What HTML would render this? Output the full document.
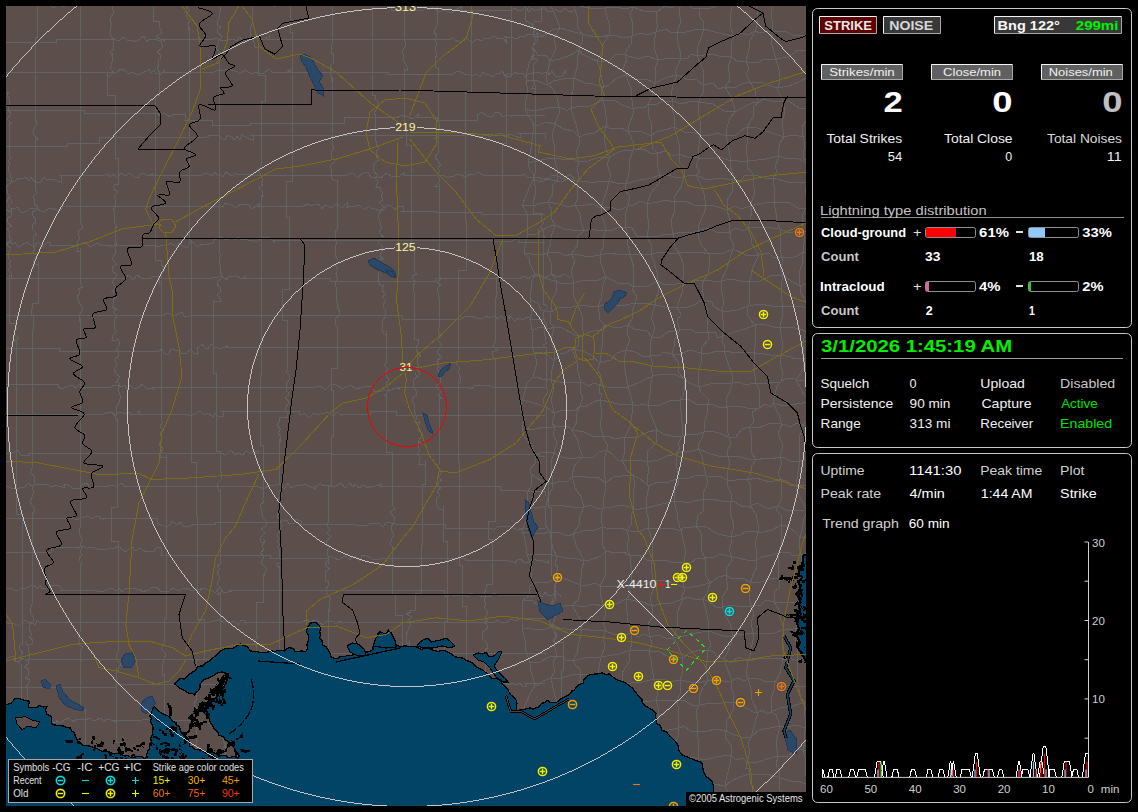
<!DOCTYPE html><html><head><meta charset="utf-8"><style>html,body{margin:0;padding:0;background:#000;width:1138px;height:812px;overflow:hidden}svg{position:absolute;left:0;top:0}text{font-family:"Liberation Sans",sans-serif}</style></head><body>
<svg width="1138" height="812" viewBox="0 0 1138 812">
<defs><clipPath id="mc"><rect x="6" y="6" width="800" height="800"/></clipPath></defs>
<g clip-path="url(#mc)" shape-rendering="crispEdges">
<rect x="6" y="6" width="800" height="800" fill="#5c4f4b"/>
<path d="M6,5H32V5 M32,5 L35,2 L38,4 L42,3 L45,6 L50,5 L53,8 L55,7 L58,3 V5 M56,5 L60,3 L62,6 L65,6 L69,5 L73,5 L78,4 L81,3 V5 M81,5H132V5 M132,5H187V5 M187,5H210V5 M210,5H236V5 M236,5H259V5 M259,5 L261,4 L265,2 L269,4 L273,6 L276,6 L281,4 L286,4 L290,5 L292,4 L297,4 V5 M293,5H350V5 M350,5H391V10 M391,10H423V10 M423,10 L425,8 L429,10 L432,7 L435,9 L439,12 L443,10 L446,11 L449,12 L453,12 L457,9 L461,7 V10 M458,10H503V10 M503,10 L507,10 L512,10 L514,8 L517,10 L522,10 L525,7 L529,12 L532,8 L535,11 L539,9 L543,10 V10 M541,10 L544,7 L548,12 L553,11 L555,9 L558,11 L562,11 L565,8 L569,12 L573,11 V10 M6,42H56V39 M56,39H77V39 M77,39H104V39 M104,39 L107,39 L110,39 L115,39 L117,41 L120,40 L124,37 L127,40 L130,41 L133,40 L136,42 L140,39 L144,36 L147,42 L149,39 L152,40 L156,39 L159,41 L162,39 L164,41 V39 M162,39H211V39 M211,39 L214,39 L218,38 L222,41 L224,40 L228,40 L233,39 L237,41 L240,37 L243,41 L248,39 L252,37 L254,40 L257,36 L261,39 L264,40 L269,36 V39 M266,39H294V39 M294,39H336V39 M336,39H381V39 M381,39H419V39 M419,39H449V39 M449,39 L451,39 L453,38 L455,40 L460,42 L462,41 L466,37 L471,42 L473,42 L477,39 L482,41 L484,39 L488,38 L490,38 L494,36 L498,39 L500,38 L504,39 L506,42 V36 M504,36 L507,38 L510,37 L514,38 L518,38 L521,36 L525,36 L528,34 L532,34 L537,34 L539,33 L542,36 L544,34 L547,33 L552,35 L557,36 V36 M6,72H54V72 M54,72H82V72 M82,72H110V72 M110,72 L114,72 L117,72 L121,69 L126,71 L129,74 L133,72 L137,75 L140,74 L144,72 L147,71 L149,69 L151,73 L154,70 L156,74 L161,73 L164,70 V72 M162,72H194V72 M194,72H214V72 M214,72 L216,71 L219,70 L223,70 L227,69 L231,70 L235,71 L238,72 L240,74 L245,70 L250,73 L253,73 L258,72 V72 M256,72 L260,74 L264,73 L269,69 L272,72 L277,73 L281,72 L286,73 L290,70 V72 M287,72H308V72 M308,72H343V72 M343,72H388V74 M388,74H427V74 M427,74H449V74 M449,74 L453,74 L458,71 L463,73 L465,75 L467,74 L470,75 L474,75 L477,74 L480,77 L483,72 L486,75 L489,74 L493,77 L497,73 L499,74 L502,71 L506,77 V74 M503,74 L506,75 L508,73 L512,75 L515,72 L518,74 L523,73 L525,77 L529,73 L533,73 L537,72 L540,73 L543,73 L547,72 L549,75 L552,71 L555,76 L558,76 L562,76 L565,71 V74 M6,110H51V110 M51,110H84V113 M84,113H137V113 M137,113H158V116 M158,116 L163,113 L167,115 L170,117 L174,114 L178,114 L182,115 L185,114 V120 M184,120H212V125 M212,125H250V123 M250,123H292V123 M292,123H316V123 M316,123H344V117 M344,117H394V117 M394,117 L397,118 L402,115 L405,116 L408,117 L413,119 L418,114 V117 M416,117H438V120 M438,120H477V115 M477,115 L482,112 L487,116 L491,117 L493,116 L495,112 L499,112 L503,117 L507,115 L511,116 V115 M507,115H531V115 M531,115H545V115 M6,146H37V146 M37,146H67V143 M67,143H99V137 M99,137H145V137 M145,137H202V137 M202,137 L206,138 L210,135 L215,136 L219,135 L222,139 L225,140 L228,135 L231,137 L235,140 L237,136 L240,140 L242,134 L244,136 L249,139 L253,140 V135 M250,135H308V135 M308,135H349V135 M349,135H384V135 M384,135H408V135 M408,135H466V135 M466,135 L471,134 L474,135 L477,137 L481,136 L483,136 L487,135 L490,137 L492,134 L494,136 L497,134 L502,133 L506,136 L511,134 L515,136 L520,138 V133 M517,133H540V133 M540,133H545V139 M6,179 L10,181 L15,181 L19,178 L22,179 L26,177 L29,181 L31,177 L33,180 L36,182 L41,182 L44,177 L46,179 L50,179 L53,179 L57,181 L61,182 V175 M59,175H105V175 M105,175 L108,174 L110,177 L114,174 L117,178 L121,173 L125,176 L130,173 L134,177 L138,178 L140,174 L143,173 L148,176 L152,174 V175 M148,175H202V175 M202,175 L206,173 L208,174 L212,176 L215,172 L218,176 L220,174 L223,177 L226,172 L229,174 L232,176 L235,173 L239,175 L242,174 L246,174 L250,174 V175 M249,175H286V175 M286,175H321V175 M321,175H348V175 M348,175 L350,173 L354,174 L358,178 L362,173 L365,173 L368,172 L371,177 L375,177 L378,177 L380,178 L383,176 L387,173 L391,176 L396,176 L400,176 L404,173 V175 M403,175H442V175 M442,175 L447,177 L449,177 L454,176 L458,174 L461,175 L466,177 L470,174 L472,174 L475,175 L478,172 L483,175 V175 M483,175H520V176 M520,176 L524,174 L527,177 L529,177 L531,178 L536,177 L538,177 L541,179 L543,179 L548,178 L553,175 L558,176 L563,179 L565,178 L570,174 L573,178 V176 M6,209 L10,212 L12,208 L16,208 L18,207 L20,212 L24,212 L27,211 L29,209 L33,208 L38,209 L41,211 L44,212 L48,209 L52,208 L57,210 L60,211 L63,207 V206 M62,206H112V206 M112,206H170V206 M170,206H220V206 M220,206 L223,207 L225,203 L228,204 L231,205 L235,207 L237,207 L241,204 L246,205 L248,204 L252,209 L256,206 L259,204 V206 M257,206H303V206 M303,206 L308,204 L312,206 L314,204 L319,204 L322,209 L325,205 L328,206 L332,208 L335,205 L338,204 L342,208 L347,203 V208 M346,208 L350,206 L355,206 L359,205 L364,210 L369,206 L371,208 L375,209 L380,211 L383,210 L387,205 L391,206 L395,210 L398,206 L403,206 V211 M400,211H436V212 M436,212H481V214 M481,214H522V214 M522,214H545V214 M6,245 L8,242 L13,244 L15,242 L17,246 L21,246 L26,242 L29,244 L34,247 L38,242 L43,247 L48,242 L50,242 V245 M49,245H71V245 M71,245 L75,246 L78,244 L81,244 L86,242 L90,247 L94,245 L98,243 L102,246 L104,245 L106,245 L108,245 L113,247 L116,243 V245 M116,245H153V245 M153,245 L158,247 L162,245 L167,245 L171,243 L176,247 L178,243 L183,246 L187,248 L190,242 L193,242 L198,247 L202,244 L206,244 L209,244 L213,243 V239 M213,239 L216,240 L220,236 L224,239 L229,239 L232,238 L236,240 L238,237 L241,240 L245,239 L248,240 L253,240 L257,242 L261,239 L264,237 L269,237 L274,242 V240 M272,240H298V240 M298,240H358V240 M358,240H386V240 M386,240H441V240 M441,240H493V240 M493,240 L495,242 L500,241 L504,242 L508,241 L512,241 L516,239 L518,238 V242 M518,242H545V242 M6,278H42V278 M42,278H79V278 M79,278H125V278 M125,278 L129,275 L133,280 L137,275 L141,278 L145,278 L149,279 L152,277 L157,276 L161,277 V278 M161,278H211V278 M211,278 L215,277 L219,277 L222,276 L226,280 L229,276 L234,277 L236,275 L241,279 L245,277 V278 M242,278H284V278 M284,278H330V281 M330,281H361V281 M361,281H400V281 M400,281H435V278 M435,278H474V278 M474,278H521V276 M521,276 L524,276 L526,277 L529,279 L532,275 L536,277 L539,274 L542,277 L545,278 L548,276 L552,274 L555,276 L559,277 L564,274 L569,277 V276 M6,315H38V315 M38,315H88V315 M88,315H118V315 M118,315H160V315 M160,315 L163,316 L167,313 L170,314 L175,316 L178,314 L182,312 L184,316 L189,316 L191,315 V315 M190,315H241V315 M241,315H286V315 M286,315H337V315 M337,315H370V315 M370,315H402V319 M402,319H461V319 M461,319 L466,316 L471,316 L476,318 L479,318 L483,318 L485,316 L490,318 L494,316 L498,319 L501,316 L505,320 L509,316 V319 M508,319 L510,316 L515,321 L519,318 L523,320 L527,317 L530,318 V319 M529,319H545V319 M6,348H59V351 M59,351H116V351 M116,351H159V351 M159,351 L162,349 L164,353 L166,354 L169,354 L171,349 L175,350 L179,350 L181,353 L186,354 L190,349 L194,353 L197,354 V347 M196,347 L198,348 L202,344 L205,348 L208,349 L211,344 L214,347 L218,348 L220,348 L223,348 L227,346 V347 M226,347H262V347 M262,347H304V347 M304,347H350V347 M350,347H399V347 M399,347H432V347 M432,347H479V347 M479,347H510V347 M510,347H537V347 M537,347H545V347 M6,384H58V387 M58,387 L63,389 L65,387 L69,386 L72,385 L76,388 L80,384 L84,388 V387 M82,387H111V387 M111,387 L114,385 L118,386 L121,387 L125,385 L127,390 L130,385 L134,389 L137,388 L140,387 L142,384 L147,389 L150,388 L153,389 V387 M152,387H189V387 M189,387H210V387 M210,387H232V387 M232,387H270V387 M270,387H315V387 M315,387 L320,386 L323,388 L325,390 L330,385 L334,384 L338,386 L342,389 L346,387 L349,386 L351,385 L355,388 L358,388 V389 M358,389 L361,387 L364,387 L368,386 L372,387 L374,391 L377,391 L382,391 L384,389 L386,391 L391,390 L394,388 L399,389 V387 M397,387H442V387 M442,387H469V387 M469,387 L472,389 L475,385 L478,386 L483,385 L488,385 L493,388 L495,387 V387 M495,387H527V387 M527,387H545V387 M6,414H38V414 M38,414H97V414 M97,414 L101,414 L104,414 L109,412 L112,412 L115,416 L119,412 L121,412 L125,414 L128,412 L132,415 L136,414 L139,411 V414 M137,414H186V414 M186,414 L190,416 L192,415 L195,414 L200,411 L204,415 L208,413 L213,417 L215,413 L218,416 L223,416 V411 M220,411H275V411 M275,411H299V414 M299,414 L302,415 L304,413 L308,417 L310,417 L314,413 L318,415 L322,413 L325,413 L328,412 L330,414 L334,416 L336,412 L341,415 V414 M340,414H370V411 M370,411H396V415 M396,415H440V415 M440,415H498V415 M498,415H545V415 M6,453 L9,453 L12,453 L15,452 L18,450 L21,456 L25,455 L29,455 V453 M28,453H84V453 M84,453H128V453 M128,453H181V453 M181,453H221V453 M221,453 L226,455 L231,450 L235,455 L238,453 L243,455 L246,451 L251,454 L254,452 L258,451 V453 M254,453H289V453 M289,453H331V454 M331,454H352V454 M352,454H388V454 M388,454H414V454 M414,454H454V454 M454,454H505V454 M505,454H539V456 M539,456H545V456 M6,486 L9,487 L11,488 L14,488 L18,489 L21,487 L25,487 L28,483 L32,486 L34,485 L39,484 L44,485 L47,484 L52,487 L55,485 L58,486 L62,487 L64,487 V486 M63,486 L66,484 L70,486 L72,488 L75,488 L80,489 L82,485 L87,483 L89,486 L93,488 L97,486 L102,486 L106,487 L109,485 L113,485 L117,487 L121,483 L124,485 V486 M123,486H165V486 M165,486H205V486 M205,486H255V486 M255,486 L259,487 L264,489 L269,485 L271,485 L275,486 L277,484 L281,486 L284,489 L288,483 L291,488 L294,487 L296,485 L301,486 L305,484 L308,486 L311,487 L315,489 V486 M314,486 L317,486 L320,483 L324,486 L328,485 L332,487 L336,486 L339,484 L341,483 L345,488 L350,483 L353,487 L355,484 L358,487 V486 M357,486 L359,488 L364,485 L368,488 L371,486 L376,486 L381,484 V486 M379,486H414V486 M414,486H450V486 M450,486H480V486 M480,486H500V490 M500,490H525V491 M525,491H545V496 M6,518H36V518 M36,518H73V518 M73,518 L77,520 L81,518 L85,517 L88,516 L91,519 L95,517 L98,516 L103,519 V518 M99,518H157V524 M157,524 L161,525 L164,526 L168,526 L170,525 L172,521 L177,525 L181,522 L183,526 L186,527 L190,526 L193,525 V524 M192,524H215V522 M215,522H252V522 M252,522H279V522 M279,522 L283,521 L287,520 L289,524 L294,523 L296,519 L298,520 L301,521 V524 M300,524H321V524 M321,524H350V524 M350,524 L355,525 L359,526 L363,525 L368,525 L370,523 L374,523 L379,523 L383,527 L387,522 L391,523 L396,524 L399,524 V524 M397,524H445V528 M445,528H492V528 M492,528 L494,530 L497,527 L502,526 L505,526 L509,526 L513,528 L516,529 L518,529 L521,529 V528 M519,528H545V528 M6,552H51V547 M51,547H78V549 M78,549 L81,546 L86,548 L88,548 L93,547 L97,549 L100,549 L102,549 L107,549 L111,548 L115,548 V549 M114,549 L118,546 L123,550 L126,552 L130,548 L133,547 L135,551 L140,548 L142,550 L147,552 L149,551 L154,551 L157,547 L161,548 V555 M160,555H195V555 M195,555H225V555 M225,555H270V558 M270,558H328V558 M328,558 L330,556 L334,558 L339,560 L343,557 L346,556 L350,560 L353,556 L355,556 L360,561 L362,555 L367,556 L371,558 L373,560 L377,559 L380,559 L384,558 L387,559 L390,558 V558 M388,558H432V558 M432,558H465V560 M465,560H504V560 M504,560 L509,561 L511,561 L515,563 L518,559 L521,559 L524,563 L526,562 L529,562 L533,558 L537,561 L540,560 L543,561 L548,563 V560 M6,588 L10,588 L14,590 L18,591 L21,588 L26,588 L30,586 L34,585 L37,589 L40,585 L42,589 L47,588 L50,586 L54,585 L59,586 L62,589 V590 M60,590H94V590 M94,590 L97,591 L102,591 L104,591 L107,590 L111,588 L116,591 L119,588 L122,592 L126,588 L128,588 L132,588 L136,589 L140,589 L142,592 L146,591 V590 M144,590 L149,590 L152,587 L157,587 L160,591 L164,592 L169,591 L173,588 L177,590 L181,590 L183,588 L187,588 L192,591 L195,590 L200,589 V590 M196,590 L199,593 L202,588 L206,589 L208,590 L211,590 L215,593 L220,587 L223,592 L228,592 L232,591 V590 M229,590H264V590 M264,590H322V590 M322,590H355V590 M355,590H397V590 M397,590H444V595 M444,595 L447,597 L451,594 L454,596 L459,595 L461,596 L464,595 L468,597 L470,593 L475,595 L478,594 L481,597 L485,596 L490,597 L493,593 L498,595 L502,595 V595 M500,595H529V595 M529,595 L534,597 L537,592 L542,597 L545,592 L547,595 L552,595 L557,593 L560,596 V595 M6,622 L11,624 L13,623 L17,625 L20,625 L25,620 L28,623 L31,622 L35,625 L37,620 L40,623 L45,622 V622 M42,622H77V622 M77,622H121V622 M121,622H160V622 M160,622H202V622 M202,622 L205,623 L210,622 L215,621 L219,620 L221,620 L223,623 L227,621 L232,622 L234,621 L238,625 L241,620 L245,621 V622 M243,622H302V622 M302,622 L307,620 L310,622 L315,620 L319,622 L323,625 L327,621 L330,621 L333,621 L336,624 L340,621 V622 M338,622H398V622 M398,622H455V622 M455,622H486V620 M486,620 L488,622 L493,622 L495,622 L498,620 L501,623 L505,622 L507,623 L510,619 L513,620 L518,620 V618 M516,618H545V617 M6,659 L10,657 L13,656 L15,662 L18,661 L20,659 L23,658 L25,660 L28,660 V659 M27,659H67V659 M67,659H126V659 M126,659H185V659 M185,659H212V659 M212,659H239V659 M239,659H272V653 M272,653H314V653 M314,653H347V653 M347,653H383V653 M383,653H428V653 M428,653H477V653 M477,653H501V653 M501,653H523V653 M523,653H545V655 M6,687H56V687 M56,687H116V684 M116,684H138V684 M138,684H185V684 M185,684H236V681 M236,681H270V681 M270,681H292V681 M292,681H334V681 M334,681H360V681 M360,681H413V681 M413,681 L415,679 L418,680 L422,681 L425,678 L428,684 L433,681 L436,683 L440,679 L444,680 L448,679 V685 M447,685H482V683 M482,683 L485,685 L487,682 L490,685 L492,684 L497,682 L500,685 L504,683 L506,683 L509,685 L512,683 L516,685 L519,683 L523,686 L526,686 V683 M524,683H545V683 M6,722H56V720 M56,720 L60,723 L64,720 L69,718 L71,720 L74,722 L76,719 L78,720 L83,719 L86,720 L89,718 L94,721 L96,720 L101,718 L104,722 L106,719 L111,720 L115,722 V720 M112,720H138V720 M138,720 L142,720 L144,719 L148,719 L151,722 L155,719 L158,719 L161,720 L164,718 V720 M164,720H192V722 M192,722 L197,722 L199,721 L203,721 L206,721 L209,724 L212,723 L216,723 L220,725 L223,724 L225,722 L229,719 L234,719 L237,720 L242,722 V722 M240,722H292V722 M292,722H334V722 M334,722H372V722 M372,722H409V722 M409,722H447V722 M447,722H472V718 M472,718H501V718 M501,718H545V718 M6,760H32V760 M32,760 L36,758 L39,762 L42,762 L45,762 L47,763 L52,763 L56,759 V760 M53,760H87V763 M87,763H144V763 M144,763 L147,765 L152,766 L155,762 L159,761 L161,762 L163,762 L166,763 L169,762 L173,761 L177,765 L181,763 L185,761 L188,763 V763 M188,763H209V763 M209,763 L213,765 L216,764 L219,760 L223,765 L226,762 L228,762 L230,762 L234,762 L237,764 L239,762 L244,762 L247,766 L252,765 L256,762 L258,761 V763 M257,763H279V763 M279,763H308V763 M308,763H368V763 M368,763 L372,765 L376,761 L379,764 L384,761 L388,765 L392,763 L397,763 L401,761 L406,763 L409,761 L412,765 L416,761 L419,761 L422,762 L425,766 V763 M424,763 L427,762 L430,764 L432,766 L434,763 L437,764 L442,764 L447,763 L451,763 L454,765 L457,761 L460,765 L464,761 L467,764 L472,764 L476,764 L480,764 L482,765 L487,765 V767 M484,767H538V764 M538,764H545V764 M6,794H58V794 M58,794H94V794 M94,794 L97,791 L100,796 L103,795 L106,793 L109,793 L114,795 L116,792 L119,796 L123,795 L127,792 L131,792 L136,792 L138,797 L141,793 L146,795 L151,794 V794 M150,794H190V794 M190,794 L193,797 L196,796 L199,793 L201,795 L206,794 L209,797 L213,795 L216,795 L219,797 L222,795 L226,794 L230,795 L234,794 L237,797 L240,796 L244,795 L247,796 L252,796 V794 M249,794H299V794 M299,794 L303,795 L305,794 L309,795 L312,796 L315,795 L318,797 L322,796 V794 M319,794H366V794 M366,794H397V790 M397,790 L402,788 L405,790 L409,793 L412,793 L417,789 L421,789 L426,790 L429,793 L433,791 L436,789 L440,790 L442,793 L446,790 L450,788 V790 M449,790H505V790 M505,790H544V791 M544,791H545V789 M3,6 L4,10 L6,14 L2,16 L4,19 L5,23 L5,26 L2,28 L6,32 L5,36 L3,41 L5,45 H3 M3,43V70H3 M3,70V92H9 M9,92 L7,95 L9,98 L10,102 L9,106 L8,110 L11,114 L7,119 L11,123 H9 M9,121V154H9 M9,154 L11,158 L8,161 L10,164 L8,168 L8,171 L10,173 L11,178 L11,181 L11,183 L6,186 L7,190 L7,193 L10,196 L7,201 H9 M9,197 L12,202 L8,206 L11,209 L12,212 L11,216 L7,219 L8,223 L12,226 L7,229 L9,231 L9,236 L12,240 L9,242 H9 M9,241 L7,245 L11,248 L9,252 L8,255 L8,258 L11,261 L9,264 L11,267 L8,270 L11,273 L11,278 H9 M9,275V323H16 M16,323 L17,328 L15,331 L14,335 L19,338 L13,341 H16 M16,339V360H16 M16,360V391H16 M16,391V418H16 M16,418V465H16 M16,465V514H22 M22,514V547H22 M22,547V595H22 M22,595V644H21 M21,644 L19,646 L20,650 L23,652 L20,657 L23,659 L18,662 L21,665 H21 M21,665V711H20 M20,711V726H20 M20,726V745H20 M20,745V775H22 M22,775V822H26 M37,6V37H35 M35,37V87H35 M35,87V119H35 M35,119 L37,122 L36,125 L34,129 L33,134 L35,136 L38,139 H35 M35,136V184H35 M35,184 L35,188 L37,193 L33,197 L35,200 L34,204 L38,207 L37,210 L32,212 L33,216 L36,220 L35,225 H35 M35,222 L32,225 L32,229 L37,234 L33,237 L33,241 L33,244 L35,249 L33,252 L37,256 L33,261 L34,264 H38 M38,261V303H32 M32,303 L33,305 L32,309 L31,313 L33,316 L33,321 L34,326 L33,330 H32 M32,330V346H32 M32,346V363H32 M32,363V403H32 M32,403V419H32 M32,419V468H32 M32,468 L31,471 L30,473 L35,477 L34,480 L34,485 L32,489 L34,491 L33,494 L32,497 L30,502 L33,506 L35,510 L34,513 H32 M32,512V551H32 M32,551V574H32 M32,574V604H32 M32,604 L31,607 L30,612 L33,617 L33,621 L30,625 L29,627 L29,630 L32,634 L29,637 L33,640 L32,644 H27 M27,641 L25,643 L28,646 L28,649 L29,652 L29,655 L29,657 L29,660 L28,664 L24,667 L29,669 L28,672 L28,676 L25,678 L30,680 L28,684 L25,687 H27 M27,686V704H27 M27,704 L25,708 L27,711 L25,713 L25,718 L28,721 L25,724 L26,726 L28,729 L29,733 H27 M27,731 L26,733 L26,735 L24,740 L27,742 L25,744 L24,748 L26,750 H27 M27,748 L27,751 L27,754 L29,759 L24,762 L24,765 L27,769 L24,772 L26,775 L28,780 H34 M34,779V799H39 M39,799 L38,803 L39,806 L40,810 L39,814 L36,818 L40,822 H39 M80,6V26H80 M80,26V74H80 M80,74V112H80 M80,112V158H80 M80,158V183H80 M80,183V209H80 M80,209 L80,213 L80,218 L81,223 L82,225 L83,228 L78,231 L79,236 L79,239 L77,243 L78,246 L77,251 H80 M80,248V284H80 M80,284 L83,287 L78,289 L80,293 L77,297 L78,300 L80,304 L82,307 L82,311 L79,316 L79,321 H80 M80,318V335H80 M80,335V382H80 M80,382V412H80 M80,412V450H80 M80,450V482H80 M80,482V528H80 M80,528 L79,533 L80,535 L82,539 L82,541 L80,545 L82,549 L80,551 L82,555 L79,559 L82,564 L80,566 H80 M80,564V613H80 M80,613V632H80 M80,632 L79,635 L78,638 L80,640 L78,644 L83,647 L80,651 L80,655 L80,658 L82,660 L80,662 H80 M80,660V709H85 M85,709V746H85 M85,746V791H85 M85,791 L85,795 L85,799 L87,801 L82,805 L83,808 L87,810 L83,815 L82,817 L83,819 L82,823 L83,826 L87,830 H90 M112,6 L113,10 L114,13 L111,17 L110,20 L112,25 L110,27 L111,31 L110,35 L114,40 L113,42 L113,45 L114,49 L110,52 L112,56 H112 M112,53 L112,58 L112,62 L111,66 L110,68 L112,70 L113,73 L110,76 H107 M107,73V95H115 M115,95V114H115 M115,114V158H118 M118,158V184H115 M115,184 L113,188 L118,192 L114,196 L115,198 L115,202 L116,206 L113,210 L115,212 L114,216 L114,220 L115,223 L117,227 H115 M115,226V254H115 M115,254 L112,259 L117,264 L112,267 L112,271 L117,275 L114,279 L112,283 L116,287 L112,291 H115 M115,291 L113,293 L117,297 L113,299 L114,303 L112,307 L117,309 L113,312 L117,316 L114,321 L115,325 L114,328 L116,332 L113,335 L112,340 H117 M117,338 L119,341 L120,345 L116,349 L119,353 L118,357 L114,360 L116,362 L116,367 L114,369 L116,374 L120,377 L116,382 H117 M117,381 L120,384 L118,387 L119,392 L120,395 L120,399 L119,403 L116,408 L117,412 L115,416 L116,420 H117 M117,418V462H117 M117,462V507H111 M111,507V541H118 M118,541V589H118 M118,589V635H118 M118,635V652H118 M118,652 L116,656 L117,660 L121,664 L119,667 L118,672 H116 M116,668V714H116 M116,714V742H123 M123,742V786H123 M123,786 L122,789 L124,794 L125,796 L123,798 L124,802 H123 M123,801 L124,805 L124,807 L120,811 L125,814 L121,818 L120,822 L122,825 L123,830 L123,835 H116 M153,6V21H159 M159,21 L159,26 L161,30 L162,33 L156,36 L161,40 L162,44 L162,48 L157,52 L161,55 L160,59 L158,61 L159,65 L157,68 L158,70 L160,74 H159 M159,71V95H155 M155,95V118H155 M155,118V158H155 M155,158V198H155 M155,198V215H155 M155,215V260H161 M161,260 L161,264 L164,268 L164,271 L161,274 L162,277 L159,280 L159,284 H161 M161,280V306H161 M161,306V341H161 M161,341V363H161 M161,363V386H161 M161,386V415H161 M161,415 L161,420 L163,422 L160,426 L163,430 L160,433 L161,436 L162,440 L159,445 L163,448 L161,453 L160,457 H166 M166,455V503H166 M166,503V528H166 M166,528V571H166 M166,571V618H164 M164,618V644H164 M164,644 L161,649 L165,653 L166,655 L164,658 L163,663 L162,665 L162,669 L162,672 L162,675 H164 M164,673V722H164 M164,722V756H164 M164,756V776H164 M164,776V821H164 M189,6 L186,8 L190,10 L186,14 L187,17 L190,20 L188,25 L188,30 H189 M189,27V56H189 M189,56 L190,61 L189,65 L189,68 L190,73 H189 M189,72V106H189 M189,106V152H189 M189,152V185H189 M189,185V219H189 M189,219V240H191 M191,240V282H191 M191,282V310H191 M191,310V351H191 M191,351V398H191 M191,398V420H191 M191,420V462H196 M196,462V488H196 M196,488V515H197 M197,515V540H197 M197,540V584H197 M197,584V619H204 M204,619V659H196 M196,659V677H196 M196,677 L195,681 L198,683 L193,686 L197,688 L196,691 L196,694 L197,699 L194,703 L195,707 L197,711 H196 M196,707V756H196 M196,756V781H197 M197,781V829H197 M219,6 L221,11 L219,13 L220,16 L218,20 L217,25 L221,27 L217,30 L218,33 L222,36 L221,39 H219 M219,39 L218,44 L216,49 L220,52 L217,57 L219,60 L216,63 H219 M219,62V91H219 M219,91V140H219 M219,140V159H219 M219,159V205H219 M219,205V224H219 M219,224V251H219 M219,251 L220,254 L221,256 L219,259 L219,264 L221,267 L220,272 L222,275 L222,278 L217,282 L217,285 L220,287 L220,292 L217,295 L219,297 L221,301 H213 M213,300V323H213 M213,323V373H216 M216,373V397H216 M216,397V423H216 M216,423V451H220 M220,451V466H220 M220,466 L220,471 L222,474 L221,477 L222,479 L217,484 L218,488 L219,491 H220 M220,489V527H220 M220,527V564H220 M220,564 L217,566 L220,569 L217,573 L220,577 L219,580 L217,584 L219,586 L221,589 L221,592 L217,594 H220 M220,592V623H220 M220,623V640H220 M220,640V672H226 M226,672V694H226 M226,694 L226,699 L224,703 L229,706 L226,708 L227,713 L229,717 L228,721 L228,725 H226 M226,721 L228,725 L224,729 L226,733 L224,737 L223,742 L226,744 L224,747 H226 M226,746 L225,750 L226,752 L224,757 L224,759 L225,762 L226,766 L225,770 L229,772 L226,776 L227,778 L224,782 L226,785 L223,789 H226 M226,785 L228,789 L225,792 L227,794 L225,798 L226,802 L225,806 L226,811 H234 M252,6V24H252 M252,24 L250,29 L250,31 L250,36 L253,39 L254,43 L255,47 H258 M258,45V75H265 M265,75V101H261 M261,101V129H261 M261,129V166H261 M261,166 L258,169 L260,173 L261,176 L263,180 L261,183 L263,186 L259,188 L262,191 L263,196 H261 M261,195V235H261 M261,235V276H261 M261,276V306H261 M261,306V345H261 M261,345V375H260 M260,375V413H260 M260,413V445H263 M263,445V477H263 M263,477V493H263 M263,493 L264,496 L262,500 L264,502 L260,505 L261,507 L261,511 L263,515 L262,517 L266,521 L266,526 L261,529 L265,533 L262,536 L260,538 L261,542 H263 M263,539 L265,541 L262,546 L264,550 L260,553 L264,556 L263,559 L261,562 L263,565 L266,568 L266,570 L265,573 L264,576 H263 M263,574V602H256 M256,602V626H256 M256,626 L257,630 L256,635 L258,638 L254,640 L255,645 H256 M256,642V692H256 M256,692 L255,694 L258,697 L255,700 L253,704 L254,708 L256,711 L255,713 L256,718 L254,722 L257,726 L258,730 L259,733 H256 M256,731V768H250 M250,768 L253,770 L250,773 L249,776 L251,779 L253,781 L247,786 L252,789 L249,792 L250,794 L250,798 H250 M250,795 L248,799 L248,803 L249,807 L248,810 L251,814 H250 M290,6V32H292 M292,32V74H292 M292,74V115H292 M292,115V143H292 M292,143V181H286 M286,181V217H289 M289,217V241H289 M289,241V289H282 M282,289V320H287 M287,320V343H287 M287,343V370H287 M287,370 L286,372 L289,375 L289,380 L286,385 L286,389 L289,394 L285,398 L289,401 L288,404 L285,409 L287,413 L287,417 H279 M279,417 L279,422 L278,424 L277,426 L281,429 L278,433 L280,436 L281,441 H279 M279,439V478H279 M279,478 L279,483 L282,485 L282,488 L278,492 L282,496 L278,498 L278,501 L281,504 L281,507 L278,512 L277,516 L280,520 H279 M279,519 L281,524 L281,528 L280,531 L277,536 L279,538 L277,542 L281,544 L277,547 L280,550 L279,553 L279,556 L281,560 L282,562 L276,564 L280,569 H279 M279,565V599H279 M279,599V635H279 M279,635V663H279 M279,663V684H279 M279,684V724H273 M273,724 L271,729 L270,731 L271,736 L275,739 L274,742 H273 M273,741 L275,745 L271,750 L274,752 L275,755 L272,759 L276,761 L272,764 L274,768 L273,772 L272,775 L272,779 L273,783 L273,787 H267 M267,786 L269,789 L264,794 L267,798 L266,803 L265,805 L268,809 L268,812 H267 M332,6V44H332 M332,44 L331,48 L331,52 L334,56 L333,58 L334,61 L333,63 L330,66 L332,69 L330,72 L331,76 L331,81 H332 M332,77V107H332 M332,107V145H332 M332,145 L334,148 L332,151 L331,155 L332,158 L335,161 L330,166 L331,169 L332,172 L331,176 L333,180 H337 M337,180V197H337 M337,197V229H337 M337,229 L335,232 L335,234 L335,238 L337,242 L336,245 L335,250 L335,254 L337,259 L339,263 L335,265 L338,269 L336,273 H337 M337,272 L336,276 L338,279 L335,283 L336,287 L336,290 L336,294 L336,297 L337,302 L338,306 H337 M337,305 L338,309 L340,312 L339,316 L335,319 L335,324 L338,327 L337,329 H337 M337,328V368H331 M331,368V390H333 M333,390V406H333 M333,406V436H331 M331,436V485H328 M328,485V518H328 M328,518 L329,520 L328,523 L327,525 L330,530 L327,533 L331,537 L326,541 L326,545 L330,547 L327,551 L328,556 L328,558 L329,563 H328 M328,560 L325,564 L327,567 L330,569 L325,572 L326,577 L325,580 L329,582 L328,586 L326,589 L327,593 L330,598 L330,601 L329,603 L329,607 L329,611 H328 M328,609V630H328 M328,630V650H321 M321,650V689H321 M321,689 L321,692 L320,694 L324,699 L320,701 L321,705 L321,708 L324,712 L319,716 L322,718 L322,722 L319,725 L319,729 L322,732 L318,735 H321 M321,732 L321,734 L321,736 L324,740 L323,743 L322,747 L320,750 L320,753 L321,757 L322,760 L319,765 L318,768 L318,771 L323,774 L324,778 H321 M321,776V821H322 M372,6V43H372 M372,43V76H372 M372,76V95H375 M375,95 L376,100 L378,102 L378,107 L376,110 L374,113 L376,117 H375 M375,114V141H376 M376,141 L376,144 L379,148 L376,152 L376,156 L379,160 L375,162 L373,167 L373,171 L378,175 L375,178 L377,180 L377,184 L376,187 H381 M381,187 L380,190 L383,193 L381,196 L383,200 L379,202 L383,206 L383,208 L381,211 L378,216 L379,219 L380,222 L381,226 L382,228 L379,232 L383,236 H381 M381,235 L383,237 L378,242 L382,246 L383,250 L380,255 L383,259 H381 M381,258 L380,262 L381,266 L381,269 L379,272 L378,276 L379,281 L378,283 L382,286 H384 M384,284 L383,286 L382,291 L385,293 L385,295 L382,297 L386,301 L383,305 L383,307 L385,309 L385,314 L385,317 L383,320 L382,322 L382,327 L382,330 L384,334 H386 M386,331V363H386 M386,363 L384,365 L388,369 L386,371 L386,376 L389,380 L386,384 L387,387 L389,391 L385,395 H386 M386,393V426H386 M386,426V452H392 M392,452V500H392 M392,500 L392,504 L395,509 L390,512 L394,517 L394,521 L393,523 L391,528 L392,531 L394,535 L392,538 L391,541 L390,544 L394,548 H392 M392,546V594H395 M395,594V615H402 M402,615V664H402 M402,664V697H402 M402,697 L399,699 L402,702 L404,705 L399,708 L400,712 L400,715 L402,717 L401,722 H402 M402,719 L402,721 L403,723 L401,727 L400,730 L400,733 L402,737 L401,741 H402 M402,739V782H404 M404,782V824H404 M404,6V40H404 M404,40 L406,43 L405,47 L402,50 L403,54 L403,59 L405,63 L407,67 L407,70 H404 M404,68V83H404 M404,83V123H406 M406,123V145H411 M411,145V167H411 M411,167V190H411 M411,190V215H411 M411,215V246H414 M414,246V271H414 M414,271 L417,274 L412,276 L413,279 L415,282 L413,287 L414,292 L414,296 H414 M414,293V339H419 M419,339 L418,342 L418,344 L416,349 L418,354 L421,356 L417,358 L418,361 L417,363 L419,366 L417,369 L420,373 L418,377 H415 M415,373 L417,377 L413,380 L413,384 L413,386 L415,389 L416,391 L417,395 L412,398 L413,402 L415,406 L414,408 L414,410 L415,413 L417,418 L415,422 H419 M419,421 L419,425 L418,430 L422,433 L422,436 L418,441 L422,444 H419 M419,441 L418,445 L418,447 L420,451 L417,454 L420,457 L420,459 L419,464 H425 M425,460V484H422 M422,484V506H422 M422,506V545H421 M421,545V593H415 M415,593V610H409 M409,610 L411,612 L406,614 L412,617 L407,621 L411,624 L409,628 L408,630 L406,635 L406,638 L406,643 H409 M409,640V688H414 M414,688 L413,693 L414,697 L413,702 L412,704 L413,709 L416,711 L412,715 L412,719 H414 M414,718 L411,721 L414,726 L415,730 L416,734 L415,737 H414 M414,736V758H415 M415,758V789H408 M408,789V833H408 M437,6V25H437 M437,25 L435,29 L434,32 L437,36 L436,38 L435,42 L437,44 L435,48 L436,51 L437,55 L435,58 L435,61 L435,63 L435,67 L439,69 H438 M438,67V113H438 M438,113 L439,117 L437,120 L439,123 L440,128 L438,130 L439,135 L435,138 H438 M438,136V153H438 M438,153 L435,157 L438,161 L441,165 L437,168 L440,171 L438,173 L439,178 L440,181 L435,186 H439 M439,184V229H439 M439,229V266H439 M439,266 L440,269 L439,274 L439,276 L441,279 L437,282 L441,285 L437,288 L437,290 L438,293 L438,297 H439 M439,297V328H439 M439,328 L438,333 L442,336 L437,340 L442,345 L439,349 L437,353 L442,357 L437,361 H439 M439,358 L437,361 L439,366 L437,369 L438,371 L441,374 L440,379 L440,383 L436,386 L437,388 L441,392 L438,396 L442,398 H439 M439,397V438H439 M439,438V464H439 M439,464 L437,466 L442,471 L440,475 L437,477 L442,480 L439,482 L437,485 L441,488 L437,491 L440,495 L437,498 L436,503 L437,505 L439,509 H443 M443,506V541H447 M447,541V557H447 M447,557V601H447 M447,601V621H444 M444,621V654H444 M444,654 L443,656 L443,658 L444,662 L445,665 L443,668 L446,672 L445,677 L445,681 L441,684 L441,687 L443,692 H444 M444,688 L443,692 L442,697 L445,699 L441,702 L445,705 L443,710 L441,714 L445,717 H444 M444,717V735H444 M444,735V775H444 M444,775 L446,777 L445,781 L443,785 L446,787 L446,790 L446,792 L441,796 L445,799 L443,803 L446,807 L442,809 H444 M471,6V46H471 M471,46V92H465 M465,92V134H465 M465,134V149H465 M465,149V174H465 M465,174V191H465 M465,191V221H466 M466,221V270H458 M458,270V304H458 M458,304V344H458 M458,344V360H458 M458,360 L456,364 L460,368 L458,372 L459,375 L461,378 L460,383 H458 M458,378V422H458 M458,422V462H459 M459,462V511H459 M459,511V540H459 M459,540V565H462 M462,565V606H466 M466,606V646H466 M466,646V675H459 M459,675V712H459 M459,712 L460,715 L458,719 L462,723 L461,726 L462,731 L461,734 L457,738 L457,743 L462,747 L462,751 L458,754 L456,757 H459 M459,756V778H459 M459,778 L459,782 L462,786 L462,791 L461,793 L459,795 L458,800 L460,803 H452 M452,802V825H455 M511,6V33H511 M511,33V53H511 M511,53V76H506 M506,76V101H506 M506,101V143H502 M502,143V188H502 M502,188V233H502 M502,233V262H502 M502,262V277H496 M496,277V297H495 M495,297V342H495 M495,342 L493,346 L498,350 L492,352 L493,356 L494,359 H495 M495,358V408H495 M495,408V456H495 M495,456V482H495 M495,482V521H488 M488,521V539H492 M492,539V584H486 M486,584 L486,589 L484,594 L486,596 L484,601 L486,604 L484,608 L488,612 L486,616 H485 M485,616 L488,619 L484,621 L487,625 L488,628 L482,632 L482,635 L482,638 L486,642 L487,644 L488,647 L486,650 H485 M485,648V682H485 M485,682 L482,686 L488,690 L488,692 L487,697 L484,701 L482,706 L486,710 L486,713 L487,716 L485,720 L487,724 L485,728 L488,731 H489 M489,731V746H489 M489,746V790H489 M489,790V832H489 M541,6V21H535 M535,21 L532,24 L534,29 L537,34 L538,37 L537,42 L532,47 L533,51 L534,54 L532,59 H535 M535,55 L532,57 L538,60 L535,63 L533,67 L534,70 L533,73 L534,78 L533,80 L535,83 L532,88 H535 M535,85V124H535 M535,124V168H535 M535,168 L536,173 L533,177 L535,180 L534,182 L535,186 L535,191 L535,195 L534,199 H535 M535,198 L533,200 L533,204 L535,206 L533,208 L533,211 L533,213 H543 M543,213 L541,216 L541,219 L544,223 L540,227 L544,230 L543,235 L545,237 H543 M543,236V267H543 M543,267V304H545 M545,304 L548,308 L543,313 L543,317 L544,320 L547,325 L545,329 L544,334 L546,338 L545,341 L547,343 L543,345 L546,348 H546 M546,347V384H546 M546,384 L546,387 L547,390 L547,393 L544,398 L543,403 L547,407 H546 M546,407V455H546 M546,455V479H548 M548,479V507H551 M551,507V541H551 M551,541V575H555 M555,575 L555,578 L557,581 L556,584 L554,587 L556,591 H555 M555,591 L555,595 L555,600 L552,603 L555,606 L552,609 L552,613 L555,615 L555,618 L554,622 L552,624 L558,628 L554,631 L556,634 L557,637 L553,639 L554,642 H563 M563,641V670H561 M561,670V705H568 M568,705 L569,710 L566,713 L568,718 L567,722 L568,726 L571,729 L567,732 L571,735 L567,738 L566,742 L570,745 L570,749 H564 M564,749V768H564 M564,768V791H564 M564,791 L566,794 L566,797 L564,800 L562,803 L567,806 L564,810 L566,814 L565,819 L566,821 L563,823 L564,826 L564,830 L562,833 L564,837 H564 M525,11 L530,6 L537,1 L546,-1 M525,11 L526,21 L533,25 L534,37 M534,37 L544,36 L552,30 L560,28 M534,37 L536,39 L532,48 L535,50 M535,50 L538,56 L546,55 L550,61 M535,50 L530,61 L527,71 L526,80 M526,80 L535,80 L540,82 L548,85 M526,80 L528,91 L526,100 L525,109 M525,109 L533,111 L549,108 L559,107 M525,109 L528,115 L532,121 L534,126 M534,126 L539,125 L546,122 L555,124 M534,126 L532,140 L531,149 L528,163 M528,163 L537,161 L546,159 L554,158 M528,163 L530,170 L534,174 L533,180 M533,180 L543,182 L547,179 L557,181 M533,180 L529,188 L526,196 L522,205 M522,205 L534,206 L538,204 L548,202 M522,205 L527,213 L527,228 L528,235 M528,235 L536,234 L548,227 L555,225 M528,235 L525,243 L525,246 L524,253 M524,253 L531,254 L542,255 L547,253 M524,253 L529,258 L530,264 L535,274 M535,274 L540,276 L548,279 L557,282 M535,274 L531,284 L531,290 L530,300 M530,300 L538,303 L541,310 L551,312 M530,300 L532,312 L530,319 L532,330 M532,330 L540,327 L549,329 L554,327 M532,330 L533,335 L532,344 L534,352 M534,352 L543,353 L548,355 L554,361 M534,352 L537,362 L535,370 L533,377 M533,377 L537,377 L542,379 L551,380 M533,377 L527,383 L524,395 L522,400 M522,400 L534,403 L546,407 L554,413 M522,400 L520,409 L524,417 L522,429 M522,429 L535,429 L546,427 L555,427 M522,429 L523,435 L532,446 L535,454 M535,454 L543,452 L546,452 L554,453 M535,454 L536,462 L530,469 L531,474 M531,474 L535,477 L544,482 L553,484 M531,474 L531,486 L527,493 L528,507 M528,507 L535,508 L537,508 L546,506 M528,507 L529,514 L524,525 L522,532 M522,532 L534,533 L541,534 L550,532 M522,532 L524,536 L526,546 L527,554 M527,554 L536,554 L546,554 L557,556 M527,554 L531,566 L531,576 L533,584 M533,584 L538,582 L549,582 L555,578 M533,584 L529,587 L529,596 L523,600 M523,600 L533,601 L538,605 L550,606 M523,600 L522,612 L523,620 L522,628 M522,628 L533,629 L541,630 L553,627 M522,628 L525,640 L525,648 L530,663 M530,663 L540,662 L549,657 L557,656 M530,663 L531,672 L534,681 L535,686 M535,686 L538,685 L543,681 L551,678 M535,686 L531,692 L526,703 L523,710 M523,710 L537,708 L546,713 L558,712 M523,710 L523,719 L531,723 L532,731 M532,731 L539,727 L548,728 L559,727 M532,731 L534,742 L534,751 L535,757 M535,757 L539,758 L540,757 L547,758 M535,757 L528,762 L529,768 L523,777 M523,777 L529,780 L539,780 L546,786 M523,777 L520,788 L522,795 L523,808 M523,808 L534,806 L548,802 L556,804 M523,808 L523,814 L528,829 L530,836 M546,-1 L557,-2 L564,2 L573,4 M546,-1 L553,10 L556,17 L560,28 M560,28 L567,30 L574,32 L582,34 M560,28 L554,38 L556,49 L550,61 M550,61 L560,59 L571,55 L579,50 M550,61 L548,70 L546,78 L548,85 M548,85 L553,81 L563,79 L574,78 M548,85 L553,89 L557,97 L559,107 M559,107 L566,110 L568,110 L571,108 M559,107 L560,112 L558,116 L555,124 M555,124 L564,129 L573,131 L579,137 M555,124 L552,135 L555,148 L554,158 M554,158 L561,159 L573,159 L579,162 M554,158 L557,168 L557,173 L557,181 M557,181 L563,181 L568,179 L578,181 M557,181 L552,186 L553,194 L548,202 M548,202 L559,204 L568,207 L575,205 M548,202 L551,209 L551,218 L555,225 M555,225 L564,229 L572,230 L584,231 M555,225 L552,234 L550,246 L547,253 M547,253 L558,252 L566,256 L571,254 M547,253 L551,263 L552,274 L557,282 M557,282 L563,284 L571,283 L574,283 M557,282 L556,292 L551,302 L551,312 M551,312 L557,308 L572,307 L578,306 M551,312 L550,317 L550,323 L554,327 M554,327 L562,328 L575,335 L584,335 M554,327 L551,340 L554,350 L554,361 M554,361 L560,354 L565,353 L572,349 M554,361 L552,370 L551,376 L551,380 M551,380 L563,383 L571,382 L581,382 M551,380 L554,389 L551,399 L554,413 M554,413 L563,410 L574,411 L580,406 M554,413 L554,417 L552,423 L555,427 M555,427 L561,426 L568,426 L572,430 M555,427 L553,435 L557,442 L554,453 M554,453 L562,457 L572,459 L583,457 M554,453 L551,462 L552,476 L553,484 M553,484 L557,482 L568,481 L572,476 M553,484 L552,489 L548,497 L546,506 M546,506 L556,505 L573,507 L584,507 M546,506 L545,514 L546,526 L550,532 M550,532 L560,533 L568,536 L573,534 M550,532 L551,539 L553,549 L557,556 M557,556 L567,558 L577,559 L584,561 M557,556 L555,564 L558,568 L555,578 M555,578 L563,578 L573,582 L580,585 M555,578 L555,588 L554,597 L550,606 M550,606 L558,609 L566,605 L572,605 M550,606 L548,616 L550,623 L553,627 M553,627 L566,629 L575,629 L582,629 M553,627 L556,637 L554,644 L557,656 M557,656 L564,657 L565,660 L573,661 M557,656 L553,662 L555,671 L551,678 M551,678 L562,678 L571,675 L581,674 M551,678 L553,688 L557,703 L558,712 M558,712 L561,711 L565,705 L572,707 M558,712 L559,719 L558,725 L559,727 M559,727 L569,728 L578,733 L584,733 M559,727 L553,740 L551,746 L547,758 M547,758 L558,756 L571,752 L583,750 M547,758 L544,768 L548,778 L546,786 M546,786 L557,785 L565,777 L579,777 M546,786 L547,792 L553,796 L556,804 M556,804 L562,800 L566,805 L576,801 M556,804 L557,811 L554,824 L552,834 M573,4 L584,7 L595,9 L605,8 M573,4 L577,16 L577,26 L582,34 M582,34 L590,36 L602,37 L609,35 M582,34 L583,39 L580,47 L579,50 M579,50 L582,54 L592,59 L597,61 M579,50 L577,60 L577,68 L574,78 M574,78 L585,83 L593,84 L604,87 M574,78 L573,90 L571,97 L571,108 M571,108 L581,106 L590,106 L603,100 M571,108 L574,119 L576,124 L579,137 M579,137 L587,134 L594,133 L606,126 M579,137 L579,145 L576,152 L579,162 M579,162 L588,161 L597,158 L610,157 M579,162 L577,169 L579,175 L578,181 M578,181 L589,182 L596,182 L609,181 M578,181 L577,191 L578,197 L575,205 M575,205 L586,205 L593,204 L601,208 M575,205 L580,214 L581,222 L584,231 M584,231 L591,229 L600,231 L606,230 M584,231 L577,237 L578,245 L571,254 M571,254 L579,255 L589,257 L600,255 M571,254 L575,261 L571,271 L574,283 M574,283 L584,280 L596,281 L606,277 M574,283 L573,288 L574,297 L578,306 M578,306 L583,305 L591,307 L598,306 M578,306 L583,318 L582,326 L584,335 M584,335 L589,332 L600,330 L605,325 M584,335 L578,338 L579,346 L572,349 M572,349 L583,351 L591,355 L600,363 M572,349 L577,362 L577,368 L581,382 M581,382 L589,386 L594,383 L600,385 M581,382 L580,392 L583,397 L580,406 M580,406 L585,407 L593,402 L600,400 M580,406 L576,415 L577,422 L572,430 M572,430 L584,432 L592,436 L603,436 M572,430 L578,441 L580,450 L583,457 M583,457 L593,458 L599,452 L607,450 M583,457 L576,464 L574,467 L572,476 M572,476 L586,477 L597,477 L606,483 M572,476 L575,488 L581,497 L584,507 M584,507 L590,505 L598,509 L603,508 M584,507 L580,516 L579,525 L573,534 M573,534 L583,531 L595,530 L603,527 M573,534 L576,545 L580,553 L584,561 M584,561 L590,560 L601,556 L606,551 M584,561 L582,568 L581,578 L580,585 M580,585 L584,586 L596,583 L600,586 M580,585 L580,592 L578,600 L572,605 M572,605 L584,607 L593,604 L604,606 M572,605 L578,616 L580,619 L582,629 M582,629 L590,630 L597,630 L606,631 M582,629 L579,642 L577,653 L573,661 M573,661 L585,658 L594,657 L601,657 M573,661 L576,666 L580,669 L581,674 M581,674 L587,675 L593,677 L596,679 M581,674 L579,688 L574,693 L572,707 M572,707 L582,709 L589,713 L597,713 M572,707 L578,715 L583,723 L584,733 M584,733 L594,735 L600,733 L609,733 M584,733 L583,738 L583,747 L583,750 M583,750 L586,757 L595,758 L598,761 M583,750 L583,758 L582,770 L579,777 M579,777 L585,779 L591,781 L600,785 M579,777 L580,786 L576,794 L576,801 M576,801 L584,800 L594,806 L605,807 M576,801 L574,809 L576,815 L577,825 M605,8 L616,7 L625,9 L633,7 M605,8 L606,14 L610,26 L609,35 M609,35 L617,36 L624,38 L632,36 M609,35 L602,46 L602,52 L597,61 M597,61 L609,61 L616,54 L625,55 M597,61 L600,69 L602,80 L604,87 M604,87 L609,85 L617,78 L626,75 M604,87 L601,89 L602,96 L603,100 M603,100 L616,101 L622,105 L633,109 M603,100 L605,108 L606,116 L606,126 M606,126 L610,129 L622,128 L628,132 M606,126 L604,137 L606,149 L610,157 M610,157 L619,152 L625,150 L633,150 M610,157 L607,164 L611,175 L609,181 M609,181 L616,183 L621,183 L626,184 M609,181 L607,190 L603,201 L601,208 M601,208 L609,207 L620,210 L628,206 M601,208 L601,215 L604,221 L606,230 M606,230 L611,231 L617,228 L625,227 M606,230 L603,239 L604,244 L600,255 M600,255 L610,253 L621,255 L630,254 M600,255 L600,261 L603,269 L606,277 M606,277 L618,283 L627,283 L634,287 M606,277 L603,285 L601,299 L598,306 M598,306 L608,304 L621,306 L635,303 M598,306 L599,312 L600,320 L605,325 M605,325 L613,327 L622,327 L628,325 M605,325 L602,336 L602,347 L600,363 M600,363 L611,360 L617,353 L626,350 M600,363 L597,370 L601,375 L600,385 M600,385 L607,387 L618,388 L628,387 M600,385 L599,393 L602,394 L600,400 M600,400 L611,402 L621,405 L632,404 M600,400 L602,414 L600,424 L603,436 M603,436 L610,437 L615,439 L625,437 M603,436 L604,439 L608,446 L607,450 M607,450 L613,455 L618,460 L622,461 M607,450 L604,460 L604,473 L606,483 M606,483 L613,477 L622,476 L633,475 M606,483 L605,491 L604,497 L603,508 M603,508 L613,507 L621,505 L634,508 M603,508 L601,514 L601,520 L603,527 M603,527 L609,529 L621,528 L626,530 M603,527 L602,537 L602,544 L606,551 M606,551 L615,553 L624,552 L630,556 M606,551 L605,565 L605,576 L600,586 M600,586 L611,586 L624,586 L633,587 M600,586 L600,590 L601,597 L604,606 M604,606 L614,603 L617,604 L626,599 M604,606 L606,614 L603,622 L606,631 M606,631 L613,634 L623,635 L632,633 M606,631 L603,637 L605,646 L601,657 M601,657 L613,655 L619,654 L630,650 M601,657 L599,667 L598,674 L596,679 M596,679 L607,681 L615,685 L622,687 M596,679 L597,687 L598,703 L597,713 M597,713 L605,708 L614,708 L626,706 M597,713 L598,722 L604,729 L609,733 M609,733 L619,731 L624,728 L635,727 M609,733 L606,745 L604,751 L598,761 M598,761 L606,758 L620,754 L630,750 M598,761 L601,771 L600,779 L600,785 M600,785 L607,788 L620,782 L629,784 M600,785 L600,794 L602,803 L605,807 M605,807 L610,808 L617,812 L623,810 M605,807 L604,817 L607,821 L606,828 M633,7 L643,11 L650,11 L657,12 M633,7 L630,15 L633,24 L632,36 M632,36 L641,33 L647,35 L656,32 M632,36 L631,44 L627,49 L625,55 M625,55 L638,59 L647,56 L658,60 M625,55 L627,59 L623,69 L626,75 M626,75 L634,79 L646,79 L655,83 M626,75 L631,89 L632,100 L633,109 M633,109 L640,107 L645,108 L648,104 M633,109 L633,114 L629,125 L628,132 M628,132 L635,131 L643,132 L651,136 M628,132 L630,135 L633,142 L633,150 M633,150 L644,149 L650,153 L657,153 M633,150 L629,162 L629,173 L626,184 M626,184 L635,181 L651,178 L660,175 M626,184 L625,190 L630,196 L628,206 M628,206 L634,205 L640,201 L647,204 M628,206 L625,215 L626,219 L625,227 M625,227 L632,228 L637,236 L647,237 M625,227 L628,234 L627,242 L630,254 M630,254 L636,254 L646,254 L651,254 M630,254 L634,268 L633,273 L634,287 M634,287 L640,286 L648,286 L658,281 M634,287 L632,289 L637,297 L635,303 M635,303 L642,304 L646,303 L655,305 M635,303 L632,312 L632,319 L628,325 M628,325 L634,329 L647,331 L652,337 M628,325 L627,334 L630,339 L626,350 M626,350 L635,352 L642,356 L650,356 M626,350 L624,363 L626,376 L628,387 M628,387 L638,383 L642,381 L653,376 M628,387 L630,393 L632,401 L632,404 M632,404 L636,406 L644,404 L648,406 M632,404 L632,414 L630,427 L625,437 M625,437 L638,437 L648,432 L657,430 M625,437 L624,445 L625,452 L622,461 M622,461 L632,460 L639,460 L647,462 M622,461 L624,464 L627,471 L633,475 M633,475 L639,478 L645,483 L648,486 M633,475 L635,484 L633,494 L634,508 M634,508 L636,510 L640,509 L647,508 M634,508 L631,516 L631,525 L626,530 M626,530 L636,532 L640,531 L648,528 M626,530 L629,537 L627,548 L630,556 M630,556 L639,555 L647,560 L652,560 M630,556 L631,566 L631,576 L633,587 M633,587 L641,584 L647,584 L652,580 M633,587 L628,588 L631,593 L626,599 M626,599 L636,601 L641,601 L652,606 M626,599 L627,611 L627,619 L632,633 M632,633 L637,637 L645,634 L650,637 M632,633 L631,638 L632,643 L630,650 M630,650 L635,650 L641,650 L649,651 M630,650 L629,662 L622,673 L622,687 M622,687 L633,682 L642,682 L654,679 M622,687 L623,691 L627,697 L626,706 M626,706 L639,701 L646,702 L656,700 M626,706 L628,713 L634,719 L635,727 M635,727 L639,726 L651,729 L655,729 M635,727 L635,734 L630,743 L630,750 M630,750 L640,753 L647,751 L659,753 M630,750 L631,764 L629,775 L629,784 M629,784 L634,783 L643,782 L652,778 M629,784 L626,791 L624,803 L623,810 M623,810 L635,810 L643,803 L653,803 M623,810 L629,817 L632,827 L635,836 M657,12 L665,6 L671,8 L681,3 M657,12 L656,21 L658,25 L656,32 M656,32 L666,29 L670,32 L677,32 M656,32 L654,43 L655,51 L658,60 M658,60 L664,59 L673,58 L681,58 M658,60 L655,69 L656,73 L655,83 M655,83 L665,78 L668,77 L677,75 M655,83 L652,90 L653,95 L648,104 M648,104 L657,104 L663,101 L673,101 M648,104 L649,117 L652,125 L651,136 M651,136 L656,132 L668,129 L674,127 M651,136 L652,143 L652,148 L657,153 M657,153 L666,151 L672,156 L680,154 M657,153 L657,161 L658,168 L660,175 M660,175 L667,175 L678,178 L684,177 M660,175 L659,183 L651,193 L647,204 M647,204 L658,202 L666,200 L674,202 M647,204 L647,213 L649,225 L647,237 M647,237 L658,236 L663,235 L673,234 M647,237 L651,244 L652,249 L651,254 M651,254 L661,252 L672,254 L679,253 M651,254 L654,262 L657,273 L658,281 M658,281 L665,285 L676,284 L682,283 M658,281 L659,291 L655,300 L655,305 M655,305 L665,307 L669,307 L677,308 M655,305 L651,318 L655,327 L652,337 M652,337 L661,337 L668,332 L680,330 M652,337 L650,344 L650,351 L650,356 M650,356 L660,355 L663,352 L672,354 M650,356 L653,363 L651,367 L653,376 M653,376 L661,374 L676,375 L684,379 M653,376 L650,386 L650,394 L648,406 M648,406 L660,405 L672,400 L680,400 M648,406 L650,412 L653,420 L657,430 M657,430 L663,434 L672,436 L682,436 M657,430 L656,443 L647,452 L647,462 M647,462 L659,460 L667,456 L676,454 M647,462 L649,470 L647,478 L648,486 M648,486 L658,482 L669,482 L678,478 M648,486 L648,491 L646,502 L647,508 M647,508 L654,506 L666,503 L674,501 M647,508 L646,512 L649,519 L648,528 M648,528 L660,529 L671,528 L681,531 M648,528 L652,540 L653,547 L652,560 M652,560 L664,560 L675,563 L684,562 M652,560 L651,569 L652,573 L652,580 M652,580 L664,580 L675,584 L683,587 M652,580 L654,587 L650,598 L652,606 M652,606 L660,604 L671,603 L683,599 M652,606 L652,618 L648,624 L650,637 M650,637 L658,635 L666,638 L673,638 M650,637 L652,644 L650,648 L649,651 M649,651 L660,652 L669,657 L683,658 M649,651 L651,661 L652,669 L654,679 M654,679 L665,679 L669,682 L680,680 M654,679 L656,688 L658,692 L656,700 M656,700 L661,700 L670,700 L677,701 M656,700 L658,708 L659,718 L655,729 M655,729 L662,731 L669,730 L679,728 M655,729 L655,737 L658,744 L659,753 M659,753 L665,759 L671,756 L673,761 M659,753 L654,761 L656,770 L652,778 M652,778 L664,784 L671,782 L679,786 M652,778 L652,784 L652,796 L653,803 M653,803 L660,802 L668,808 L675,807 M653,803 L655,810 L654,819 L655,830 M681,3 L689,4 L693,9 L699,8 M681,3 L679,12 L681,21 L677,32 M677,32 L686,32 L694,30 L704,29 M677,32 L678,43 L680,51 L681,58 M681,58 L687,59 L691,54 L697,56 M681,58 L679,63 L675,71 L677,75 M677,75 L686,79 L696,79 L703,85 M677,75 L673,85 L671,95 L673,101 M673,101 L681,104 L692,101 L699,102 M673,101 L672,109 L675,118 L674,127 M674,127 L684,132 L693,132 L700,135 M674,127 L677,136 L679,144 L680,154 M680,154 L689,158 L693,157 L699,158 M680,154 L679,162 L685,168 L684,177 M684,177 L690,175 L693,175 L696,175 M684,177 L681,187 L675,196 L674,202 M674,202 L685,201 L694,205 L706,206 M674,202 L675,210 L671,221 L673,234 M673,234 L682,232 L691,233 L698,231 M673,234 L674,240 L675,247 L679,253 M679,253 L690,252 L700,252 L709,254 M679,253 L683,263 L684,274 L682,283 M682,283 L688,284 L697,280 L704,280 M682,283 L682,293 L680,298 L677,308 M677,308 L688,307 L694,305 L703,300 M677,308 L681,314 L677,321 L680,330 M680,330 L690,329 L697,333 L708,332 M680,330 L675,339 L674,347 L672,354 M672,354 L680,354 L690,350 L701,353 M672,354 L678,362 L679,373 L684,379 M684,379 L688,382 L692,384 L699,387 M684,379 L685,388 L683,396 L680,400 M680,400 L688,399 L696,404 L708,404 M680,400 L681,411 L682,422 L682,436 M682,436 L690,434 L695,435 L704,432 M682,436 L678,444 L680,448 L676,454 M676,454 L683,451 L689,452 L699,449 M676,454 L676,462 L677,468 L678,478 M678,478 L686,479 L697,475 L706,476 M678,478 L679,483 L674,491 L674,501 M674,501 L684,502 L691,502 L704,499 M674,501 L677,513 L678,521 L681,531 M681,531 L683,528 L693,527 L696,526 M681,531 L684,544 L686,550 L684,562 M684,562 L691,563 L697,558 L705,558 M684,562 L681,571 L684,577 L683,587 M683,587 L691,587 L699,586 L710,583 M683,587 L685,591 L681,596 L683,599 M683,599 L688,597 L698,600 L703,599 M683,599 L678,611 L677,627 L673,638 M673,638 L684,636 L696,633 L709,631 M673,638 L677,643 L680,651 L683,658 M683,658 L689,653 L699,650 L708,650 M683,658 L682,666 L682,675 L680,680 M680,680 L690,682 L696,683 L708,681 M680,680 L681,688 L680,694 L677,701 M677,701 L684,700 L692,705 L699,705 M677,701 L679,712 L678,722 L679,728 M679,728 L684,726 L690,731 L697,732 M679,728 L678,737 L672,751 L673,761 M673,761 L680,763 L691,757 L699,759 M673,761 L675,771 L675,781 L679,786 M679,786 L683,783 L693,786 L698,784 M679,786 L678,796 L675,797 L675,807 M675,807 L685,807 L694,808 L705,809 M675,807 L677,815 L676,827 L675,836 M699,8 L708,9 L719,5 L731,5 M699,8 L699,16 L703,21 L704,29 M704,29 L711,31 L723,34 L734,36 M704,29 L702,35 L697,49 L697,56 M697,56 L711,54 L719,56 L732,57 M697,56 L701,65 L704,73 L703,85 M703,85 L713,83 L718,89 L725,87 M703,85 L703,93 L699,99 L699,102 M699,102 L713,104 L724,111 L735,112 M699,102 L698,112 L701,124 L700,135 M700,135 L711,135 L717,133 L726,136 M700,135 L699,145 L698,153 L699,158 M699,158 L711,159 L719,157 L731,161 M699,158 L696,166 L700,172 L696,175 M696,175 L707,180 L720,178 L732,180 M696,175 L702,187 L704,194 L706,206 M706,206 L710,205 L718,207 L727,210 M706,206 L704,213 L699,225 L698,231 M698,231 L708,228 L716,232 L730,232 M698,231 L699,239 L702,246 L709,254 M709,254 L718,253 L724,253 L733,249 M709,254 L710,265 L708,274 L704,280 M704,280 L709,280 L715,282 L721,281 M704,280 L702,285 L703,293 L703,300 M703,300 L712,302 L713,306 L722,311 M703,300 L707,308 L707,322 L708,332 M708,332 L715,332 L718,338 L722,336 M708,332 L709,339 L702,347 L701,353 M701,353 L710,353 L717,351 L724,351 M701,353 L701,363 L698,373 L699,387 M699,387 L710,384 L719,383 L732,383 M699,387 L701,392 L708,399 L708,404 M708,404 L714,405 L721,408 L727,407 M708,404 L707,414 L705,421 L704,432 M704,432 L711,431 L719,433 L729,437 M704,432 L702,438 L698,445 L699,449 M699,449 L708,453 L718,456 L728,457 M699,449 L702,456 L704,466 L706,476 M706,476 L715,477 L719,476 L727,480 M706,476 L708,482 L703,494 L704,499 M704,499 L710,499 L721,501 L731,501 M704,499 L703,511 L698,515 L696,526 M696,526 L706,527 L718,534 L731,537 M696,526 L702,534 L701,549 L705,558 M705,558 L715,557 L720,554 L732,557 M705,558 L705,567 L706,575 L710,583 M710,583 L717,578 L719,577 L726,575 M710,583 L708,590 L707,593 L703,599 M703,599 L709,602 L716,607 L722,607 M703,599 L706,610 L708,620 L709,631 M709,631 L717,634 L726,637 L733,636 M709,631 L708,637 L711,645 L708,650 M708,650 L714,652 L716,656 L724,659 M708,650 L707,660 L706,670 L708,681 M708,681 L716,678 L725,682 L732,681 M708,681 L703,687 L699,697 L699,705 M699,705 L711,703 L722,703 L733,702 M699,705 L696,711 L698,726 L697,732 M697,732 L708,731 L715,729 L726,731 M697,732 L699,743 L698,747 L699,759 M699,759 L708,759 L722,756 L731,755 M699,759 L701,766 L696,774 L698,784 M698,784 L710,786 L714,784 L725,786 M698,784 L700,792 L700,803 L705,809 M705,809 L712,806 L716,807 L726,805 M705,809 L709,817 L710,824 L709,828 M731,5 L740,2 L746,5 L756,4 M731,5 L731,13 L730,27 L734,36 M734,36 L742,33 L748,35 L755,31 M734,36 L731,44 L731,53 L732,57 M732,57 L738,62 L741,61 L746,62 M732,57 L728,66 L730,80 L725,87 M725,87 L736,87 L742,84 L750,82 M725,87 L730,95 L734,106 L735,112 M735,112 L742,108 L752,103 L759,102 M735,112 L730,118 L726,130 L726,136 M726,136 L736,135 L740,131 L747,127 M726,136 L728,144 L729,150 L731,161 M731,161 L735,160 L741,162 L748,161 M731,161 L730,166 L734,176 L732,180 M732,180 L742,180 L744,176 L753,175 M732,180 L732,192 L727,200 L727,210 M727,210 L735,206 L741,209 L750,206 M727,210 L729,217 L729,225 L730,232 M730,232 L735,228 L744,231 L748,228 M730,232 L731,239 L734,245 L733,249 M733,249 L744,254 L747,256 L759,255 M733,249 L729,261 L727,268 L721,281 M721,281 L731,279 L741,281 L749,282 M721,281 L721,289 L724,302 L722,311 M722,311 L730,311 L737,310 L748,306 M722,311 L723,321 L723,331 L722,336 M722,336 L734,332 L745,329 L755,325 M722,336 L722,340 L725,348 L724,351 M724,351 L737,353 L744,352 L754,353 M724,351 L728,363 L732,374 L732,383 M732,383 L739,382 L745,385 L756,383 M732,383 L730,391 L726,399 L727,407 M727,407 L740,406 L750,409 L759,408 M727,407 L728,418 L727,428 L729,437 M729,437 L736,437 L742,429 L749,427 M729,437 L731,444 L727,451 L728,457 M728,457 L735,456 L749,459 L756,460 M728,457 L730,463 L728,470 L727,480 M727,480 L736,480 L740,479 L747,480 M727,480 L727,485 L731,493 L731,501 M731,501 L735,502 L743,507 L750,506 M731,501 L730,512 L734,526 L731,537 M731,537 L740,535 L747,531 L758,532 M731,537 L731,544 L729,550 L732,557 M732,557 L738,558 L747,560 L756,560 M732,557 L731,562 L727,567 L726,575 M726,575 L732,579 L744,578 L750,583 M726,575 L728,588 L723,596 L722,607 M722,607 L733,605 L741,607 L751,606 M722,607 L726,616 L730,624 L733,636 M733,636 L740,634 L745,634 L753,633 M733,636 L731,644 L727,653 L724,659 M724,659 L731,663 L738,657 L748,661 M724,659 L727,668 L729,673 L732,681 M732,681 L737,678 L745,681 L748,678 M732,681 L731,688 L733,692 L733,702 M733,702 L743,706 L753,712 L758,713 M733,702 L733,710 L726,723 L726,731 M726,731 L732,734 L741,737 L751,737 M726,731 L725,737 L732,747 L731,755 M731,755 L736,760 L743,758 L747,762 M731,755 L730,765 L727,775 L725,786 M725,786 L731,781 L740,777 L749,774 M725,786 L728,792 L726,800 L726,805 M726,805 L738,802 L749,805 L757,801 M726,805 L728,812 L727,823 L724,831 M756,4 L759,3 L768,4 L773,4 M756,4 L758,15 L757,25 L755,31 M755,31 L760,33 L764,32 L772,31 M755,31 L750,41 L749,49 L746,62 M746,62 L757,63 L764,59 L776,59 M746,62 L749,69 L746,74 L750,82 M750,82 L762,82 L767,85 L778,88 M750,82 L755,90 L756,96 L759,102 M759,102 L764,99 L774,102 L783,101 M759,102 L753,107 L753,117 L747,127 M747,127 L757,128 L769,132 L784,137 M747,127 L748,139 L746,150 L748,161 M748,161 L757,160 L766,159 L779,156 M748,161 L747,168 L750,170 L753,175 M753,175 L758,176 L765,178 L773,178 M753,175 L754,187 L754,195 L750,206 M750,206 L758,204 L765,203 L774,202 M750,206 L752,211 L750,220 L748,228 M748,228 L759,227 L771,228 L780,229 M748,228 L751,237 L752,244 L759,255 M759,255 L769,253 L773,257 L782,257 M759,255 L753,267 L751,276 L749,282 M749,282 L760,281 L772,275 L783,275 M749,282 L749,292 L750,300 L748,306 M748,306 L760,304 L771,306 L783,306 M748,306 L747,314 L750,319 L755,325 M755,325 L762,324 L774,327 L780,327 M755,325 L756,335 L755,346 L754,353 M754,353 L760,353 L770,355 L781,355 M754,353 L754,366 L754,371 L756,383 M756,383 L767,384 L772,382 L781,382 M756,383 L759,389 L759,398 L759,408 M759,408 L765,404 L771,407 L773,403 M759,408 L752,412 L754,422 L749,427 M749,427 L758,428 L771,423 L782,424 M749,427 L752,437 L751,451 L756,460 M756,460 L765,458 L771,459 L780,457 M756,460 L752,465 L750,476 L747,480 M747,480 L756,478 L770,482 L781,479 M747,480 L751,485 L750,495 L750,506 M750,506 L757,503 L768,509 L778,506 M750,506 L756,514 L758,524 L758,532 M758,532 L763,532 L772,530 L781,525 M758,532 L755,544 L757,551 L756,560 M756,560 L762,557 L772,555 L778,553 M756,560 L757,568 L754,573 L750,583 M750,583 L761,582 L772,578 L779,578 M750,583 L750,592 L749,597 L751,606 M751,606 L761,605 L766,600 L774,602 M751,606 L754,614 L751,623 L753,633 M753,633 L761,634 L775,633 L784,629 M753,633 L753,640 L750,655 L748,661 M748,661 L757,659 L770,658 L783,659 M748,661 L747,667 L746,675 L748,678 M748,678 L757,678 L764,681 L775,682 M748,678 L751,690 L752,700 L758,713 M758,713 L762,710 L767,714 L771,712 M758,713 L756,719 L754,727 L751,737 M751,737 L759,730 L770,728 L780,726 M751,737 L748,743 L750,752 L747,762 M747,762 L758,762 L767,759 L778,756 M747,762 L746,768 L749,768 L749,774 M749,774 L761,774 L770,775 L780,778 M749,774 L751,784 L755,791 L757,801 M757,801 L763,803 L777,806 L784,808 M757,801 L757,810 L757,819 L757,824 M773,4 L787,5 L798,1 L808,3 M773,4 L771,14 L773,24 L772,31 M772,31 L785,31 L793,35 L806,36 M772,31 L771,40 L773,49 L776,59 M776,59 L788,57 L798,50 L808,50 M776,59 L779,70 L780,79 L778,88 M778,88 L789,86 L799,82 L808,77 M778,88 L777,89 L782,99 L783,101 M783,101 L790,102 L799,108 L807,109 M783,101 L785,111 L782,123 L784,137 M784,137 L792,135 L799,136 L803,137 M784,137 L780,143 L778,152 L779,156 M779,156 L785,158 L797,158 L807,163 M779,156 L775,167 L777,171 L773,178 M773,178 L788,182 L800,182 L809,182 M773,178 L774,186 L775,195 L774,202 M774,202 L788,202 L798,208 L806,208 M774,202 L776,213 L776,219 L780,229 M780,229 L787,232 L793,232 L802,231 M780,229 L781,241 L780,249 L782,257 M782,257 L791,258 L797,256 L803,252 M782,257 L783,263 L780,269 L783,275 M783,275 L791,281 L791,281 L800,286 M783,275 L781,288 L781,297 L783,306 M783,306 L789,306 L802,306 L808,309 M783,306 L782,312 L782,318 L780,327 M780,327 L790,327 L800,329 L806,331 M780,327 L781,334 L783,346 L781,355 M781,355 L791,357 L794,359 L804,358 M781,355 L780,362 L783,374 L781,382 M781,382 L785,379 L792,378 L796,380 M781,382 L777,386 L774,398 L773,403 M773,403 L784,406 L796,404 L810,402 M773,403 L777,411 L779,415 L782,424 M782,424 L791,427 L796,423 L803,425 M782,424 L778,434 L783,445 L780,457 M780,457 L785,458 L790,461 L800,461 M780,457 L782,463 L778,474 L781,479 M781,479 L788,482 L790,486 L796,485 M781,479 L781,485 L782,498 L778,506 M778,506 L786,510 L798,510 L807,511 M778,506 L776,510 L782,516 L781,525 M781,525 L786,526 L794,531 L800,537 M781,525 L782,534 L781,546 L778,553 M778,553 L789,552 L793,556 L801,555 M778,553 L778,564 L778,570 L779,578 M779,578 L788,580 L798,580 L809,582 M779,578 L779,588 L774,592 L774,602 M774,602 L783,603 L796,602 L806,601 M774,602 L779,610 L780,617 L784,629 M784,629 L787,629 L790,630 L796,628 M784,629 L782,639 L784,648 L783,659 M783,659 L789,659 L790,658 L797,661 M783,659 L781,669 L779,676 L775,682 M775,682 L784,685 L793,686 L799,687 M775,682 L774,690 L771,699 L771,712 M771,712 L780,708 L793,706 L805,702 M771,712 L776,715 L779,723 L780,726 M780,726 L787,727 L795,725 L806,728 M780,726 L778,734 L776,743 L778,756 M778,756 L788,756 L797,749 L803,750 M778,756 L776,765 L779,770 L780,778 M780,778 L791,781 L798,781 L808,785 M780,778 L779,789 L785,795 L784,808 M784,808 L789,808 L796,808 L804,809 M784,808 L780,816 L774,826 L772,835 M808,3 L816,3 L820,9 L826,9 M808,3 L808,13 L809,27 L806,36 M806,36 L817,31 L821,29 L829,26 M806,36 L809,41 L808,45 L808,50 M808,50 L816,51 L817,52 L824,56 M808,50 L807,57 L811,69 L808,77 M808,77 L814,76 L817,74 L821,75 M808,77 L810,87 L807,100 L807,109 M807,109 L816,109 L820,103 L827,101 M807,109 L808,118 L802,127 L803,137 M803,137 L812,132 L825,129 L833,126 M803,137 L805,144 L803,156 L807,163 M807,163 L817,163 L824,159 L831,160 M807,163 L808,171 L810,176 L809,182 M809,182 L816,180 L817,184 L825,182 M809,182 L805,189 L807,201 L806,208 M806,208 L817,210 L828,207 L835,208 M806,208 L803,214 L802,221 L802,231 M802,231 L813,234 L818,233 L826,238 M802,231 L805,236 L804,243 L803,252 M803,252 L809,253 L818,258 L825,262 M803,252 L802,265 L799,272 L800,286 M800,286 L808,283 L816,281 L825,280 M800,286 L800,291 L806,302 L808,309 M808,309 L815,309 L820,307 L825,308 M808,309 L810,316 L806,322 L806,331 M806,331 L814,335 L824,335 L833,334 M806,331 L803,341 L803,348 L804,358 M804,358 L809,359 L818,361 L824,363 M804,358 L804,364 L801,373 L796,380 M796,380 L810,380 L818,383 L831,381 M796,380 L801,389 L805,396 L810,402 M810,402 L820,403 L828,400 L833,401 M810,402 L806,412 L807,420 L803,425 M803,425 L811,428 L823,430 L829,435 M803,425 L800,435 L799,448 L800,461 M800,461 L810,460 L818,458 L832,458 M800,461 L799,466 L797,479 L796,485 M796,485 L806,486 L816,482 L822,481 M796,485 L797,491 L804,505 L807,511 M807,511 L812,508 L820,509 L825,508 M807,511 L804,518 L802,529 L800,537 M800,537 L810,537 L815,535 L827,530 M800,537 L799,543 L800,551 L801,555 M801,555 L810,553 L819,554 L829,557 M801,555 L801,561 L806,573 L809,582 M809,582 L814,578 L828,579 L833,578 M809,582 L811,588 L810,595 L806,601 M806,601 L811,598 L816,603 L825,602 M806,601 L803,608 L797,619 L796,628 M796,628 L807,629 L817,633 L823,636 M796,628 L795,637 L798,652 L797,661 M797,661 L808,656 L820,652 L834,651 M797,661 L797,669 L797,679 L799,687 M799,687 L807,686 L817,685 L826,687 M799,687 L799,690 L801,698 L805,702 M805,702 L812,705 L826,710 L833,713 M805,702 L804,710 L805,718 L806,728 M806,728 L813,726 L823,727 L835,728 M806,728 L804,733 L805,741 L803,750 M803,750 L810,752 L816,753 L822,752 M803,750 L806,761 L805,771 L808,785 M808,785 L816,781 L820,775 L828,774 M808,785 L805,795 L805,803 L804,809 M804,809 L813,806 L816,809 L825,806 M804,809 L801,815 L805,820 L801,826" fill="none" stroke="#606466" stroke-width="1"/>
<path d="M2.0,703.8 L5.8,704.9 L11.2,703.0 L13.7,700.2 L15.0,698.6 L20.0,698.7 L23.4,700.1 L25.3,700.6 L29.5,701.2 L28.3,706.2 L28.7,707.6 L32.8,707.8 L37.0,707.6 L39.4,705.6 L43.2,706.9 L46.9,706.4 L45.4,709.8 L46.7,714.2 L51.6,716.7 L51.2,720.7 L52.2,724.4 L56.0,725.2 L61.2,725.7 L63.4,726.1 L67.4,727.7 L70.1,727.9 L71.8,731.6 L74.7,732.5 L75.0,735.7 L78.2,742.2 L80.1,742.2 L83.2,745.3 L85.8,745.2 L88.6,745.9 L92.8,747.0 L95.5,748.1 L97.7,748.8 L102.1,751.5 L106.0,751.2 L107.4,751.4 L110.3,752.4 L114.5,754.0 L117.9,753.1 L121.0,754.1 L124.5,756.2 L128.1,755.5 L130.7,757.5 L134.7,757.1 L137.1,756.7 L141.3,756.3 L144.2,758.8 L147.3,756.9 L146.6,755.4 L147.7,751.3 L149.6,748.7 L149.5,745.4 L151.4,741.5 L150.6,738.6 L152.1,735.2 L152.6,732.1 L153.1,727.4 L152.0,724.1 L150.3,721.2 L151.9,717.9 L149.9,716.2 L151.2,712.6 L152.1,710.8 L154.0,706.8 L157.3,709.6 L161.0,712.9 L164.9,714.8 L167.5,715.7 L169.6,716.9 L172.4,721.1 L176.1,723.0 L176.0,724.7 L179.8,726.8 L180.0,729.7 L182.0,733.8 L185.5,737.2 L185.7,739.5 L189.2,741.2 L189.2,746.2 L192.7,747.0 L194.5,749.4 L197.7,749.8 L200.9,750.0 L205.0,752.1 L209.2,751.5 L211.3,752.3 L215.1,753.2 L217.9,755.8 L222.0,755.7 L225.3,755.3 L228.4,757.4 L230.0,757.4 L233.6,756.2 L237.4,758.0 L239.2,756.8 L238.3,753.6 L236.7,752.3 L233.9,747.8 L232.0,744.9 L230.5,744.4 L227.9,741.1 L225.5,739.9 L223.1,736.6 L218.9,735.0 L217.6,731.9 L214.2,728.7 L212.3,724.6 L210.6,722.7 L209.5,720.9 L209.1,717.8 L205.7,714.8 L202.7,711.4 L204.1,709.1 L208.2,708.1 L210.4,704.9 L211.8,701.8 L213.4,701.2 L216.2,697.3 L218.1,695.0 L219.3,692.3 L221.3,691.0 L224.2,687.0 L224.9,684.3 L227.1,680.8 L227.0,677.2 L227.9,674.9 L223.8,672.7 L222.0,671.9 L217.5,672.9 L213.6,675.6 L209.0,677.7 L205.3,679.1 L203.5,679.8 L200.0,684.3 L199.9,687.5 L198.8,690.4 L195.3,693.3 L194.6,695.0 L192.0,693.4 L189.0,693.7 L185.1,690.7 L179.2,688.0 L174.8,683.9 L179.1,679.3 L180.8,678.6 L185.0,679.0 L187.2,676.5 L188.6,674.4 L191.2,673.5 L193.8,671.2 L195.9,670.1 L197.8,666.2 L202.7,666.1 L206.5,662.4 L210.1,660.9 L212.2,658.4 L215.3,655.9 L218.5,652.6 L220.9,650.6 L223.8,649.2 L227.0,648.5 L231.2,648.4 L233.1,648.1 L235.7,646.6 L240.4,643.8 L242.8,645.3 L246.9,646.5 L248.9,648.8 L250.5,651.0 L254.5,651.4 L256.6,651.5 L259.6,652.5 L263.5,652.5 L268.1,652.1 L270.7,650.6 L274.8,651.6 L277.4,650.3 L280.1,650.5 L285.0,650.1 L288.9,647.6 L293.4,648.5 L295.0,651.5 L300.4,651.1 L302.4,651.1 L305.7,651.5 L307.7,648.1 L306.9,645.2 L308.5,640.4 L308.2,637.2 L308.3,635.2 L306.2,631.6 L308.0,626.5 L310.6,623.0 L312.6,622.8 L316.4,622.8 L319.8,625.6 L320.5,629.6 L319.7,631.7 L320.4,634.6 L319.7,637.7 L322.0,640.8 L322.9,645.1 L326.5,647.2 L327.1,648.3 L329.6,652.5 L330.8,656.3 L334.8,658.8 L338.4,658.6 L340.1,656.3 L344.5,656.7 L348.0,655.1 L351.0,655.5 L354.7,654.4 L357.7,653.9 L361.9,651.4 L366.1,652.2 L370.1,651.5 L373.0,649.3 L373.0,647.0 L374.4,643.3 L374.7,641.1 L377.2,638.6 L377.3,634.5 L379.8,631.6 L385.9,635.0 L388.3,630.4 L389.5,634.5 L390.4,637.0 L392.4,640.5 L394.3,642.7 L397.2,645.4 L400.8,647.1 L403.9,645.8 L408.2,646.3 L412.9,646.5 L416.4,646.9 L418.0,647.9 L421.5,649.3 L425.5,647.6 L427.9,648.1 L431.5,649.6 L434.2,650.5 L437.6,651.4 L441.3,650.6 L444.8,650.6 L446.5,651.6 L451.3,653.9 L454.1,656.1 L455.4,656.9 L458.3,657.5 L463.4,658.3 L466.9,660.8 L469.2,661.3 L471.6,662.4 L475.1,665.4 L476.9,667.3 L479.2,668.6 L483.2,670.2 L485.4,672.3 L488.9,674.7 L491.5,678.6 L494.9,678.2 L497.6,678.8 L501.6,681.5 L501.5,682.5 L503.8,685.4 L507.9,688.9 L508.6,691.3 L510.8,694.9 L513.4,696.4 L516.3,700.4 L516.9,703.5 L516.3,705.5 L516.3,710.6 L520.7,709.9 L524.7,709.3 L526.8,708.6 L530.4,707.9 L533.2,709.1 L538.6,706.9 L541.4,703.6 L544.6,702.4 L547.9,700.4 L549.7,702.2 L552.6,702.6 L556.5,702.3 L559.7,700.5 L560.8,698.5 L564.0,697.2 L567.5,695.6 L570.2,693.7 L571.6,691.1 L574.0,690.6 L575.8,687.8 L578.7,684.7 L583.2,683.1 L584.1,679.2 L587.6,675.8 L589.7,674.9 L595.3,673.9 L597.8,673.9 L602.5,672.9 L605.8,674.6 L609.9,673.8 L611.9,676.2 L614.6,678.2 L617.2,679.9 L621.6,681.4 L624.7,682.3 L627.6,684.4 L630.5,686.5 L632.9,688.7 L636.1,692.8 L637.7,694.9 L640.1,697.5 L641.9,699.5 L642.0,702.0 L644.8,705.3 L648.3,707.5 L650.2,708.8 L653.1,710.3 L655.9,713.3 L655.7,717.3 L656.6,721.5 L656.4,722.8 L660.3,725.9 L662.2,730.5 L665.8,731.5 L668.0,734.0 L670.3,736.4 L674.6,740.5 L675.7,741.7 L678.7,746.6 L678.2,749.7 L680.9,753.1 L682.3,754.8 L685.4,756.3 L690.2,758.2 L693.5,759.6 L697.2,760.8 L701.5,762.5 L702.3,764.3 L702.6,767.1 L703.3,770.4 L705.0,774.8 L706.3,776.8 L709.6,778.8 L712.2,781.7 L713.3,785.8 L713.8,790.8 L714.0,812.0 L2.0,812.0Z" fill="#014466" stroke="#000" stroke-width="1.3"/>
<path d="M807.9,554.1 L803.1,555.7 L802.8,558.0 L802.5,564.6 L801.9,564.2 L803.0,565.0 L798.8,571.4 L799.1,570.4 L798.3,575.8 L802.2,576.6 L800.8,579.4 L798.2,581.3 L798.7,583.5 L800.9,585.2 L798.8,591.0 L796.9,594.7 L799.8,595.7 L797.6,596.0 L800.7,602.4 L796.4,604.1 L797.2,602.9 L799.0,605.5 L800.0,611.7 L797.1,610.7 L798.1,616.2 L795.5,618.5 L795.8,619.4 L795.8,620.4 L797.5,624.0 L799.2,629.5 L798.1,630.1 L798.0,631.7 L797.3,635.2 L797.4,637.2 L799.8,642.4 L799.4,644.3 L797.5,642.9 L797.4,647.5 L800.3,651.2 L802.5,653.8 L800.8,652.6 L803.1,656.3 L806.4,661.6 L806.0,662.0 L812.0,662.0 L812.0,555.0Z" fill="#014466" stroke="#000" stroke-width="2.2"/>
<path d="M15.5,718.0 L25.0,716.7 L32.0,720.0 L39.7,722.0 L36.0,728.0 L28.0,726.0 L22.0,729.7 L17.0,724.0Z" fill="#5c4f4b" stroke="#000" stroke-width="1"/>
<path d="M258,661 L300,664 M336,662 L400,648" fill="none" stroke="#000" stroke-width="1.3"/>
<path d="M505.8,694.8 L508,703 L511,711.7 L521.6,711.7 L534.3,719 L549,710.6 L559.6,704.3 L569,699" fill="none" stroke="#000" stroke-width="2.6"/>
<path d="M505.8,694.8 L508,703 L511,711.7 L521.6,711.7 L534.3,719 L549,710.6 L559.6,704.3 L569,699" fill="none" stroke="#5c4f4b" stroke-width="0.8"/>
<path d="M215,686h3v3h-3z M216,686h2v2h-2z M217,685h2v2h-2z M218,685h2v2h-2z M219,684h1v1h-1z M220,683h1v1h-1z M221,682h3v3h-3z M220,681h3v3h-3z M218,680h2v2h-2z M217,679h2v2h-2z M217,678h2v2h-2z M221,680h1v1h-1z M199,704h2v2h-2z M200,705h2v2h-2z M202,705h1v1h-1z M203,705h1v1h-1z M203,707h3v3h-3z M204,708h1v1h-1z M205,709h2v2h-2z M205,710h2v2h-2z M206,711h2v2h-2z M206,712h2v2h-2z M207,713h1v1h-1z M208,714h2v2h-2z M211,690h1v1h-1z M213,691h3v3h-3z M214,690h2v2h-2z M215,691h1v1h-1z M216,691h2v2h-2z M218,691h2v2h-2z M219,691h2v2h-2z M220,692h3v3h-3z M221,693h3v3h-3z M221,694h1v1h-1z M222,695h2v2h-2z M222,697h1v1h-1z M222,698h2v2h-2z M223,699h2v2h-2z M223,701h3v3h-3z M223,702h1v1h-1z M222,703h1v1h-1z M221,704h2v2h-2z M220,705h1v1h-1z M212,689h2v2h-2z M213,688h3v3h-3z M214,688h3v3h-3z M216,688h1v1h-1z M217,687h1v1h-1z M218,687h2v2h-2z M219,687h1v1h-1z M221,686h1v1h-1z M222,686h1v1h-1z M223,686h1v1h-1z M193,711h1v1h-1z M194,711h1v1h-1z M196,710h2v2h-2z M197,710h2v2h-2z M198,710h2v2h-2z M199,709h3v3h-3z M200,708h1v1h-1z M202,709h3v3h-3z M203,709h1v1h-1z M204,710h2v2h-2z M205,711h1v1h-1z M206,712h1v1h-1z M207,713h3v3h-3z M206,714h2v2h-2z M206,715h3v3h-3z M206,716h3v3h-3z M201,708h3v3h-3z M202,706h2v2h-2z M202,705h1v1h-1z M203,704h1v1h-1z M204,703h3v3h-3z M221,678h2v2h-2z M222,679h1v1h-1z M224,679h1v1h-1z M225,679h1v1h-1z M223,677h1v1h-1z M224,677h2v2h-2z M225,676h1v1h-1z M226,676h1v1h-1z M227,675h2v2h-2z M228,674h1v1h-1z M202,702h3v3h-3z M203,702h2v2h-2z M204,702h2v2h-2z M205,702h3v3h-3z M206,702h2v2h-2z M208,701h1v1h-1z M209,700h3v3h-3z M210,699h2v2h-2z M189,716h2v2h-2z M191,716h3v3h-3z M192,716h1v1h-1z M193,717h2v2h-2z M194,717h2v2h-2z M195,716h1v1h-1z M195,715h2v2h-2z M195,714h1v1h-1z M196,712h3v3h-3z M196,715h1v1h-1z M197,714h2v2h-2z M197,713h1v1h-1z M196,711h1v1h-1z M194,718h2v2h-2z M195,719h2v2h-2z M196,719h2v2h-2z M197,721h2v2h-2z M196,722h2v2h-2z M196,723h3v3h-3z M195,724h2v2h-2z M194,725h1v1h-1z M206,696h1v1h-1z M207,697h1v1h-1z M208,697h1v1h-1z M210,698h2v2h-2z M211,698h3v3h-3z M212,699h2v2h-2z M213,700h2v2h-2z M214,700h1v1h-1z M215,701h2v2h-2z M216,701h2v2h-2z M218,701h3v3h-3z M219,700h3v3h-3z M219,699h1v1h-1z M219,698h1v1h-1z M219,696h1v1h-1z M220,695h1v1h-1z M220,694h1v1h-1z M221,693h1v1h-1z M220,700h1v1h-1z M208,694h2v2h-2z M209,694h2v2h-2z M211,693h2v2h-2z M212,693h3v3h-3z M212,692h1v1h-1z M219,681h3v3h-3z M220,680h2v2h-2z M220,679h2v2h-2z M221,677h2v2h-2z M222,676h2v2h-2z M223,675h1v1h-1z M224,675h1v1h-1z M225,674h3v3h-3z M226,673h1v1h-1z M227,673h2v2h-2z M190,715h3v3h-3z M191,714h1v1h-1z M192,714h1v1h-1z M193,713h1v1h-1z M194,712h2v2h-2z M195,711h2v2h-2z M194,710h1v1h-1z M194,708h2v2h-2z M194,707h1v1h-1z M195,710h1v1h-1z M202,701h1v1h-1z M203,702h2v2h-2z M204,702h1v1h-1z M206,702h2v2h-2z M207,701h1v1h-1z M208,701h2v2h-2z M209,701h2v2h-2z M210,700h2v2h-2z M212,699h2v2h-2z M213,699h2v2h-2z M199,703h1v1h-1z M200,703h2v2h-2z M201,702h1v1h-1z M203,702h1v1h-1z M204,702h2v2h-2z M205,702h1v1h-1z M195,709h1v1h-1z M196,709h1v1h-1z M197,709h2v2h-2z M199,709h3v3h-3z M200,708h1v1h-1z M211,691h2v2h-2z M212,691h2v2h-2z M213,692h1v1h-1z M215,692h2v2h-2z M216,692h3v3h-3z M217,692h2v2h-2z M218,692h2v2h-2z M220,692h1v1h-1z M221,692h2v2h-2z M222,691h2v2h-2z M223,691h1v1h-1z M224,690h2v2h-2z M225,689h1v1h-1z M209,692h1v1h-1z M210,691h1v1h-1z M210,690h1v1h-1z M210,689h2v2h-2z M210,688h1v1h-1z M209,692h1v1h-1z M210,691h2v2h-2z M211,690h2v2h-2z M213,690h2v2h-2z M214,690h2v2h-2z M215,690h1v1h-1z M216,692h1v1h-1z M216,693h1v1h-1z M217,694h1v1h-1z M216,690h2v2h-2z M188,717h1v1h-1z M189,717h2v2h-2z M191,718h2v2h-2z M192,718h2v2h-2z M193,719h2v2h-2z M194,719h2v2h-2z M195,720h1v1h-1z M196,721h1v1h-1z M197,722h2v2h-2z M198,723h3v3h-3z M199,724h2v2h-2z M200,723h2v2h-2z M201,722h1v1h-1z M202,722h1v1h-1z M203,721h2v2h-2z M205,721h2v2h-2z M206,722h1v1h-1z M200,724h1v1h-1z M212,689h1v1h-1z M213,688h1v1h-1z M215,688h1v1h-1z M216,688h3v3h-3z M217,687h3v3h-3z M218,686h1v1h-1z M219,685h1v1h-1z M220,685h1v1h-1z M221,684h2v2h-2z M222,683h1v1h-1z M222,682h1v1h-1z M223,681h2v2h-2z M199,704h2v2h-2z M201,705h3v3h-3z M201,706h2v2h-2z M202,707h3v3h-3z M202,708h1v1h-1z M202,705h2v2h-2z M203,705h1v1h-1z M204,705h1v1h-1z M205,704h1v1h-1z M206,703h3v3h-3z M198,706h3v3h-3z M199,706h2v2h-2z M200,706h1v1h-1z M202,706h1v1h-1z M203,707h1v1h-1z M204,707h2v2h-2z M205,706h2v2h-2z M206,705h2v2h-2z M206,704h2v2h-2z M207,702h2v2h-2z M205,707h2v2h-2z M207,707h2v2h-2z M208,695h1v1h-1z M209,696h2v2h-2z M208,696h2v2h-2z M207,697h3v3h-3z M205,697h3v3h-3z M204,698h1v1h-1z M209,697h2v2h-2z M209,698h2v2h-2z M208,699h1v1h-1z M208,700h2v2h-2z M208,702h1v1h-1z M208,703h2v2h-2z M209,704h1v1h-1z M210,704h3v3h-3z M211,705h2v2h-2z M212,705h3v3h-3z M214,705h1v1h-1z M200,703h3v3h-3z M201,704h1v1h-1z M203,704h1v1h-1z M204,704h2v2h-2z M205,703h2v2h-2z M206,703h3v3h-3z M208,702h3v3h-3z M209,703h3v3h-3z M209,704h3v3h-3z M211,705h1v1h-1z M212,705h2v2h-2z M213,705h2v2h-2z M213,706h2v2h-2z M213,708h1v1h-1z M212,708h2v2h-2z M214,706h1v1h-1z M209,702h2v2h-2z M210,701h2v2h-2z M210,700h1v1h-1z M211,699h1v1h-1z M212,699h1v1h-1z M214,698h1v1h-1z M188,717h2v2h-2z M189,718h1v1h-1z M190,719h1v1h-1z M191,719h1v1h-1z M192,720h2v2h-2z M193,721h1v1h-1z M194,722h2v2h-2z M195,723h1v1h-1z M196,723h1v1h-1z M197,723h1v1h-1z M199,723h1v1h-1z M200,722h3v3h-3z M216,684h1v1h-1z M217,685h2v2h-2z M218,686h2v2h-2z M217,688h2v2h-2z M216,688h3v3h-3z M215,689h2v2h-2z M215,690h3v3h-3z M214,692h1v1h-1z M214,693h1v1h-1z M219,688h1v1h-1z M219,688h1v1h-1z M220,690h1v1h-1z M221,691h2v2h-2z M222,692h1v1h-1z M222,693h2v2h-2z M222,694h2v2h-2z M219,689h2v2h-2z M218,690h2v2h-2z M218,692h2v2h-2z M217,693h1v1h-1z M217,694h2v2h-2z M216,695h2v2h-2z M216,696h2v2h-2z M216,698h1v1h-1z M216,699h2v2h-2z M221,678h2v2h-2z M222,679h2v2h-2z M223,680h2v2h-2z M224,681h2v2h-2z M225,682h2v2h-2z M223,678h2v2h-2z M224,678h1v1h-1z M225,678h1v1h-1z M226,676h1v1h-1z M225,675h1v1h-1z M225,674h2v2h-2z M225,672h1v1h-1z M226,677h1v1h-1z M228,677h1v1h-1z M229,677h2v2h-2z M230,678h1v1h-1z M231,678h1v1h-1z M210,692h1v1h-1z M211,692h2v2h-2z M212,692h2v2h-2z M213,692h1v1h-1z M215,692h2v2h-2z M216,692h2v2h-2z M217,692h1v1h-1z M218,692h2v2h-2z M220,692h2v2h-2z M221,691h1v1h-1z M221,690h1v1h-1z M220,688h1v1h-1z M220,687h3v3h-3z M219,686h2v2h-2z M219,685h1v1h-1z M218,684h3v3h-3z M222,690h3v3h-3z M223,690h3v3h-3z M224,689h1v1h-1z M179,749h1v1h-1z M179,748h1v1h-1z M179,746h1v1h-1z M179,745h2v2h-2z M179,744h1v1h-1z M180,742h1v1h-1z M160,722h1v1h-1z M159,721h1v1h-1z M158,721h1v1h-1z M157,720h1v1h-1z M156,719h2v2h-2z M155,718h1v1h-1z M169,713h3v3h-3z M169,712h2v2h-2z M169,711h3v3h-3z M169,709h3v3h-3z M169,708h2v2h-2z M169,707h3v3h-3z M168,706h1v1h-1z M168,705h3v3h-3z M167,703h2v2h-2z M175,749h3v3h-3z M175,751h2v2h-2z M175,752h2v2h-2z M174,753h3v3h-3z M164,733h3v3h-3z M162,732h2v2h-2z M162,731h2v2h-2z M161,730h1v1h-1z M159,729h2v2h-2z M153,734h1v1h-1z M153,736h2v2h-2z M155,736h2v2h-2z M156,737h2v2h-2z M157,738h1v1h-1z M158,738h2v2h-2z M159,738h1v1h-1z M182,753h2v2h-2z M181,752h1v1h-1z M181,750h1v1h-1z M180,749h1v1h-1z M179,748h1v1h-1z M171,757h2v2h-2z M172,758h2v2h-2z M173,759h2v2h-2z M174,760h2v2h-2z M175,761h2v2h-2z M176,761h1v1h-1z M177,762h2v2h-2z M178,763h3v3h-3z M179,763h1v1h-1z M160,755h1v1h-1z M162,755h3v3h-3z M163,755h1v1h-1z M164,756h1v1h-1z M165,756h3v3h-3z M166,757h3v3h-3z M159,749h1v1h-1z M159,750h1v1h-1z M159,751h3v3h-3z M160,753h2v2h-2z M160,754h1v1h-1z M160,749h1v1h-1z M161,750h2v2h-2z M162,750h3v3h-3z M164,750h1v1h-1z M164,749h2v2h-2z M165,748h3v3h-3z M165,746h1v1h-1z M165,745h2v2h-2z M165,750h2v2h-2z M166,749h3v3h-3z M167,748h3v3h-3z M191,720h2v2h-2z M191,722h2v2h-2z M191,723h3v3h-3z M192,724h1v1h-1z M192,725h2v2h-2z M193,726h1v1h-1z M190,723h2v2h-2z M189,724h1v1h-1z M189,725h2v2h-2z M189,726h3v3h-3z M189,727h2v2h-2z M189,729h1v1h-1z M188,730h2v2h-2z M167,743h3v3h-3z M165,742h2v2h-2z M164,742h2v2h-2z M163,742h1v1h-1z M161,743h2v2h-2z M160,743h2v2h-2z M179,756h2v2h-2z M180,757h3v3h-3z M182,756h2v2h-2z M183,756h2v2h-2z M184,756h2v2h-2z M185,755h2v2h-2z M156,749h1v1h-1z M156,748h2v2h-2z M156,747h2v2h-2z M156,745h1v1h-1z M180,753h1v1h-1z M181,755h3v3h-3z M181,756h3v3h-3z M182,757h3v3h-3z M182,758h2v2h-2z M182,759h2v2h-2z M183,761h3v3h-3z M183,762h1v1h-1z M184,763h3v3h-3z M192,725h1v1h-1z M193,725h1v1h-1z M195,726h1v1h-1z M196,725h2v2h-2z M197,726h1v1h-1z M198,727h1v1h-1z M199,728h2v2h-2z M200,729h1v1h-1z M197,725h1v1h-1z M198,725h3v3h-3z M199,724h2v2h-2z M200,723h2v2h-2z M201,722h1v1h-1z M187,731h2v2h-2z M186,732h1v1h-1z M185,732h2v2h-2z M184,732h3v3h-3z M182,732h2v2h-2z M185,733h2v2h-2z M185,734h1v1h-1z M185,735h1v1h-1z M185,736h2v2h-2z M184,738h2v2h-2z M166,728h2v2h-2z M168,728h1v1h-1z M169,728h3v3h-3z M170,727h1v1h-1z M171,726h2v2h-2z M172,726h1v1h-1z M174,727h3v3h-3z M174,728h3v3h-3z M174,729h1v1h-1z M174,730h3v3h-3z M154,744h1v1h-1z M153,744h1v1h-1z M152,743h1v1h-1z M150,743h1v1h-1z M149,743h3v3h-3z M164,753h1v1h-1z M165,752h1v1h-1z M166,751h3v3h-3z M167,750h1v1h-1z M168,750h2v2h-2z M170,749h1v1h-1z M171,749h2v2h-2z M172,748h3v3h-3z M172,726h2v2h-2z M171,727h2v2h-2z M171,728h3v3h-3z M170,729h1v1h-1z M169,730h2v2h-2z M170,732h2v2h-2z M170,733h2v2h-2z M171,734h3v3h-3z M183,744h1v1h-1z M184,742h2v2h-2z M184,741h2v2h-2z M184,740h3v3h-3z M185,739h1v1h-1z M186,738h3v3h-3z M187,737h1v1h-1z M188,736h1v1h-1z M189,736h3v3h-3z M191,736h2v2h-2z M192,736h3v3h-3z M193,736h1v1h-1z M194,735h3v3h-3z M232,742h2v2h-2z M230,742h3v3h-3z M230,743h3v3h-3z M229,744h1v1h-1z M228,745h2v2h-2z M234,750h1v1h-1z M234,751h1v1h-1z M235,752h3v3h-3z M235,754h2v2h-2z M235,755h1v1h-1z M235,756h2v2h-2z M216,753h1v1h-1z M216,752h1v1h-1z M217,751h2v2h-2z M219,751h3v3h-3z M220,750h2v2h-2z M221,750h3v3h-3z M222,750h1v1h-1z M207,744h3v3h-3z M207,745h1v1h-1z M207,747h2v2h-2z M207,748h2v2h-2z M207,749h1v1h-1z M207,750h3v3h-3z M206,752h2v2h-2z M205,752h2v2h-2z M230,742h2v2h-2z M229,743h2v2h-2z M228,743h2v2h-2z M227,744h1v1h-1z M214,750h1v1h-1z M212,750h1v1h-1z M211,749h1v1h-1z M210,749h3v3h-3z M209,748h3v3h-3z M208,747h1v1h-1z M207,746h2v2h-2z M227,744h2v2h-2z M227,746h1v1h-1z M227,747h1v1h-1z M226,748h1v1h-1z M225,749h2v2h-2z M225,750h2v2h-2z M224,751h1v1h-1z M211,754h3v3h-3z M212,755h1v1h-1z M213,756h2v2h-2z M213,757h1v1h-1z M214,757h1v1h-1z M216,757h1v1h-1z M207,754h1v1h-1z M208,755h2v2h-2z M209,756h1v1h-1z M210,756h2v2h-2z M211,757h1v1h-1z M212,757h2v2h-2z M214,758h1v1h-1z M215,758h2v2h-2z M236,738h2v2h-2z M238,738h1v1h-1z M239,737h1v1h-1z M240,736h1v1h-1z M240,735h3v3h-3z M241,734h1v1h-1z M242,733h1v1h-1z M218,749h3v3h-3z M217,750h3v3h-3z M217,751h2v2h-2z M217,753h2v2h-2z M217,754h1v1h-1z M217,755h1v1h-1z M218,753h2v2h-2z M218,754h2v2h-2z M218,755h2v2h-2z M202,757h1v1h-1z M202,758h3v3h-3z M201,760h2v2h-2z M201,761h2v2h-2z M233,744h2v2h-2z M233,742h1v1h-1z M232,741h3v3h-3z M231,740h1v1h-1z M240,749h1v1h-1z M241,749h3v3h-3z M242,749h2v2h-2z M243,749h1v1h-1z M244,750h3v3h-3z M246,750h2v2h-2z M247,750h2v2h-2z M248,750h2v2h-2z M245,751h2v2h-2z M133,754h2v2h-2z M132,754h2v2h-2z M131,755h2v2h-2z M125,758h2v2h-2z M126,759h1v1h-1z M127,760h2v2h-2z M91,742h2v2h-2z M91,741h2v2h-2z M92,740h1v1h-1z M93,738h2v2h-2z M93,737h1v1h-1z M92,736h3v3h-3z M120,758h2v2h-2z M120,757h3v3h-3z M120,755h1v1h-1z M120,754h1v1h-1z M120,753h1v1h-1z M121,751h3v3h-3z M104,749h3v3h-3z M103,750h1v1h-1z M103,751h1v1h-1z M76,758h3v3h-3z M76,760h1v1h-1z M76,761h1v1h-1z M77,762h2v2h-2z M143,747h1v1h-1z M142,746h1v1h-1z M141,745h1v1h-1z M139,745h2v2h-2z M138,745h2v2h-2z M137,745h1v1h-1z M136,745h2v2h-2z M120,743h3v3h-3z M121,743h1v1h-1z M122,744h2v2h-2z M123,745h1v1h-1z M124,746h1v1h-1z M125,747h2v2h-2z M125,748h3v3h-3z M125,750h2v2h-2z M125,751h1v1h-1z M123,743h3v3h-3z M123,742h2v2h-2z M123,740h1v1h-1z M122,739h2v2h-2z M122,738h1v1h-1z M88,759h2v2h-2z M88,761h2v2h-2z M87,762h3v3h-3z M87,763h2v2h-2z M86,764h2v2h-2z M85,765h1v1h-1z M84,766h1v1h-1z M108,751h2v2h-2z M108,752h1v1h-1z M109,753h3v3h-3z M110,754h1v1h-1z M102,745h1v1h-1z M102,743h1v1h-1z M102,742h1v1h-1z M101,741h1v1h-1z M101,744h1v1h-1z M100,744h3v3h-3z M98,744h2v2h-2z M97,744h3v3h-3z M96,743h1v1h-1z M132,751h1v1h-1z M131,750h2v2h-2z M130,749h1v1h-1z M129,749h2v2h-2z M127,748h3v3h-3z M126,748h2v2h-2z M142,742h3v3h-3z M141,743h2v2h-2z M140,744h2v2h-2z M140,745h1v1h-1z M70,740h3v3h-3z M69,740h3v3h-3z M67,740h3v3h-3z M66,740h3v3h-3z M65,740h1v1h-1z M94,745h2v2h-2z M94,746h1v1h-1z M94,748h1v1h-1z M93,749h2v2h-2z M93,750h1v1h-1z M76,757h1v1h-1z M77,756h2v2h-2z M79,756h3v3h-3z M80,755h2v2h-2z M81,754h1v1h-1z M82,753h2v2h-2z M118,747h2v2h-2z M118,748h2v2h-2z M118,749h3v3h-3z M118,751h2v2h-2z M119,752h1v1h-1z M77,741h3v3h-3z M77,740h1v1h-1z M78,739h1v1h-1z M79,738h2v2h-2z M113,743h1v1h-1z M113,742h1v1h-1z M113,741h1v1h-1z M113,740h2v2h-2z M104,754h2v2h-2z M105,755h2v2h-2z M105,757h2v2h-2z M105,758h2v2h-2z M106,759h1v1h-1z M106,760h1v1h-1z M106,762h2v2h-2z M101,742h3v3h-3z M100,743h1v1h-1z M100,744h3v3h-3z M137,749h2v2h-2z M135,749h1v1h-1z M134,748h2v2h-2z M133,747h2v2h-2z M115,757h3v3h-3z M113,756h1v1h-1z M112,756h1v1h-1z M136,759h3v3h-3z M135,759h3v3h-3z M133,759h3v3h-3z M121,751h2v2h-2z M120,751h3v3h-3z M119,751h2v2h-2z M118,750h2v2h-2z M117,749h2v2h-2z M800,565h2v2h-2z M799,565h3v3h-3z M797,566h2v2h-2z M803,620h3v3h-3z M802,619h2v2h-2z M802,618h1v1h-1z M803,617h2v2h-2z M804,616h2v2h-2z M805,616h1v1h-1z M801,618h3v3h-3z M801,617h3v3h-3z M801,616h2v2h-2z M800,615h1v1h-1z M800,613h2v2h-2z M799,612h2v2h-2z M790,614h3v3h-3z M792,614h1v1h-1z M793,614h2v2h-2z M794,614h2v2h-2z M795,615h1v1h-1z M797,615h1v1h-1z M798,615h3v3h-3z M799,616h3v3h-3z M794,609h3v3h-3z M795,609h1v1h-1z M796,610h3v3h-3z M797,611h1v1h-1z M797,612h1v1h-1z M797,613h2v2h-2z M796,614h2v2h-2z M798,612h2v2h-2z M798,613h1v1h-1z M797,614h1v1h-1z M795,573h2v2h-2z M796,573h2v2h-2z M797,573h3v3h-3z M798,573h1v1h-1z M790,578h1v1h-1z M789,577h1v1h-1z M788,577h2v2h-2z M787,578h2v2h-2z M786,579h2v2h-2z M792,634h2v2h-2z M793,634h1v1h-1z M794,634h3v3h-3z M796,634h2v2h-2z M797,633h2v2h-2z M798,632h1v1h-1z M799,632h3v3h-3z M800,632h3v3h-3z M800,598h2v2h-2z M800,597h1v1h-1z M801,595h2v2h-2z M800,594h1v1h-1z M801,593h2v2h-2z M802,564h3v3h-3z M800,565h1v1h-1z M799,565h2v2h-2z M798,566h2v2h-2z M797,566h1v1h-1z M796,567h1v1h-1z M798,591h2v2h-2z M799,591h3v3h-3z M800,591h2v2h-2z M801,590h1v1h-1z M790,615h1v1h-1z M789,614h1v1h-1z M788,615h1v1h-1z M787,614h1v1h-1z M785,614h2v2h-2z M790,631h1v1h-1z M791,631h2v2h-2z M792,631h1v1h-1z M793,632h2v2h-2z M795,632h2v2h-2z M796,631h1v1h-1z M790,578h2v2h-2z M789,577h2v2h-2z M787,577h2v2h-2z M786,577h2v2h-2z M785,577h1v1h-1z M784,577h3v3h-3z M782,577h2v2h-2z M781,577h1v1h-1z M780,577h3v3h-3z M779,578h2v2h-2z M782,576h1v1h-1z M781,575h2v2h-2z M801,589h2v2h-2z M800,590h1v1h-1z M799,590h1v1h-1z M798,591h2v2h-2z M797,592h1v1h-1z M796,592h3v3h-3z M795,593h2v2h-2z M792,576h2v2h-2z M794,576h2v2h-2z M795,576h3v3h-3z M786,655h2v2h-2z M785,655h1v1h-1z M784,656h3v3h-3z M783,657h1v1h-1z M801,607h1v1h-1z M802,608h1v1h-1z M803,609h2v2h-2z M804,609h1v1h-1z M806,609h2v2h-2z M795,617h1v1h-1z M796,617h3v3h-3z M797,617h1v1h-1z M799,618h1v1h-1z M800,617h2v2h-2z M801,618h1v1h-1z M802,616h1v1h-1z M803,615h2v2h-2z M803,614h3v3h-3z M803,613h1v1h-1z M802,617h1v1h-1z M804,617h1v1h-1z M805,579h2v2h-2z M806,579h2v2h-2z M807,579h3v3h-3z M808,580h2v2h-2z M810,580h3v3h-3z M811,580h2v2h-2z M812,581h2v2h-2z M793,577h2v2h-2z M792,577h1v1h-1z M791,578h3v3h-3z M789,579h1v1h-1z M789,580h1v1h-1z M788,581h2v2h-2z M804,647h1v1h-1z M806,648h3v3h-3z M807,648h3v3h-3z M808,648h3v3h-3z M809,648h3v3h-3z M811,648h2v2h-2z M812,647h2v2h-2z M804,633h1v1h-1z M803,632h1v1h-1z M802,631h1v1h-1z M801,631h1v1h-1z M800,630h2v2h-2z M788,567h2v2h-2z M789,567h2v2h-2z M791,567h3v3h-3z M792,566h2v2h-2z M792,565h1v1h-1z M793,563h1v1h-1z M793,562h2v2h-2z M793,561h3v3h-3z M801,568h3v3h-3z M799,568h2v2h-2z M798,568h2v2h-2z M797,568h1v1h-1z M792,586h2v2h-2z M793,586h3v3h-3z M794,585h3v3h-3z M795,584h1v1h-1z M795,583h1v1h-1z M801,580h1v1h-1z M802,580h3v3h-3z M803,581h1v1h-1z M801,627h2v2h-2z M803,627h2v2h-2z M804,627h1v1h-1z M805,627h3v3h-3z M807,627h2v2h-2z M808,627h2v2h-2z M809,628h3v3h-3z M810,629h2v2h-2z M794,621h1v1h-1z M796,620h3v3h-3z M797,621h1v1h-1z M798,621h1v1h-1z M798,661h1v1h-1z M799,660h3v3h-3z M800,660h1v1h-1z M801,659h1v1h-1z M804,607h3v3h-3z M803,606h2v2h-2z M801,606h1v1h-1z M800,605h1v1h-1z M799,605h1v1h-1z M798,605h1v1h-1z" fill="#000"/>
<path d="M229,734 Q262,712 251,679" fill="none" stroke="#000" stroke-width="1.3" stroke-dasharray="9,2"/>
<path d="M300.0,56.0 L304.0,54.0 L310.0,57.0 L314.0,63.0 L318.0,70.0 L323.0,76.0 L319.0,81.0 L323.0,88.0 L324.0,96.0 L318.0,93.0 L314.0,85.0 L310.0,77.0 L306.0,67.0 L302.0,62.0Z" fill="#2b4868" stroke="#203a58" stroke-width="1"/>
<path d="M368.0,261.0 L374.0,258.0 L382.0,263.0 L390.0,267.0 L396.0,274.0 L395.0,278.0 L386.0,273.0 L376.0,269.0 L370.0,265.0Z" fill="#2b4868" stroke="#203a58" stroke-width="1"/>
<path d="M438.0,376.0 L441.0,370.0 L446.0,366.0 L451.0,363.0 L449.0,369.0 L445.0,372.0 L441.0,377.0Z" fill="#2b4868" stroke="#203a58" stroke-width="1"/>
<path d="M423.0,413.0 L427.0,415.0 L429.0,423.0 L432.0,430.0 L433.0,434.0 L428.0,430.0 L425.0,421.0Z" fill="#2b4868" stroke="#203a58" stroke-width="1"/>
<path d="M525.0,500.0 L528.0,502.0 L531.0,512.0 L534.0,522.0 L538.0,527.0 L535.0,532.0 L532.0,538.0 L528.0,528.0 L526.0,515.0Z" fill="#2b4868" stroke="#203a58" stroke-width="1"/>
<path d="M604.0,305.0 L608.0,302.0 L612.0,298.0 L614.0,292.0 L618.0,290.0 L622.0,291.0 L627.0,293.0 L624.0,297.0 L620.0,299.0 L617.0,304.0 L612.0,309.0 L608.0,313.0 L605.0,310.0Z" fill="#2b4868" stroke="#203a58" stroke-width="1"/>
<path d="M386.0,270.0 L392.0,272.0 L396.0,276.0 L390.0,276.0Z" fill="#2b4868" stroke="#203a58" stroke-width="1"/>
<path d="M538.0,601.0 L545.0,604.0 L552.0,606.0 L560.0,603.0 L563.0,611.0 L556.0,615.0 L548.0,619.5 L540.0,612.0Z" fill="#2b4868" stroke="#203a58" stroke-width="1"/>
<path d="M121.0,660.0 L125.0,654.0 L133.0,652.7 L136.0,659.0 L132.0,667.0 L124.0,668.0Z" fill="#2b4868" stroke="#203a58" stroke-width="1"/>
<path d="M41.0,681.0 L45.0,679.0 L51.0,685.0 L49.0,689.0 L43.0,687.0Z" fill="#2b4868" stroke="#203a58" stroke-width="1"/>
<path d="M56.0,686.0 L60.0,684.0 L63.0,692.0 L70.0,700.0 L78.0,704.0 L84.0,708.0 L82.0,711.0 L74.0,709.0 L65.0,705.0 L59.0,697.0Z" fill="#2b4868" stroke="#203a58" stroke-width="1"/>
<path d="M141.0,704.0 L146.0,698.0 L152.0,696.0 L155.7,703.0 L151.0,709.0 L146.0,714.0 L141.0,710.0Z" fill="#2b4868" stroke="#203a58" stroke-width="1"/>
<path d="M784.0,734.0 L790.0,730.0 L797.0,740.0 L796.0,754.0 L788.0,750.0Z" fill="#2b4868" stroke="#203a58" stroke-width="1"/>
<path d="M417.0,646.0 L420.0,642.0 L423.0,640.0 L428.0,638.0 L431.0,642.0 L436.0,641.0 L441.0,640.0 L446.0,638.0 L450.0,641.0 L455.0,646.0 L450.0,648.0 L442.0,646.0 L433.0,648.0 L424.0,648.0Z" fill="#014466" stroke="#000" stroke-width="1.2"/>
<path d="M473.0,655.0 L478.0,653.0 L483.0,654.0 L486.0,652.0 L489.0,657.0 L494.0,656.0 L499.0,651.0 L502.0,652.0 L498.0,660.0 L494.0,666.0 L498.0,672.0 L505.0,678.0 L508.0,682.0 L503.0,682.0 L496.0,677.0 L490.0,668.0 L484.0,662.0 L478.0,660.0Z" fill="#014466" stroke="#000" stroke-width="1.2"/>
<path d="M347.0,646.0 L352.0,643.0 L358.0,644.0 L364.0,649.0 L366.0,655.0 L358.0,656.0 L350.0,652.0Z" fill="#014466" stroke="#000" stroke-width="1.2"/>
<path d="M373.0,646.0 L376.0,638.0 L380.0,632.0 L386.0,634.0 L390.0,631.0 L395.0,640.0 L396.0,647.0 L386.0,648.0Z" fill="#014466" stroke="#000" stroke-width="1.2"/>
<path d="M784,636 L790.7,647.7 L785.7,667.7 L794,681 L787.4,694.3 L790.7,714 L784,731 L786,738" fill="none" stroke="#000" stroke-width="3.2"/>
<path d="M784,636 L790.7,647.7 L785.7,667.7 L794,681 L787.4,694.3 L790.7,714 L784,731 L786,738" fill="none" stroke="#1a4a6a" stroke-width="1.4" shape-rendering="auto"/>
<g fill="none" stroke="#7c6c14" stroke-width="1">
<path d="M182.0,6.0 L197.0,26.0 L200.5,46.0 L200.5,89.0 L192.0,112.0 L179.0,139.0 L162.0,172.0 L149.0,199.0 L145.7,209.0 L152.0,222.0 L162.0,225.5"/>
<path d="M159.0,222.0 L163.0,219.0 L172.0,220.0 L176.0,226.0 L172.0,232.0 L163.0,232.0 L159.0,228.0 L159.0,222.0"/>
<path d="M165.6,232.0 L169.0,276.0 L172.0,290.0 L172.0,313.0 L179.0,346.5 L182.0,376.4 L172.0,409.7 L162.0,433.0 L159.0,463.0 L149.0,483.0 L139.0,503.0 L132.0,540.0 L129.0,594.5 L125.7,624.5 L129.0,644.4 L135.7,657.7 L139.0,677.7"/>
<path d="M6.0,255.0 L56.0,252.0 L89.0,242.0 L122.0,229.0 L159.0,224.0"/>
<path d="M175.6,222.0 L205.5,205.5 L232.0,192.0 L276.0,169.0 L303.0,165.6 L336.5,159.0 L369.8,149.0 L403.0,137.0"/>
<path d="M239.0,6.0 L229.0,22.6 L227.0,42.6 L219.0,62.5 L202.0,69.0"/>
<path d="M242.0,6.0 L252.0,19.0 L259.0,46.0 L276.0,59.0 L300.0,54.0 L313.0,59.0 L336.5,72.5 L369.8,102.4 L403.0,125.7"/>
<path d="M366.0,132.0 L370.0,112.0 L385.0,100.0 L405.0,98.0 L425.0,103.0 L436.0,120.0 L436.0,145.0 L425.0,162.0 L405.0,166.0 L385.0,162.0 L370.0,150.0 L366.0,132.0"/>
<path d="M409.7,115.7 L426.3,72.5 L443.0,56.0 L466.0,39.0 L473.0,16.0 L471.0,6.0"/>
<path d="M409.7,132.4 L453.0,132.4 L502.8,135.7 L540.0,145.7 L538.0,152.0 L571.0,159.0 L594.5,155.6 L618.0,147.0"/>
<path d="M409.7,139.0 L436.3,172.3 L456.0,192.0 L476.0,219.0 L496.0,235.5 L516.0,235.5 L540.0,222.0 L554.6,212.0 L571.0,189.0 L588.0,169.0 L614.5,149.0"/>
<path d="M614.5,149.0 L598.0,125.7 L591.0,109.0 L604.5,95.8 L599.5,82.5 L603.0,46.0 L588.0,22.6 L588.0,6.0"/>
<path d="M638.0,149.0 L671.0,135.7 L704.0,115.7 L737.5,95.8 L771.0,82.5 L808.0,71.0"/>
<path d="M618.0,147.0 L661.0,142.0 L671.0,159.0 L681.0,169.0 L687.6,185.6 L704.0,189.0 L737.5,182.0 L771.0,175.6 L808.0,172.0"/>
<path d="M714.0,189.0 L724.0,205.5 L737.5,215.5 L751.0,232.0 L761.0,252.0 L764.0,276.0"/>
<path d="M751.0,270.0 L790.7,296.6 L808.0,303.0"/>
<path d="M593.5,335.8 L609.8,324.0 L624.6,318.0 L639.4,310.7 L661.0,296.6 L687.6,283.0 L717.6,270.0 L744.0,252.0 L771.0,239.0 L808.0,222.0"/>
<path d="M398.0,142.0 L396.4,179.0 L398.0,222.0 L398.0,276.0 L396.4,300.0 L401.4,336.5 L403.0,363.0 L406.4,379.7 L404.7,393.0 L409.7,409.7 L419.7,429.6 L429.6,456.0 L439.6,469.5 L436.3,486.0 L426.3,502.8 L413.0,526.0 L403.0,538.0 L383.0,564.6 L353.0,584.6 L320.0,599.5 L306.6,611.0 L306.6,624.5"/>
<path d="M406.4,366.4 L419.7,353.0 L446.3,330.0 L469.5,306.6 L489.5,273.3 L502.8,239.0"/>
<path d="M416.3,368.0 L443.0,363.0 L486.0,359.8 L530.0,354.3 L555.0,352.0 L567.0,347.0 L575.8,347.6"/>
<path d="M403.0,373.0 L386.4,386.4 L366.4,398.0 L343.0,403.0 L330.0,413.0 L303.0,443.0 L276.0,469.5 L239.0,474.5 L189.0,478.0 L152.0,479.5 L139.0,473.5 L99.0,474.5 L72.5,469.5 L39.0,463.0 L6.0,461.0"/>
<path d="M258.7,474.5 L245.4,503.0 L235.5,526.0 L225.5,538.0 L215.5,558.0 L212.0,581.0 L205.5,611.0 L192.0,634.4 L185.6,651.0"/>
<path d="M439.6,471.0 L456.0,472.9 L489.5,459.6 L516.0,443.0 L543.3,410.0 L549.2,396.4 L555.0,381.6 L564.0,369.8 L577.3,361.0"/>
<path d="M574.5,348.0 L576.0,338.0 L584.7,334.5 L593.5,337.0 L595.0,348.0 L593.0,359.0 L584.7,361.0 L577.0,358.0 L574.5,348.0"/>
<path d="M582.0,335.0 L582.0,361.0"/>
<path d="M543.3,290.0 L556.6,307.7 L558.0,319.6 L568.4,321.8 L574.3,331.4 L580.2,337.3"/>
<path d="M584.7,293.0 L577.3,304.8 L571.4,321.0 L570.0,325.5"/>
<path d="M543.3,290.0 L538.0,270.0 L538.0,229.0"/>
<path d="M595.0,353.5 L606.8,353.5 L618.7,361.0 L633.4,361.7 L654.4,366.4 L687.6,368.0 L721.0,371.4 L751.0,371.4 L771.0,359.8 L808.0,340.0"/>
<path d="M584.7,358.0 L592.0,366.8 L601.0,378.7 L605.4,393.4 L612.8,410.0 L631.0,423.0 L637.8,433.0 L631.0,456.0 L629.5,496.0 L637.8,529.4 L644.4,538.0 L654.4,564.6 L657.7,598.0 L667.7,624.5 L684.3,644.4 L704.3,664.4 L717.6,687.6 L727.6,711.0 L740.9,737.5 L750.8,770.8 L754.0,808.0"/>
<path d="M634.4,426.3 L654.4,443.0 L677.7,456.0 L711.0,466.0 L754.0,472.9 L797.4,486.0 L808.0,489.5"/>
<path d="M6.0,661.0 L39.0,652.7 L72.5,644.4 L92.5,642.8 L122.4,641.0 L149.0,641.0 L172.3,647.7 L185.6,656.0 L205.5,651.0 L238.8,644.4 L270.0,644.4 L306.6,627.8 L336.5,626.0 L366.4,637.8 L386.4,634.4 L403.0,622.8 L436.3,617.8 L469.5,621.0 L502.8,616.0 L540.0,621.0 L571.0,634.4 L604.5,637.8 L637.8,642.8 L671.0,651.0 L704.3,661.0 L737.5,661.0 L771.0,656.0 L808.0,654.4"/>
<path d="M92.5,651.0 L99.0,667.7 L115.7,671.0 L139.0,677.7 L155.7,684.3 L169.0,681.0 L179.0,671.0 L186.0,660.0"/>
<path d="M6.0,614.5 L12.6,624.5 L16.0,661.0"/>
<path d="M808.0,528.0 L802.0,545.0 L797.0,565.0 L790.7,588.0 L784.0,621.0 L782.4,647.7 L790.7,671.0 L800.7,697.6 L808.0,714.0"/>
</g>
<g fill="none" stroke="#000" stroke-width="1" stroke-linejoin="round">
<path d="M6.0,105.0 L154.5,105.0 L160.0,113.0 L161.0,124.0 L150.0,135.0 L138.0,149.0 L186.0,149.0"/>
<path d="M306.0,6.0 L308.6,18.0 L282.7,23.3 L277.6,28.4 L282.7,46.5 L275.0,54.3 L264.7,49.0 L259.5,36.2 L242.7,40.0 L231.0,46.5 L225.9,54.3 L220.7,59.5"/>
<path d="M208.0,104.7 L311.0,104.7 L311.0,89.5 L324.0,91.0 L400.0,90.0 L500.0,93.0 L610.0,96.5 L806.0,98.0"/>
<path d="M636.0,95.7 L651.7,88.0 L677.6,82.0 L685.3,75.0 L697.0,64.6 L706.0,57.0 L708.6,47.8 L721.5,41.4 L739.6,33.6 L755.0,19.4 L763.0,13.0 L755.0,9.0 L748.7,6.0"/>
<path d="M763.0,13.0 L765.5,25.9 L781.0,38.8 L786.0,41.4 L801.7,37.5 L810.0,33.6"/>
<path d="M787.5,95.7 L783.6,103.4 L781.0,117.7 L773.0,117.7 L763.0,131.9 L755.0,138.3 L744.8,135.8 L731.9,141.0 L721.5,150.0 L713.8,144.8 L708.6,147.4 L699.6,153.9 L693.0,156.4 L688.0,168.0 L677.6,168.0 L664.6,175.8 L649.0,184.9 L633.6,188.8 L620.7,191.4 L610.3,201.7 L610.3,210.3 L600.0,215.5 L596.5,215.5 L591.4,219.4 L588.8,238.8"/>
<path d="M143.0,239.0 L300.0,238.5 L400.0,238.5 L493.0,238.8 L590.0,238.8 L677.6,238.5"/>
<path d="M677.6,238.3 L693.0,233.6 L706.0,230.5 L716.4,225.9 L731.9,220.7 L744.8,220.2 L770.7,220.7 L810.0,223.0"/>
<path d="M677.6,238.8 L669.8,247.8 L662.0,259.5 L660.8,264.6 L667.7,270.0 L684.3,283.3 L694.3,283.3 L704.3,303.0 L707.6,316.6 L724.2,333.0 L741.0,346.5 L754.0,363.0 L767.5,376.4 L770.8,393.0 L787.4,403.0 L797.4,413.0 L800.7,426.3 L804.0,436.3 L805.7,449.6 L808.0,460.0"/>
<path d="M299.6,238.0 L305.0,245.0 L303.0,285.0 L300.0,330.0 L296.0,370.0 L291.8,400.0 L284.0,464.6 L278.9,511.0 L281.5,555.0 L282.7,610.0 L284.8,652.0"/>
<path d="M493.0,238.8 L497.0,262.0 L499.6,280.0 L506.0,316.0 L512.5,355.0 L520.0,400.0 L525.4,428.4 L530.6,446.5 L539.6,462.0 L539.6,472.4 L546.0,481.5 L534.5,490.5 L533.0,498.3 L529.3,508.6 L526.7,521.5 L533.0,539.6 L533.0,555.0 L529.3,575.8 L537.0,591.4 L541.0,601.7"/>
<path d="M357.7,645.0 L355.0,638.8 L360.0,633.6 L357.7,623.3 L352.6,610.0 L342.0,602.0 L343.5,594.0 L537.0,594.0"/>
<path d="M563.0,619.5 L610.0,622.0 L660.0,627.0 L700.0,629.0 L744.2,631.0 L745.8,647.7 L754.0,651.0 L759.0,637.8 L757.5,617.8 L767.5,609.5 L780.8,614.5 L787.4,617.8 L797.0,618.0"/>
<path d="M6.0,415.5 L78.0,415.5"/>
<path d="M44.0,570.7 L46.5,578.4 L45.3,583.6 L50.4,591.4 L45.3,594.5 L185.6,594.5 L179.0,614.5 L182.3,637.8 L192.0,651.0 L195.6,666.0"/>
<path d="M197.7,7.5 C200.1,8.5 211.8,10.8 212.1,13.5 C212.3,16.2 200.2,20.3 199.2,23.9 C198.1,27.6 205.6,31.7 205.7,35.4 C205.9,39.1 198.3,44.5 200.0,46.3 C201.6,48.1 213.7,44.1 215.7,46.2 C217.8,48.4 211.2,57.7 212.2,59.1 C213.3,60.5 219.1,53.9 221.9,54.5 C224.6,55.2 226.6,61.1 228.7,63.1 C230.8,65.0 235.2,64.7 234.7,66.3 C234.1,68.0 225.8,69.7 225.4,73.0 C225.0,76.2 233.1,83.4 232.2,85.8 C231.4,88.3 221.8,86.3 220.5,87.6 C219.1,88.9 225.2,91.8 224.1,93.5 C223.0,95.1 215.2,94.7 213.7,97.5 C212.2,100.2 217.6,108.8 215.2,110.0 C212.8,111.2 201.9,103.1 199.4,104.6 C196.9,106.1 201.8,115.7 200.2,119.1 C198.5,122.5 190.0,122.1 189.5,125.0 C189.0,127.9 198.1,132.6 197.3,136.4 C196.4,140.3 184.7,145.0 184.4,148.0 C184.2,151.0 195.4,152.8 195.8,154.6 C196.2,156.4 188.0,156.8 186.8,158.9 C185.7,160.9 190.1,164.6 189.0,166.7 C187.9,168.9 181.6,169.1 180.0,171.7 C178.4,174.3 181.7,180.7 179.5,182.4 C177.3,184.0 168.4,179.7 166.7,181.7 C165.0,183.8 171.1,192.6 169.5,194.7 C167.8,196.7 157.5,192.8 156.9,194.2 C156.3,195.6 166.7,201.0 165.8,203.2 C164.8,205.4 152.3,205.0 151.2,207.5 C150.0,209.9 158.4,215.4 158.9,218.1 C159.4,220.8 155.7,221.3 154.1,223.8 C152.6,226.3 151.3,231.1 149.5,232.9 C147.6,234.8 144.5,232.3 143.2,234.6 C141.9,236.9 144.2,244.4 141.6,246.8 C139.0,249.1 129.2,245.8 127.5,248.7 C125.8,251.7 132.7,261.4 131.5,264.4 C130.3,267.3 121.3,264.1 120.3,266.6 C119.3,269.0 126.2,275.3 125.5,278.9 C124.8,282.4 117.5,285.0 115.9,287.9 C114.2,290.7 117.8,294.1 115.7,296.0 C113.7,297.9 105.4,297.0 103.8,299.2 C102.3,301.4 108.3,306.9 106.5,309.4 C104.8,311.8 95.0,310.8 93.1,313.9 C91.2,316.9 96.5,325.1 95.0,327.6 C93.5,330.2 85.4,327.6 83.9,329.2 C82.5,330.9 87.4,335.7 86.1,337.5 C84.8,339.3 77.4,337.4 76.4,340.1 C75.3,342.8 81.0,350.7 79.9,353.8 C78.9,356.9 69.5,356.7 69.9,358.8 C70.4,360.9 81.9,364.0 82.5,366.5 C83.1,369.0 73.1,371.0 73.5,373.7 C73.8,376.5 83.6,379.8 84.6,382.7 C85.7,385.7 80.1,388.3 79.7,391.5 C79.4,394.7 83.9,399.4 82.6,402.1 C81.3,404.8 71.7,405.5 71.9,407.5 C72.2,409.4 83.6,410.7 84.1,414.0 C84.6,417.2 74.8,423.6 74.9,427.2 C74.9,430.7 83.3,432.5 84.6,435.3 C85.9,438.1 81.6,441.2 82.8,444.0 C84.0,446.7 91.7,448.4 91.9,451.6 C92.1,454.8 82.2,460.6 84.0,463.0 C85.8,465.5 101.6,464.3 102.8,466.1 C104.1,468.0 92.8,470.5 91.3,474.0 C89.8,477.5 95.2,484.7 93.8,487.1 C92.4,489.5 83.9,486.7 82.7,488.5 C81.6,490.3 88.6,495.8 86.6,497.9 C84.6,500.0 72.6,498.3 70.9,501.2 C69.2,504.2 77.2,512.8 76.5,515.6 C75.8,518.4 67.8,515.9 66.8,518.0 C65.8,520.1 72.3,525.9 70.5,528.3 C68.8,530.6 57.8,529.2 56.3,532.0 C54.7,534.7 63.0,541.7 61.4,544.7 C59.9,547.7 48.2,547.2 46.9,550.2 C45.5,553.1 53.5,559.5 53.3,562.3 C53.1,565.1 47.2,565.5 45.7,566.9 C44.1,568.4 44.3,570.3 44.0,571.0"/>
</g>
<mask id="lm" maskUnits="userSpaceOnUse" x="0" y="0" width="812" height="812"><rect x="0" y="0" width="812" height="812" fill="#fff"/>
<rect x="394.5" y="1.5" width="22" height="12" fill="#000"/>
<rect x="394.5" y="121.5" width="22" height="12" fill="#000"/>
<rect x="394.5" y="241.5" width="22" height="12" fill="#000"/>
</mask>
<g mask="url(#lm)" fill="#c4c4c4">
<path d="M294,293h1v1h-1zM519,293h1v1h-1zM294,520h1v1h-1zM519,520h1v1h-1zM295,292h1v1h-1zM518,292h1v1h-1zM295,521h1v1h-1zM518,521h1v1h-1zM296,291h2v1h-2zM516,291h2v1h-2zM296,522h2v1h-2zM516,522h2v1h-2zM298,290h1v1h-1zM515,290h1v1h-1zM298,523h1v1h-1zM515,523h1v1h-1zM299,289h1v1h-1zM514,289h1v1h-1zM299,524h1v1h-1zM514,524h1v1h-1zM300,288h1v1h-1zM513,288h1v1h-1zM300,525h1v1h-1zM513,525h1v1h-1zM301,287h1v1h-1zM512,287h1v1h-1zM301,526h1v1h-1zM512,526h1v1h-1zM302,286h1v1h-1zM511,286h1v1h-1zM302,527h1v1h-1zM511,527h1v1h-1zM303,285h1v1h-1zM510,285h1v1h-1zM303,528h1v1h-1zM510,528h1v1h-1zM304,284h1v1h-1zM509,284h1v1h-1zM304,529h1v1h-1zM509,529h1v1h-1zM305,283h2v1h-2zM507,283h2v1h-2zM305,530h2v1h-2zM507,530h2v1h-2zM307,282h1v1h-1zM506,282h1v1h-1zM307,531h1v1h-1zM506,531h1v1h-1zM308,281h1v1h-1zM505,281h1v1h-1zM308,532h1v1h-1zM505,532h1v1h-1zM309,280h2v1h-2zM503,280h2v1h-2zM309,533h2v1h-2zM503,533h2v1h-2zM311,279h1v1h-1zM502,279h1v1h-1zM311,534h1v1h-1zM502,534h1v1h-1zM312,278h1v1h-1zM501,278h1v1h-1zM312,535h1v1h-1zM501,535h1v1h-1zM313,277h2v1h-2zM499,277h2v1h-2zM313,536h2v1h-2zM499,536h2v1h-2zM315,276h1v1h-1zM498,276h1v1h-1zM315,537h1v1h-1zM498,537h1v1h-1zM316,275h1v1h-1zM497,275h1v1h-1zM316,538h1v1h-1zM497,538h1v1h-1zM317,274h2v1h-2zM495,274h2v1h-2zM317,539h2v1h-2zM495,539h2v1h-2zM319,273h1v1h-1zM494,273h1v1h-1zM319,540h1v1h-1zM494,540h1v1h-1zM320,272h2v1h-2zM492,272h2v1h-2zM320,541h2v1h-2zM492,541h2v1h-2zM322,271h2v1h-2zM490,271h2v1h-2zM322,542h2v1h-2zM490,542h2v1h-2zM324,270h1v1h-1zM489,270h1v1h-1zM324,543h1v1h-1zM489,543h1v1h-1zM325,269h2v1h-2zM487,269h2v1h-2zM325,544h2v1h-2zM487,544h2v1h-2zM327,268h2v1h-2zM485,268h2v1h-2zM327,545h2v1h-2zM485,545h2v1h-2zM329,267h2v1h-2zM483,267h2v1h-2zM329,546h2v1h-2zM483,546h2v1h-2zM331,266h1v1h-1zM482,266h1v1h-1zM331,547h1v1h-1zM482,547h1v1h-1zM332,265h2v1h-2zM480,265h2v1h-2zM332,548h2v1h-2zM480,548h2v1h-2zM334,264h2v1h-2zM478,264h2v1h-2zM334,549h2v1h-2zM478,549h2v1h-2zM336,263h2v1h-2zM476,263h2v1h-2zM336,550h2v1h-2zM476,550h2v1h-2zM338,262h3v1h-3zM473,262h3v1h-3zM338,551h3v1h-3zM473,551h3v1h-3zM341,261h2v1h-2zM471,261h2v1h-2zM341,552h2v1h-2zM471,552h2v1h-2zM343,260h2v1h-2zM469,260h2v1h-2zM343,553h2v1h-2zM469,553h2v1h-2zM345,259h3v1h-3zM466,259h3v1h-3zM345,554h3v1h-3zM466,554h3v1h-3zM348,258h2v1h-2zM464,258h2v1h-2zM348,555h2v1h-2zM464,555h2v1h-2zM350,257h3v1h-3zM461,257h3v1h-3zM350,556h3v1h-3zM461,556h3v1h-3zM353,256h3v1h-3zM458,256h3v1h-3zM353,557h3v1h-3zM458,557h3v1h-3zM356,255h3v1h-3zM455,255h3v1h-3zM356,558h3v1h-3zM455,558h3v1h-3zM359,254h3v1h-3zM452,254h3v1h-3zM359,559h3v1h-3zM452,559h3v1h-3zM362,253h3v1h-3zM449,253h3v1h-3zM362,560h3v1h-3zM449,560h3v1h-3zM365,252h4v1h-4zM445,252h4v1h-4zM365,561h4v1h-4zM445,561h4v1h-4zM369,251h5v1h-5zM440,251h5v1h-5zM369,562h5v1h-5zM440,562h5v1h-5zM374,250h5v1h-5zM435,250h5v1h-5zM374,563h5v1h-5zM435,563h5v1h-5zM379,249h6v1h-6zM429,249h6v1h-6zM379,564h6v1h-6zM429,564h6v1h-6zM385,248h9v1h-9zM420,248h9v1h-9zM385,565h9v1h-9zM420,565h9v1h-9zM394,247h26v1h-26zM394,566h26v1h-26zM293,294h1v1h-1zM293,519h1v1h-1zM520,294h1v1h-1zM520,519h1v1h-1zM292,295h1v1h-1zM292,518h1v1h-1zM521,295h1v1h-1zM521,518h1v1h-1zM291,296h1v2h-1zM291,516h1v2h-1zM522,296h1v2h-1zM522,516h1v2h-1zM290,298h1v1h-1zM290,515h1v1h-1zM523,298h1v1h-1zM523,515h1v1h-1zM289,299h1v1h-1zM289,514h1v1h-1zM524,299h1v1h-1zM524,514h1v1h-1zM288,300h1v1h-1zM288,513h1v1h-1zM525,300h1v1h-1zM525,513h1v1h-1zM287,301h1v1h-1zM287,512h1v1h-1zM526,301h1v1h-1zM526,512h1v1h-1zM286,302h1v1h-1zM286,511h1v1h-1zM527,302h1v1h-1zM527,511h1v1h-1zM285,303h1v1h-1zM285,510h1v1h-1zM528,303h1v1h-1zM528,510h1v1h-1zM284,304h1v1h-1zM284,509h1v1h-1zM529,304h1v1h-1zM529,509h1v1h-1zM283,305h1v2h-1zM283,507h1v2h-1zM530,305h1v2h-1zM530,507h1v2h-1zM282,307h1v1h-1zM282,506h1v1h-1zM531,307h1v1h-1zM531,506h1v1h-1zM281,308h1v1h-1zM281,505h1v1h-1zM532,308h1v1h-1zM532,505h1v1h-1zM280,309h1v2h-1zM280,503h1v2h-1zM533,309h1v2h-1zM533,503h1v2h-1zM279,311h1v1h-1zM279,502h1v1h-1zM534,311h1v1h-1zM534,502h1v1h-1zM278,312h1v1h-1zM278,501h1v1h-1zM535,312h1v1h-1zM535,501h1v1h-1zM277,313h1v2h-1zM277,499h1v2h-1zM536,313h1v2h-1zM536,499h1v2h-1zM276,315h1v1h-1zM276,498h1v1h-1zM537,315h1v1h-1zM537,498h1v1h-1zM275,316h1v1h-1zM275,497h1v1h-1zM538,316h1v1h-1zM538,497h1v1h-1zM274,317h1v2h-1zM274,495h1v2h-1zM539,317h1v2h-1zM539,495h1v2h-1zM273,319h1v1h-1zM273,494h1v1h-1zM540,319h1v1h-1zM540,494h1v1h-1zM272,320h1v2h-1zM272,492h1v2h-1zM541,320h1v2h-1zM541,492h1v2h-1zM271,322h1v2h-1zM271,490h1v2h-1zM542,322h1v2h-1zM542,490h1v2h-1zM270,324h1v1h-1zM270,489h1v1h-1zM543,324h1v1h-1zM543,489h1v1h-1zM269,325h1v2h-1zM269,487h1v2h-1zM544,325h1v2h-1zM544,487h1v2h-1zM268,327h1v2h-1zM268,485h1v2h-1zM545,327h1v2h-1zM545,485h1v2h-1zM267,329h1v2h-1zM267,483h1v2h-1zM546,329h1v2h-1zM546,483h1v2h-1zM266,331h1v1h-1zM266,482h1v1h-1zM547,331h1v1h-1zM547,482h1v1h-1zM265,332h1v2h-1zM265,480h1v2h-1zM548,332h1v2h-1zM548,480h1v2h-1zM264,334h1v2h-1zM264,478h1v2h-1zM549,334h1v2h-1zM549,478h1v2h-1zM263,336h1v2h-1zM263,476h1v2h-1zM550,336h1v2h-1zM550,476h1v2h-1zM262,338h1v3h-1zM262,473h1v3h-1zM551,338h1v3h-1zM551,473h1v3h-1zM261,341h1v2h-1zM261,471h1v2h-1zM552,341h1v2h-1zM552,471h1v2h-1zM260,343h1v2h-1zM260,469h1v2h-1zM553,343h1v2h-1zM553,469h1v2h-1zM259,345h1v3h-1zM259,466h1v3h-1zM554,345h1v3h-1zM554,466h1v3h-1zM258,348h1v2h-1zM258,464h1v2h-1zM555,348h1v2h-1zM555,464h1v2h-1zM257,350h1v3h-1zM257,461h1v3h-1zM556,350h1v3h-1zM556,461h1v3h-1zM256,353h1v3h-1zM256,458h1v3h-1zM557,353h1v3h-1zM557,458h1v3h-1zM255,356h1v3h-1zM255,455h1v3h-1zM558,356h1v3h-1zM558,455h1v3h-1zM254,359h1v3h-1zM254,452h1v3h-1zM559,359h1v3h-1zM559,452h1v3h-1zM253,362h1v3h-1zM253,449h1v3h-1zM560,362h1v3h-1zM560,449h1v3h-1zM252,365h1v4h-1zM252,445h1v4h-1zM561,365h1v4h-1zM561,445h1v4h-1zM251,369h1v5h-1zM251,440h1v5h-1zM562,369h1v5h-1zM562,440h1v5h-1zM250,374h1v5h-1zM250,435h1v5h-1zM563,374h1v5h-1zM563,435h1v5h-1zM249,379h1v6h-1zM249,429h1v6h-1zM564,379h1v6h-1zM564,429h1v6h-1zM248,385h1v9h-1zM248,420h1v9h-1zM565,385h1v9h-1zM565,420h1v9h-1zM247,394h1v26h-1zM566,394h1v26h-1z"/>
<path d="M209,209h1v1h-1zM604,209h1v1h-1zM209,604h1v1h-1zM604,604h1v1h-1zM210,208h1v1h-1zM603,208h1v1h-1zM210,605h1v1h-1zM603,605h1v1h-1zM211,207h1v1h-1zM602,207h1v1h-1zM211,606h1v1h-1zM602,606h1v1h-1zM212,206h1v1h-1zM601,206h1v1h-1zM212,607h1v1h-1zM601,607h1v1h-1zM213,205h1v1h-1zM600,205h1v1h-1zM213,608h1v1h-1zM600,608h1v1h-1zM214,204h1v1h-1zM599,204h1v1h-1zM214,609h1v1h-1zM599,609h1v1h-1zM215,203h1v1h-1zM598,203h1v1h-1zM215,610h1v1h-1zM598,610h1v1h-1zM216,202h1v1h-1zM597,202h1v1h-1zM216,611h1v1h-1zM597,611h1v1h-1zM217,201h1v1h-1zM596,201h1v1h-1zM217,612h1v1h-1zM596,612h1v1h-1zM218,200h1v1h-1zM595,200h1v1h-1zM218,613h1v1h-1zM595,613h1v1h-1zM219,199h1v1h-1zM594,199h1v1h-1zM219,614h1v1h-1zM594,614h1v1h-1zM220,198h1v1h-1zM593,198h1v1h-1zM220,615h1v1h-1zM593,615h1v1h-1zM221,197h2v1h-2zM591,197h2v1h-2zM221,616h2v1h-2zM591,616h2v1h-2zM223,196h1v1h-1zM590,196h1v1h-1zM223,617h1v1h-1zM590,617h1v1h-1zM224,195h1v1h-1zM589,195h1v1h-1zM224,618h1v1h-1zM589,618h1v1h-1zM225,194h1v1h-1zM588,194h1v1h-1zM225,619h1v1h-1zM588,619h1v1h-1zM226,193h1v1h-1zM587,193h1v1h-1zM226,620h1v1h-1zM587,620h1v1h-1zM227,192h1v1h-1zM586,192h1v1h-1zM227,621h1v1h-1zM586,621h1v1h-1zM228,191h2v1h-2zM584,191h2v1h-2zM228,622h2v1h-2zM584,622h2v1h-2zM230,190h1v1h-1zM583,190h1v1h-1zM230,623h1v1h-1zM583,623h1v1h-1zM231,189h1v1h-1zM582,189h1v1h-1zM231,624h1v1h-1zM582,624h1v1h-1zM232,188h1v1h-1zM581,188h1v1h-1zM232,625h1v1h-1zM581,625h1v1h-1zM233,187h2v1h-2zM579,187h2v1h-2zM233,626h2v1h-2zM579,626h2v1h-2zM235,186h1v1h-1zM578,186h1v1h-1zM235,627h1v1h-1zM578,627h1v1h-1zM236,185h1v1h-1zM577,185h1v1h-1zM236,628h1v1h-1zM577,628h1v1h-1zM237,184h2v1h-2zM575,184h2v1h-2zM237,629h2v1h-2zM575,629h2v1h-2zM239,183h1v1h-1zM574,183h1v1h-1zM239,630h1v1h-1zM574,630h1v1h-1zM240,182h1v1h-1zM573,182h1v1h-1zM240,631h1v1h-1zM573,631h1v1h-1zM241,181h2v1h-2zM571,181h2v1h-2zM241,632h2v1h-2zM571,632h2v1h-2zM243,180h1v1h-1zM570,180h1v1h-1zM243,633h1v1h-1zM570,633h1v1h-1zM244,179h1v1h-1zM569,179h1v1h-1zM244,634h1v1h-1zM569,634h1v1h-1zM245,178h2v1h-2zM567,178h2v1h-2zM245,635h2v1h-2zM567,635h2v1h-2zM247,177h1v1h-1zM566,177h1v1h-1zM247,636h1v1h-1zM566,636h1v1h-1zM248,176h2v1h-2zM564,176h2v1h-2zM248,637h2v1h-2zM564,637h2v1h-2zM250,175h1v1h-1zM563,175h1v1h-1zM250,638h1v1h-1zM563,638h1v1h-1zM251,174h2v1h-2zM561,174h2v1h-2zM251,639h2v1h-2zM561,639h2v1h-2zM253,173h1v1h-1zM560,173h1v1h-1zM253,640h1v1h-1zM560,640h1v1h-1zM254,172h2v1h-2zM558,172h2v1h-2zM254,641h2v1h-2zM558,641h2v1h-2zM256,171h1v1h-1zM557,171h1v1h-1zM256,642h1v1h-1zM557,642h1v1h-1zM257,170h2v1h-2zM555,170h2v1h-2zM257,643h2v1h-2zM555,643h2v1h-2zM259,169h1v1h-1zM554,169h1v1h-1zM259,644h1v1h-1zM554,644h1v1h-1zM260,168h2v1h-2zM552,168h2v1h-2zM260,645h2v1h-2zM552,645h2v1h-2zM262,167h2v1h-2zM550,167h2v1h-2zM262,646h2v1h-2zM550,646h2v1h-2zM264,166h1v1h-1zM549,166h1v1h-1zM264,647h1v1h-1zM549,647h1v1h-1zM265,165h2v1h-2zM547,165h2v1h-2zM265,648h2v1h-2zM547,648h2v1h-2zM267,164h2v1h-2zM545,164h2v1h-2zM267,649h2v1h-2zM545,649h2v1h-2zM269,163h2v1h-2zM543,163h2v1h-2zM269,650h2v1h-2zM543,650h2v1h-2zM271,162h1v1h-1zM542,162h1v1h-1zM271,651h1v1h-1zM542,651h1v1h-1zM272,161h2v1h-2zM540,161h2v1h-2zM272,652h2v1h-2zM540,652h2v1h-2zM274,160h2v1h-2zM538,160h2v1h-2zM274,653h2v1h-2zM538,653h2v1h-2zM276,159h2v1h-2zM536,159h2v1h-2zM276,654h2v1h-2zM536,654h2v1h-2zM278,158h2v1h-2zM534,158h2v1h-2zM278,655h2v1h-2zM534,655h2v1h-2zM280,157h2v1h-2zM532,157h2v1h-2zM280,656h2v1h-2zM532,656h2v1h-2zM282,156h2v1h-2zM530,156h2v1h-2zM282,657h2v1h-2zM530,657h2v1h-2zM284,155h2v1h-2zM528,155h2v1h-2zM284,658h2v1h-2zM528,658h2v1h-2zM286,154h2v1h-2zM526,154h2v1h-2zM286,659h2v1h-2zM526,659h2v1h-2zM288,153h2v1h-2zM524,153h2v1h-2zM288,660h2v1h-2zM524,660h2v1h-2zM290,152h3v1h-3zM521,152h3v1h-3zM290,661h3v1h-3zM521,661h3v1h-3zM293,151h2v1h-2zM519,151h2v1h-2zM293,662h2v1h-2zM519,662h2v1h-2zM295,150h2v1h-2zM517,150h2v1h-2zM295,663h2v1h-2zM517,663h2v1h-2zM297,149h3v1h-3zM514,149h3v1h-3zM297,664h2v1h-2zM515,664h2v1h-2zM299,665h3v1h-3zM512,665h3v1h-3zM300,148h2v1h-2zM512,148h2v1h-2zM302,147h2v1h-2zM510,147h2v1h-2zM302,666h2v1h-2zM510,666h2v1h-2zM304,146h3v1h-3zM507,146h3v1h-3zM304,667h3v1h-3zM507,667h3v1h-3zM307,145h3v1h-3zM504,145h3v1h-3zM307,668h3v1h-3zM504,668h3v1h-3zM310,144h2v1h-2zM502,144h2v1h-2zM310,669h2v1h-2zM502,669h2v1h-2zM312,143h3v1h-3zM499,143h3v1h-3zM312,670h3v1h-3zM499,670h3v1h-3zM315,142h3v1h-3zM496,142h3v1h-3zM315,671h3v1h-3zM496,671h3v1h-3zM318,141h3v1h-3zM493,141h3v1h-3zM318,672h3v1h-3zM493,672h3v1h-3zM321,140h3v1h-3zM490,140h3v1h-3zM321,673h3v1h-3zM490,673h3v1h-3zM324,139h4v1h-4zM486,139h4v1h-4zM324,674h4v1h-4zM486,674h4v1h-4zM328,138h3v1h-3zM483,138h3v1h-3zM328,675h3v1h-3zM483,675h3v1h-3zM331,137h4v1h-4zM479,137h4v1h-4zM331,676h4v1h-4zM479,676h4v1h-4zM335,136h4v1h-4zM475,136h4v1h-4zM335,677h4v1h-4zM475,677h4v1h-4zM339,135h4v1h-4zM471,135h4v1h-4zM339,678h4v1h-4zM471,678h4v1h-4zM343,134h4v1h-4zM467,134h4v1h-4zM343,679h4v1h-4zM467,679h4v1h-4zM347,133h5v1h-5zM462,133h5v1h-5zM347,680h5v1h-5zM462,680h5v1h-5zM352,132h5v1h-5zM457,132h5v1h-5zM352,681h5v1h-5zM457,681h5v1h-5zM357,131h6v1h-6zM451,131h6v1h-6zM357,682h6v1h-6zM451,682h6v1h-6zM363,130h7v1h-7zM444,130h7v1h-7zM363,683h7v1h-7zM444,683h7v1h-7zM370,129h8v1h-8zM436,129h8v1h-8zM370,684h8v1h-8zM436,684h8v1h-8zM378,128h12v1h-12zM424,128h12v1h-12zM378,685h12v1h-12zM424,685h12v1h-12zM390,127h34v1h-34zM390,686h34v1h-34zM209,209h1v1h-1zM209,604h1v1h-1zM604,209h1v1h-1zM604,604h1v1h-1zM208,210h1v1h-1zM208,603h1v1h-1zM605,210h1v1h-1zM605,603h1v1h-1zM207,211h1v1h-1zM207,602h1v1h-1zM606,211h1v1h-1zM606,602h1v1h-1zM206,212h1v1h-1zM206,601h1v1h-1zM607,212h1v1h-1zM607,601h1v1h-1zM205,213h1v1h-1zM205,600h1v1h-1zM608,213h1v1h-1zM608,600h1v1h-1zM204,214h1v1h-1zM204,599h1v1h-1zM609,214h1v1h-1zM609,599h1v1h-1zM203,215h1v1h-1zM203,598h1v1h-1zM610,215h1v1h-1zM610,598h1v1h-1zM202,216h1v1h-1zM202,597h1v1h-1zM611,216h1v1h-1zM611,597h1v1h-1zM201,217h1v1h-1zM201,596h1v1h-1zM612,217h1v1h-1zM612,596h1v1h-1zM200,218h1v1h-1zM200,595h1v1h-1zM613,218h1v1h-1zM613,595h1v1h-1zM199,219h1v1h-1zM199,594h1v1h-1zM614,219h1v1h-1zM614,594h1v1h-1zM198,220h1v1h-1zM198,593h1v1h-1zM615,220h1v1h-1zM615,593h1v1h-1zM197,221h1v2h-1zM197,591h1v2h-1zM616,221h1v2h-1zM616,591h1v2h-1zM196,223h1v1h-1zM196,590h1v1h-1zM617,223h1v1h-1zM617,590h1v1h-1zM195,224h1v1h-1zM195,589h1v1h-1zM618,224h1v1h-1zM618,589h1v1h-1zM194,225h1v1h-1zM194,588h1v1h-1zM619,225h1v1h-1zM619,588h1v1h-1zM193,226h1v1h-1zM193,587h1v1h-1zM620,226h1v1h-1zM620,587h1v1h-1zM192,227h1v1h-1zM192,586h1v1h-1zM621,227h1v1h-1zM621,586h1v1h-1zM191,228h1v2h-1zM191,584h1v2h-1zM622,228h1v2h-1zM622,584h1v2h-1zM190,230h1v1h-1zM190,583h1v1h-1zM623,230h1v1h-1zM623,583h1v1h-1zM189,231h1v1h-1zM189,582h1v1h-1zM624,231h1v1h-1zM624,582h1v1h-1zM188,232h1v1h-1zM188,581h1v1h-1zM625,232h1v1h-1zM625,581h1v1h-1zM187,233h1v2h-1zM187,579h1v2h-1zM626,233h1v2h-1zM626,579h1v2h-1zM186,235h1v1h-1zM186,578h1v1h-1zM627,235h1v1h-1zM627,578h1v1h-1zM185,236h1v1h-1zM185,577h1v1h-1zM628,236h1v1h-1zM628,577h1v1h-1zM184,237h1v2h-1zM184,575h1v2h-1zM629,237h1v2h-1zM629,575h1v2h-1zM183,239h1v1h-1zM183,574h1v1h-1zM630,239h1v1h-1zM630,574h1v1h-1zM182,240h1v1h-1zM182,573h1v1h-1zM631,240h1v1h-1zM631,573h1v1h-1zM181,241h1v2h-1zM181,571h1v2h-1zM632,241h1v2h-1zM632,571h1v2h-1zM180,243h1v1h-1zM180,570h1v1h-1zM633,243h1v1h-1zM633,570h1v1h-1zM179,244h1v1h-1zM179,569h1v1h-1zM634,244h1v1h-1zM634,569h1v1h-1zM178,245h1v2h-1zM178,567h1v2h-1zM635,245h1v2h-1zM635,567h1v2h-1zM177,247h1v1h-1zM177,566h1v1h-1zM636,247h1v1h-1zM636,566h1v1h-1zM176,248h1v2h-1zM176,564h1v2h-1zM637,248h1v2h-1zM637,564h1v2h-1zM175,250h1v1h-1zM175,563h1v1h-1zM638,250h1v1h-1zM638,563h1v1h-1zM174,251h1v2h-1zM174,561h1v2h-1zM639,251h1v2h-1zM639,561h1v2h-1zM173,253h1v1h-1zM173,560h1v1h-1zM640,253h1v1h-1zM640,560h1v1h-1zM172,254h1v2h-1zM172,558h1v2h-1zM641,254h1v2h-1zM641,558h1v2h-1zM171,256h1v1h-1zM171,557h1v1h-1zM642,256h1v1h-1zM642,557h1v1h-1zM170,257h1v2h-1zM170,555h1v2h-1zM643,257h1v2h-1zM643,555h1v2h-1zM169,259h1v1h-1zM169,554h1v1h-1zM644,259h1v1h-1zM644,554h1v1h-1zM168,260h1v2h-1zM168,552h1v2h-1zM645,260h1v2h-1zM645,552h1v2h-1zM167,262h1v2h-1zM167,550h1v2h-1zM646,262h1v2h-1zM646,550h1v2h-1zM166,264h1v1h-1zM166,549h1v1h-1zM647,264h1v1h-1zM647,549h1v1h-1zM165,265h1v2h-1zM165,547h1v2h-1zM648,265h1v2h-1zM648,547h1v2h-1zM164,267h1v2h-1zM164,545h1v2h-1zM649,267h1v2h-1zM649,545h1v2h-1zM163,269h1v2h-1zM163,543h1v2h-1zM650,269h1v2h-1zM650,543h1v2h-1zM162,271h1v1h-1zM162,542h1v1h-1zM651,271h1v1h-1zM651,542h1v1h-1zM161,272h1v2h-1zM161,540h1v2h-1zM652,272h1v2h-1zM652,540h1v2h-1zM160,274h1v2h-1zM160,538h1v2h-1zM653,274h1v2h-1zM653,538h1v2h-1zM159,276h1v2h-1zM159,536h1v2h-1zM654,276h1v2h-1zM654,536h1v2h-1zM158,278h1v2h-1zM158,534h1v2h-1zM655,278h1v2h-1zM655,534h1v2h-1zM157,280h1v2h-1zM157,532h1v2h-1zM656,280h1v2h-1zM656,532h1v2h-1zM156,282h1v2h-1zM156,530h1v2h-1zM657,282h1v2h-1zM657,530h1v2h-1zM155,284h1v2h-1zM155,528h1v2h-1zM658,284h1v2h-1zM658,528h1v2h-1zM154,286h1v2h-1zM154,526h1v2h-1zM659,286h1v2h-1zM659,526h1v2h-1zM153,288h1v2h-1zM153,524h1v2h-1zM660,288h1v2h-1zM660,524h1v2h-1zM152,290h1v3h-1zM152,521h1v3h-1zM661,290h1v3h-1zM661,521h1v3h-1zM151,293h1v2h-1zM151,519h1v2h-1zM662,293h1v2h-1zM662,519h1v2h-1zM150,295h1v2h-1zM150,517h1v2h-1zM663,295h1v2h-1zM663,517h1v2h-1zM149,297h1v3h-1zM149,514h1v3h-1zM664,297h1v2h-1zM664,515h1v2h-1zM665,299h1v3h-1zM665,512h1v3h-1zM148,300h1v2h-1zM148,512h1v2h-1zM147,302h1v2h-1zM147,510h1v2h-1zM666,302h1v2h-1zM666,510h1v2h-1zM146,304h1v3h-1zM146,507h1v3h-1zM667,304h1v3h-1zM667,507h1v3h-1zM145,307h1v3h-1zM145,504h1v3h-1zM668,307h1v3h-1zM668,504h1v3h-1zM144,310h1v2h-1zM144,502h1v2h-1zM669,310h1v2h-1zM669,502h1v2h-1zM143,312h1v3h-1zM143,499h1v3h-1zM670,312h1v3h-1zM670,499h1v3h-1zM142,315h1v3h-1zM142,496h1v3h-1zM671,315h1v3h-1zM671,496h1v3h-1zM141,318h1v3h-1zM141,493h1v3h-1zM672,318h1v3h-1zM672,493h1v3h-1zM140,321h1v3h-1zM140,490h1v3h-1zM673,321h1v3h-1zM673,490h1v3h-1zM139,324h1v4h-1zM139,486h1v4h-1zM674,324h1v4h-1zM674,486h1v4h-1zM138,328h1v3h-1zM138,483h1v3h-1zM675,328h1v3h-1zM675,483h1v3h-1zM137,331h1v4h-1zM137,479h1v4h-1zM676,331h1v4h-1zM676,479h1v4h-1zM136,335h1v4h-1zM136,475h1v4h-1zM677,335h1v4h-1zM677,475h1v4h-1zM135,339h1v4h-1zM135,471h1v4h-1zM678,339h1v4h-1zM678,471h1v4h-1zM134,343h1v4h-1zM134,467h1v4h-1zM679,343h1v4h-1zM679,467h1v4h-1zM133,347h1v5h-1zM133,462h1v5h-1zM680,347h1v5h-1zM680,462h1v5h-1zM132,352h1v5h-1zM132,457h1v5h-1zM681,352h1v5h-1zM681,457h1v5h-1zM131,357h1v6h-1zM131,451h1v6h-1zM682,357h1v6h-1zM682,451h1v6h-1zM130,363h1v7h-1zM130,444h1v7h-1zM683,363h1v7h-1zM683,444h1v7h-1zM129,370h1v8h-1zM129,436h1v8h-1zM684,370h1v8h-1zM684,436h1v8h-1zM128,378h1v12h-1zM128,424h1v12h-1zM685,378h1v12h-1zM685,424h1v12h-1zM127,390h1v34h-1zM686,390h1v34h-1z"/>
<path d="M124,124h1v1h-1zM689,124h1v1h-1zM124,689h1v1h-1zM689,689h1v1h-1zM125,123h1v1h-1zM688,123h1v1h-1zM125,690h1v1h-1zM688,690h1v1h-1zM126,122h1v1h-1zM687,122h1v1h-1zM126,691h1v1h-1zM687,691h1v1h-1zM127,121h1v1h-1zM686,121h1v1h-1zM127,692h1v1h-1zM686,692h1v1h-1zM128,120h1v1h-1zM685,120h1v1h-1zM128,693h1v1h-1zM685,693h1v1h-1zM129,119h1v1h-1zM684,119h1v1h-1zM129,694h1v1h-1zM684,694h1v1h-1zM130,118h1v1h-1zM683,118h1v1h-1zM130,695h1v1h-1zM683,695h1v1h-1zM131,117h1v1h-1zM682,117h1v1h-1zM131,696h1v1h-1zM682,696h1v1h-1zM132,116h1v1h-1zM681,116h1v1h-1zM132,697h1v1h-1zM681,697h1v1h-1zM133,115h1v1h-1zM680,115h1v1h-1zM133,698h1v1h-1zM680,698h1v1h-1zM134,114h1v1h-1zM679,114h1v1h-1zM134,699h1v1h-1zM679,699h1v1h-1zM135,113h2v1h-2zM677,113h2v1h-2zM135,700h2v1h-2zM677,700h2v1h-2zM137,112h1v1h-1zM676,112h1v1h-1zM137,701h1v1h-1zM676,701h1v1h-1zM138,111h1v1h-1zM675,111h1v1h-1zM138,702h1v1h-1zM675,702h1v1h-1zM139,110h1v1h-1zM674,110h1v1h-1zM139,703h1v1h-1zM674,703h1v1h-1zM140,109h1v1h-1zM673,109h1v1h-1zM140,704h1v1h-1zM673,704h1v1h-1zM141,108h1v1h-1zM672,108h1v1h-1zM141,705h1v1h-1zM672,705h1v1h-1zM142,107h1v1h-1zM671,107h1v1h-1zM142,706h1v1h-1zM671,706h1v1h-1zM143,106h1v1h-1zM670,106h1v1h-1zM143,707h1v1h-1zM670,707h1v1h-1zM144,105h1v1h-1zM669,105h1v1h-1zM144,708h1v1h-1zM669,708h1v1h-1zM145,104h2v1h-2zM667,104h2v1h-2zM145,709h2v1h-2zM667,709h2v1h-2zM147,103h1v1h-1zM666,103h1v1h-1zM147,710h1v1h-1zM666,710h1v1h-1zM148,102h1v1h-1zM665,102h1v1h-1zM148,711h1v1h-1zM665,711h1v1h-1zM149,101h1v1h-1zM664,101h1v1h-1zM149,712h1v1h-1zM664,712h1v1h-1zM150,100h1v1h-1zM663,100h1v1h-1zM150,713h1v1h-1zM663,713h1v1h-1zM151,99h2v1h-2zM661,99h2v1h-2zM151,714h2v1h-2zM661,714h2v1h-2zM153,98h1v1h-1zM660,98h1v1h-1zM153,715h1v1h-1zM660,715h1v1h-1zM154,97h1v1h-1zM659,97h1v1h-1zM154,716h1v1h-1zM659,716h1v1h-1zM155,96h1v1h-1zM658,96h1v1h-1zM155,717h1v1h-1zM658,717h1v1h-1zM156,95h1v1h-1zM657,95h1v1h-1zM156,718h1v1h-1zM657,718h1v1h-1zM157,94h2v1h-2zM655,94h2v1h-2zM157,719h2v1h-2zM655,719h2v1h-2zM159,93h1v1h-1zM654,93h1v1h-1zM159,720h1v1h-1zM654,720h1v1h-1zM160,92h1v1h-1zM653,92h1v1h-1zM160,721h1v1h-1zM653,721h1v1h-1zM161,91h2v1h-2zM651,91h2v1h-2zM161,722h2v1h-2zM651,722h2v1h-2zM163,90h1v1h-1zM650,90h1v1h-1zM163,723h1v1h-1zM650,723h1v1h-1zM164,89h1v1h-1zM649,89h1v1h-1zM164,724h1v1h-1zM649,724h1v1h-1zM165,88h2v1h-2zM647,88h2v1h-2zM165,725h2v1h-2zM647,725h2v1h-2zM167,87h1v1h-1zM646,87h1v1h-1zM167,726h1v1h-1zM646,726h1v1h-1zM168,86h1v1h-1zM645,86h1v1h-1zM168,727h1v1h-1zM645,727h1v1h-1zM169,85h2v1h-2zM643,85h2v1h-2zM169,728h2v1h-2zM643,728h2v1h-2zM171,84h1v1h-1zM642,84h1v1h-1zM171,729h1v1h-1zM642,729h1v1h-1zM172,83h1v1h-1zM641,83h1v1h-1zM172,730h1v1h-1zM641,730h1v1h-1zM173,82h2v1h-2zM639,82h2v1h-2zM173,731h2v1h-2zM639,731h2v1h-2zM175,81h1v1h-1zM638,81h1v1h-1zM175,732h1v1h-1zM638,732h1v1h-1zM176,80h1v1h-1zM637,80h1v1h-1zM176,733h1v1h-1zM637,733h1v1h-1zM177,79h2v1h-2zM635,79h2v1h-2zM177,734h2v1h-2zM635,734h2v1h-2zM179,78h1v1h-1zM634,78h1v1h-1zM179,735h1v1h-1zM634,735h1v1h-1zM180,77h2v1h-2zM632,77h2v1h-2zM180,736h2v1h-2zM632,736h2v1h-2zM182,76h1v1h-1zM631,76h1v1h-1zM182,737h1v1h-1zM631,737h1v1h-1zM183,75h2v1h-2zM629,75h2v1h-2zM183,738h2v1h-2zM629,738h2v1h-2zM185,74h1v1h-1zM628,74h1v1h-1zM185,739h1v1h-1zM628,739h1v1h-1zM186,73h2v1h-2zM626,73h2v1h-2zM186,740h2v1h-2zM626,740h2v1h-2zM188,72h1v1h-1zM625,72h1v1h-1zM188,741h1v1h-1zM625,741h1v1h-1zM189,71h2v1h-2zM623,71h2v1h-2zM189,742h2v1h-2zM623,742h2v1h-2zM191,70h1v1h-1zM622,70h1v1h-1zM191,743h1v1h-1zM622,743h1v1h-1zM192,69h2v1h-2zM620,69h2v1h-2zM192,744h2v1h-2zM620,744h2v1h-2zM194,68h2v1h-2zM618,68h2v1h-2zM194,745h2v1h-2zM618,745h2v1h-2zM196,67h1v1h-1zM617,67h1v1h-1zM196,746h1v1h-1zM617,746h1v1h-1zM197,66h2v1h-2zM615,66h2v1h-2zM197,747h2v1h-2zM615,747h2v1h-2zM199,65h2v1h-2zM613,65h2v1h-2zM199,748h2v1h-2zM613,748h2v1h-2zM201,64h1v1h-1zM612,64h1v1h-1zM201,749h1v1h-1zM612,749h1v1h-1zM202,63h2v1h-2zM610,63h2v1h-2zM202,750h2v1h-2zM610,750h2v1h-2zM204,62h2v1h-2zM608,62h2v1h-2zM204,751h2v1h-2zM608,751h2v1h-2zM206,61h1v1h-1zM607,61h1v1h-1zM206,752h1v1h-1zM607,752h1v1h-1zM207,60h2v1h-2zM605,60h2v1h-2zM207,753h2v1h-2zM605,753h2v1h-2zM209,59h2v1h-2zM603,59h2v1h-2zM209,754h2v1h-2zM603,754h2v1h-2zM211,58h2v1h-2zM601,58h2v1h-2zM211,755h2v1h-2zM601,755h2v1h-2zM213,57h1v1h-1zM600,57h1v1h-1zM213,756h1v1h-1zM600,756h1v1h-1zM214,56h2v1h-2zM598,56h2v1h-2zM214,757h2v1h-2zM598,757h2v1h-2zM216,55h2v1h-2zM596,55h2v1h-2zM216,758h2v1h-2zM596,758h2v1h-2zM218,54h2v1h-2zM594,54h2v1h-2zM218,759h2v1h-2zM594,759h2v1h-2zM220,53h2v1h-2zM592,53h2v1h-2zM220,760h2v1h-2zM592,760h2v1h-2zM222,52h2v1h-2zM590,52h2v1h-2zM222,761h2v1h-2zM590,761h2v1h-2zM224,51h2v1h-2zM588,51h2v1h-2zM224,762h2v1h-2zM588,762h2v1h-2zM226,50h2v1h-2zM586,50h2v1h-2zM226,763h2v1h-2zM586,763h2v1h-2zM228,49h2v1h-2zM584,49h2v1h-2zM228,764h2v1h-2zM584,764h2v1h-2zM230,48h2v1h-2zM582,48h2v1h-2zM230,765h2v1h-2zM582,765h2v1h-2zM232,47h2v1h-2zM580,47h2v1h-2zM232,766h2v1h-2zM580,766h2v1h-2zM234,46h2v1h-2zM578,46h2v1h-2zM234,767h2v1h-2zM578,767h2v1h-2zM236,45h2v1h-2zM576,45h2v1h-2zM236,768h2v1h-2zM576,768h2v1h-2zM238,44h2v1h-2zM574,44h2v1h-2zM238,769h2v1h-2zM574,769h2v1h-2zM240,43h2v1h-2zM572,43h2v1h-2zM240,770h2v1h-2zM572,770h2v1h-2zM242,42h3v1h-3zM569,42h3v1h-3zM242,771h3v1h-3zM569,771h3v1h-3zM245,41h2v1h-2zM567,41h2v1h-2zM245,772h2v1h-2zM567,772h2v1h-2zM247,40h2v1h-2zM565,40h2v1h-2zM247,773h2v1h-2zM565,773h2v1h-2zM249,39h3v1h-3zM562,39h3v1h-3zM249,774h3v1h-3zM562,774h3v1h-3zM252,38h2v1h-2zM560,38h2v1h-2zM252,775h2v1h-2zM560,775h2v1h-2zM254,37h2v1h-2zM558,37h2v1h-2zM254,776h2v1h-2zM558,776h2v1h-2zM256,36h3v1h-3zM555,36h3v1h-3zM256,777h3v1h-3zM555,777h3v1h-3zM259,35h2v1h-2zM553,35h2v1h-2zM259,778h2v1h-2zM553,778h2v1h-2zM261,34h3v1h-3zM550,34h3v1h-3zM261,779h3v1h-3zM550,779h3v1h-3zM264,33h3v1h-3zM547,33h3v1h-3zM264,780h3v1h-3zM547,780h3v1h-3zM267,32h2v1h-2zM545,32h2v1h-2zM267,781h2v1h-2zM545,781h2v1h-2zM269,31h3v1h-3zM542,31h3v1h-3zM269,782h3v1h-3zM542,782h3v1h-3zM272,30h3v1h-3zM539,30h3v1h-3zM272,783h3v1h-3zM539,783h3v1h-3zM275,29h3v1h-3zM536,29h3v1h-3zM275,784h3v1h-3zM536,784h3v1h-3zM278,28h3v1h-3zM533,28h3v1h-3zM278,785h3v1h-3zM533,785h3v1h-3zM281,27h3v1h-3zM530,27h3v1h-3zM281,786h3v1h-3zM530,786h3v1h-3zM284,26h3v1h-3zM527,26h3v1h-3zM284,787h3v1h-3zM527,787h3v1h-3zM287,25h3v1h-3zM524,25h3v1h-3zM287,788h3v1h-3zM524,788h3v1h-3zM290,24h3v1h-3zM521,24h3v1h-3zM290,789h3v1h-3zM521,789h3v1h-3zM293,23h4v1h-4zM517,23h4v1h-4zM293,790h4v1h-4zM517,790h4v1h-4zM297,22h3v1h-3zM514,22h3v1h-3zM297,791h3v1h-3zM514,791h3v1h-3zM300,21h4v1h-4zM510,21h4v1h-4zM300,792h4v1h-4zM510,792h4v1h-4zM304,20h4v1h-4zM506,20h4v1h-4zM304,793h4v1h-4zM506,793h4v1h-4zM308,19h4v1h-4zM502,19h4v1h-4zM308,794h4v1h-4zM502,794h4v1h-4zM312,18h4v1h-4zM498,18h4v1h-4zM312,795h4v1h-4zM498,795h4v1h-4zM316,17h4v1h-4zM494,17h4v1h-4zM316,796h4v1h-4zM494,796h4v1h-4zM320,16h5v1h-5zM489,16h5v1h-5zM320,797h5v1h-5zM489,797h5v1h-5zM325,15h5v1h-5zM484,15h5v1h-5zM325,798h5v1h-5zM484,798h5v1h-5zM330,14h5v1h-5zM479,14h5v1h-5zM330,799h5v1h-5zM479,799h5v1h-5zM335,13h6v1h-6zM473,13h6v1h-6zM335,800h6v1h-6zM473,800h6v1h-6zM341,12h6v1h-6zM467,12h6v1h-6zM341,801h6v1h-6zM467,801h6v1h-6zM347,11h7v1h-7zM460,11h7v1h-7zM347,802h7v1h-7zM460,802h7v1h-7zM354,10h8v1h-8zM452,10h8v1h-8zM354,803h8v1h-8zM452,803h8v1h-8zM362,9h10v1h-10zM442,9h10v1h-10zM362,804h10v1h-10zM442,804h10v1h-10zM372,8h15v1h-15zM427,8h15v1h-15zM372,805h15v1h-15zM427,805h15v1h-15zM387,7h40v1h-40zM124,124h1v1h-1zM124,689h1v1h-1zM689,124h1v1h-1zM689,689h1v1h-1zM123,125h1v1h-1zM123,688h1v1h-1zM690,125h1v1h-1zM690,688h1v1h-1zM122,126h1v1h-1zM122,687h1v1h-1zM691,126h1v1h-1zM691,687h1v1h-1zM121,127h1v1h-1zM121,686h1v1h-1zM692,127h1v1h-1zM692,686h1v1h-1zM120,128h1v1h-1zM120,685h1v1h-1zM693,128h1v1h-1zM693,685h1v1h-1zM119,129h1v1h-1zM119,684h1v1h-1zM694,129h1v1h-1zM694,684h1v1h-1zM118,130h1v1h-1zM118,683h1v1h-1zM695,130h1v1h-1zM695,683h1v1h-1zM117,131h1v1h-1zM117,682h1v1h-1zM696,131h1v1h-1zM696,682h1v1h-1zM116,132h1v1h-1zM116,681h1v1h-1zM697,132h1v1h-1zM697,681h1v1h-1zM115,133h1v1h-1zM115,680h1v1h-1zM698,133h1v1h-1zM698,680h1v1h-1zM114,134h1v1h-1zM114,679h1v1h-1zM699,134h1v1h-1zM699,679h1v1h-1zM113,135h1v2h-1zM113,677h1v2h-1zM700,135h1v2h-1zM700,677h1v2h-1zM112,137h1v1h-1zM112,676h1v1h-1zM701,137h1v1h-1zM701,676h1v1h-1zM111,138h1v1h-1zM111,675h1v1h-1zM702,138h1v1h-1zM702,675h1v1h-1zM110,139h1v1h-1zM110,674h1v1h-1zM703,139h1v1h-1zM703,674h1v1h-1zM109,140h1v1h-1zM109,673h1v1h-1zM704,140h1v1h-1zM704,673h1v1h-1zM108,141h1v1h-1zM108,672h1v1h-1zM705,141h1v1h-1zM705,672h1v1h-1zM107,142h1v1h-1zM107,671h1v1h-1zM706,142h1v1h-1zM706,671h1v1h-1zM106,143h1v1h-1zM106,670h1v1h-1zM707,143h1v1h-1zM707,670h1v1h-1zM105,144h1v1h-1zM105,669h1v1h-1zM708,144h1v1h-1zM708,669h1v1h-1zM104,145h1v2h-1zM104,667h1v2h-1zM709,145h1v2h-1zM709,667h1v2h-1zM103,147h1v1h-1zM103,666h1v1h-1zM710,147h1v1h-1zM710,666h1v1h-1zM102,148h1v1h-1zM102,665h1v1h-1zM711,148h1v1h-1zM711,665h1v1h-1zM101,149h1v1h-1zM101,664h1v1h-1zM712,149h1v1h-1zM712,664h1v1h-1zM100,150h1v1h-1zM100,663h1v1h-1zM713,150h1v1h-1zM713,663h1v1h-1zM99,151h1v2h-1zM99,661h1v2h-1zM714,151h1v2h-1zM714,661h1v2h-1zM98,153h1v1h-1zM98,660h1v1h-1zM715,153h1v1h-1zM715,660h1v1h-1zM97,154h1v1h-1zM97,659h1v1h-1zM716,154h1v1h-1zM716,659h1v1h-1zM96,155h1v1h-1zM96,658h1v1h-1zM717,155h1v1h-1zM717,658h1v1h-1zM95,156h1v1h-1zM95,657h1v1h-1zM718,156h1v1h-1zM718,657h1v1h-1zM94,157h1v2h-1zM94,655h1v2h-1zM719,157h1v2h-1zM719,655h1v2h-1zM93,159h1v1h-1zM93,654h1v1h-1zM720,159h1v1h-1zM720,654h1v1h-1zM92,160h1v1h-1zM92,653h1v1h-1zM721,160h1v1h-1zM721,653h1v1h-1zM91,161h1v2h-1zM91,651h1v2h-1zM722,161h1v2h-1zM722,651h1v2h-1zM90,163h1v1h-1zM90,650h1v1h-1zM723,163h1v1h-1zM723,650h1v1h-1zM89,164h1v1h-1zM89,649h1v1h-1zM724,164h1v1h-1zM724,649h1v1h-1zM88,165h1v2h-1zM88,647h1v2h-1zM725,165h1v2h-1zM725,647h1v2h-1zM87,167h1v1h-1zM87,646h1v1h-1zM726,167h1v1h-1zM726,646h1v1h-1zM86,168h1v1h-1zM86,645h1v1h-1zM727,168h1v1h-1zM727,645h1v1h-1zM85,169h1v2h-1zM85,643h1v2h-1zM728,169h1v2h-1zM728,643h1v2h-1zM84,171h1v1h-1zM84,642h1v1h-1zM729,171h1v1h-1zM729,642h1v1h-1zM83,172h1v1h-1zM83,641h1v1h-1zM730,172h1v1h-1zM730,641h1v1h-1zM82,173h1v2h-1zM82,639h1v2h-1zM731,173h1v2h-1zM731,639h1v2h-1zM81,175h1v1h-1zM81,638h1v1h-1zM732,175h1v1h-1zM732,638h1v1h-1zM80,176h1v1h-1zM80,637h1v1h-1zM733,176h1v1h-1zM733,637h1v1h-1zM79,177h1v2h-1zM79,635h1v2h-1zM734,177h1v2h-1zM734,635h1v2h-1zM78,179h1v1h-1zM78,634h1v1h-1zM735,179h1v1h-1zM735,634h1v1h-1zM77,180h1v2h-1zM77,632h1v2h-1zM736,180h1v2h-1zM736,632h1v2h-1zM76,182h1v1h-1zM76,631h1v1h-1zM737,182h1v1h-1zM737,631h1v1h-1zM75,183h1v2h-1zM75,629h1v2h-1zM738,183h1v2h-1zM738,629h1v2h-1zM74,185h1v1h-1zM74,628h1v1h-1zM739,185h1v1h-1zM739,628h1v1h-1zM73,186h1v2h-1zM73,626h1v2h-1zM740,186h1v2h-1zM740,626h1v2h-1zM72,188h1v1h-1zM72,625h1v1h-1zM741,188h1v1h-1zM741,625h1v1h-1zM71,189h1v2h-1zM71,623h1v2h-1zM742,189h1v2h-1zM742,623h1v2h-1zM70,191h1v1h-1zM70,622h1v1h-1zM743,191h1v1h-1zM743,622h1v1h-1zM69,192h1v2h-1zM69,620h1v2h-1zM744,192h1v2h-1zM744,620h1v2h-1zM68,194h1v2h-1zM68,618h1v2h-1zM745,194h1v2h-1zM745,618h1v2h-1zM67,196h1v1h-1zM67,617h1v1h-1zM746,196h1v1h-1zM746,617h1v1h-1zM66,197h1v2h-1zM66,615h1v2h-1zM747,197h1v2h-1zM747,615h1v2h-1zM65,199h1v2h-1zM65,613h1v2h-1zM748,199h1v2h-1zM748,613h1v2h-1zM64,201h1v1h-1zM64,612h1v1h-1zM749,201h1v1h-1zM749,612h1v1h-1zM63,202h1v2h-1zM63,610h1v2h-1zM750,202h1v2h-1zM750,610h1v2h-1zM62,204h1v2h-1zM62,608h1v2h-1zM751,204h1v2h-1zM751,608h1v2h-1zM61,206h1v1h-1zM61,607h1v1h-1zM752,206h1v1h-1zM752,607h1v1h-1zM60,207h1v2h-1zM60,605h1v2h-1zM753,207h1v2h-1zM753,605h1v2h-1zM59,209h1v2h-1zM59,603h1v2h-1zM754,209h1v2h-1zM754,603h1v2h-1zM58,211h1v2h-1zM58,601h1v2h-1zM755,211h1v2h-1zM755,601h1v2h-1zM57,213h1v1h-1zM57,600h1v1h-1zM756,213h1v1h-1zM756,600h1v1h-1zM56,214h1v2h-1zM56,598h1v2h-1zM757,214h1v2h-1zM757,598h1v2h-1zM55,216h1v2h-1zM55,596h1v2h-1zM758,216h1v2h-1zM758,596h1v2h-1zM54,218h1v2h-1zM54,594h1v2h-1zM759,218h1v2h-1zM759,594h1v2h-1zM53,220h1v2h-1zM53,592h1v2h-1zM760,220h1v2h-1zM760,592h1v2h-1zM52,222h1v2h-1zM52,590h1v2h-1zM761,222h1v2h-1zM761,590h1v2h-1zM51,224h1v2h-1zM51,588h1v2h-1zM762,224h1v2h-1zM762,588h1v2h-1zM50,226h1v2h-1zM50,586h1v2h-1zM763,226h1v2h-1zM763,586h1v2h-1zM49,228h1v2h-1zM49,584h1v2h-1zM764,228h1v2h-1zM764,584h1v2h-1zM48,230h1v2h-1zM48,582h1v2h-1zM765,230h1v2h-1zM765,582h1v2h-1zM47,232h1v2h-1zM47,580h1v2h-1zM766,232h1v2h-1zM766,580h1v2h-1zM46,234h1v2h-1zM46,578h1v2h-1zM767,234h1v2h-1zM767,578h1v2h-1zM45,236h1v2h-1zM45,576h1v2h-1zM768,236h1v2h-1zM768,576h1v2h-1zM44,238h1v2h-1zM44,574h1v2h-1zM769,238h1v2h-1zM769,574h1v2h-1zM43,240h1v2h-1zM43,572h1v2h-1zM770,240h1v2h-1zM770,572h1v2h-1zM42,242h1v3h-1zM42,569h1v3h-1zM771,242h1v3h-1zM771,569h1v3h-1zM41,245h1v2h-1zM41,567h1v2h-1zM772,245h1v2h-1zM772,567h1v2h-1zM40,247h1v2h-1zM40,565h1v2h-1zM773,247h1v2h-1zM773,565h1v2h-1zM39,249h1v3h-1zM39,562h1v3h-1zM774,249h1v3h-1zM774,562h1v3h-1zM38,252h1v2h-1zM38,560h1v2h-1zM775,252h1v2h-1zM775,560h1v2h-1zM37,254h1v2h-1zM37,558h1v2h-1zM776,254h1v2h-1zM776,558h1v2h-1zM36,256h1v3h-1zM36,555h1v3h-1zM777,256h1v3h-1zM777,555h1v3h-1zM35,259h1v2h-1zM35,553h1v2h-1zM778,259h1v2h-1zM778,553h1v2h-1zM34,261h1v3h-1zM34,550h1v3h-1zM779,261h1v3h-1zM779,550h1v3h-1zM33,264h1v3h-1zM33,547h1v3h-1zM780,264h1v3h-1zM780,547h1v3h-1zM32,267h1v2h-1zM32,545h1v2h-1zM781,267h1v2h-1zM781,545h1v2h-1zM31,269h1v3h-1zM31,542h1v3h-1zM782,269h1v3h-1zM782,542h1v3h-1zM30,272h1v3h-1zM30,539h1v3h-1zM783,272h1v3h-1zM783,539h1v3h-1zM29,275h1v3h-1zM29,536h1v3h-1zM784,275h1v3h-1zM784,536h1v3h-1zM28,278h1v3h-1zM28,533h1v3h-1zM785,278h1v3h-1zM785,533h1v3h-1zM27,281h1v3h-1zM27,530h1v3h-1zM786,281h1v3h-1zM786,530h1v3h-1zM26,284h1v3h-1zM26,527h1v3h-1zM787,284h1v3h-1zM787,527h1v3h-1zM25,287h1v3h-1zM25,524h1v3h-1zM788,287h1v3h-1zM788,524h1v3h-1zM24,290h1v3h-1zM24,521h1v3h-1zM789,290h1v3h-1zM789,521h1v3h-1zM23,293h1v4h-1zM23,517h1v4h-1zM790,293h1v4h-1zM790,517h1v4h-1zM22,297h1v3h-1zM22,514h1v3h-1zM791,297h1v3h-1zM791,514h1v3h-1zM21,300h1v4h-1zM21,510h1v4h-1zM792,300h1v4h-1zM792,510h1v4h-1zM20,304h1v4h-1zM20,506h1v4h-1zM793,304h1v4h-1zM793,506h1v4h-1zM19,308h1v4h-1zM19,502h1v4h-1zM794,308h1v4h-1zM794,502h1v4h-1zM18,312h1v4h-1zM18,498h1v4h-1zM795,312h1v4h-1zM795,498h1v4h-1zM17,316h1v4h-1zM17,494h1v4h-1zM796,316h1v4h-1zM796,494h1v4h-1zM16,320h1v5h-1zM16,489h1v5h-1zM797,320h1v5h-1zM797,489h1v5h-1zM15,325h1v5h-1zM15,484h1v5h-1zM798,325h1v5h-1zM798,484h1v5h-1zM14,330h1v5h-1zM14,479h1v5h-1zM799,330h1v5h-1zM799,479h1v5h-1zM13,335h1v6h-1zM13,473h1v6h-1zM800,335h1v6h-1zM800,473h1v6h-1zM12,341h1v6h-1zM12,467h1v6h-1zM801,341h1v6h-1zM801,467h1v6h-1zM11,347h1v7h-1zM11,460h1v7h-1zM802,347h1v7h-1zM802,460h1v7h-1zM10,354h1v8h-1zM10,452h1v8h-1zM803,354h1v8h-1zM803,452h1v8h-1zM9,362h1v10h-1zM9,442h1v10h-1zM804,362h1v10h-1zM804,442h1v10h-1zM8,372h1v15h-1zM8,427h1v15h-1zM805,372h1v15h-1zM805,427h1v15h-1zM7,387h1v40h-1z"/>
<path d="M39,39h1v1h-1zM774,39h1v1h-1zM39,774h1v1h-1zM774,774h1v1h-1zM40,38h1v1h-1zM773,38h1v1h-1zM40,775h1v1h-1zM773,775h1v1h-1zM41,37h1v1h-1zM772,37h1v1h-1zM41,776h1v1h-1zM772,776h1v1h-1zM42,36h1v1h-1zM771,36h1v1h-1zM42,777h1v1h-1zM771,777h1v1h-1zM43,35h1v1h-1zM770,35h1v1h-1zM43,778h1v1h-1zM770,778h1v1h-1zM44,34h1v1h-1zM769,34h1v1h-1zM44,779h1v1h-1zM769,779h1v1h-1zM45,33h1v1h-1zM768,33h1v1h-1zM45,780h1v1h-1zM768,780h1v1h-1zM46,32h1v1h-1zM767,32h1v1h-1zM46,781h1v1h-1zM767,781h1v1h-1zM47,31h2v1h-2zM765,31h2v1h-2zM47,782h2v1h-2zM765,782h2v1h-2zM49,30h1v1h-1zM764,30h1v1h-1zM49,783h1v1h-1zM764,783h1v1h-1zM50,29h1v1h-1zM763,29h1v1h-1zM50,784h1v1h-1zM763,784h1v1h-1zM51,28h1v1h-1zM762,28h1v1h-1zM51,785h1v1h-1zM762,785h1v1h-1zM52,27h1v1h-1zM761,27h1v1h-1zM52,786h1v1h-1zM761,786h1v1h-1zM53,26h1v1h-1zM760,26h1v1h-1zM53,787h1v1h-1zM760,787h1v1h-1zM54,25h1v1h-1zM759,25h1v1h-1zM54,788h1v1h-1zM759,788h1v1h-1zM55,24h1v1h-1zM758,24h1v1h-1zM55,789h1v1h-1zM758,789h1v1h-1zM56,23h1v1h-1zM757,23h1v1h-1zM56,790h1v1h-1zM757,790h1v1h-1zM57,22h1v1h-1zM756,22h1v1h-1zM57,791h1v1h-1zM756,791h1v1h-1zM58,21h1v1h-1zM755,21h1v1h-1zM58,792h1v1h-1zM755,792h1v1h-1zM59,20h1v1h-1zM754,20h1v1h-1zM59,793h1v1h-1zM754,793h1v1h-1zM60,19h2v1h-2zM752,19h2v1h-2zM60,794h2v1h-2zM752,794h2v1h-2zM62,18h1v1h-1zM751,18h1v1h-1zM62,795h1v1h-1zM751,795h1v1h-1zM63,17h1v1h-1zM750,17h1v1h-1zM63,796h1v1h-1zM750,796h1v1h-1zM64,16h1v1h-1zM749,16h1v1h-1zM64,797h1v1h-1zM749,797h1v1h-1zM65,15h1v1h-1zM748,15h1v1h-1zM65,798h1v1h-1zM748,798h1v1h-1zM66,14h1v1h-1zM747,14h1v1h-1zM66,799h1v1h-1zM747,799h1v1h-1zM67,13h1v1h-1zM746,13h1v1h-1zM67,800h1v1h-1zM746,800h1v1h-1zM68,12h2v1h-2zM744,12h2v1h-2zM68,801h2v1h-2zM744,801h2v1h-2zM70,11h1v1h-1zM743,11h1v1h-1zM70,802h1v1h-1zM743,802h1v1h-1zM71,10h1v1h-1zM742,10h1v1h-1zM71,803h1v1h-1zM742,803h1v1h-1zM72,9h1v1h-1zM741,9h1v1h-1zM72,804h1v1h-1zM741,804h1v1h-1zM73,8h1v1h-1zM740,8h1v1h-1zM73,805h1v1h-1zM740,805h1v1h-1zM74,7h2v1h-2zM738,7h2v1h-2zM76,6h1v1h-1zM737,6h1v1h-1zM39,39h1v1h-1zM39,774h1v1h-1zM774,39h1v1h-1zM774,774h1v1h-1zM38,40h1v1h-1zM38,773h1v1h-1zM775,40h1v1h-1zM775,773h1v1h-1zM37,41h1v1h-1zM37,772h1v1h-1zM776,41h1v1h-1zM776,772h1v1h-1zM36,42h1v1h-1zM36,771h1v1h-1zM777,42h1v1h-1zM777,771h1v1h-1zM35,43h1v1h-1zM35,770h1v1h-1zM778,43h1v1h-1zM778,770h1v1h-1zM34,44h1v1h-1zM34,769h1v1h-1zM779,44h1v1h-1zM779,769h1v1h-1zM33,45h1v1h-1zM33,768h1v1h-1zM780,45h1v1h-1zM780,768h1v1h-1zM32,46h1v1h-1zM32,767h1v1h-1zM781,46h1v1h-1zM781,767h1v1h-1zM31,47h1v2h-1zM31,765h1v2h-1zM782,47h1v2h-1zM782,765h1v2h-1zM30,49h1v1h-1zM30,764h1v1h-1zM783,49h1v1h-1zM783,764h1v1h-1zM29,50h1v1h-1zM29,763h1v1h-1zM784,50h1v1h-1zM784,763h1v1h-1zM28,51h1v1h-1zM28,762h1v1h-1zM785,51h1v1h-1zM785,762h1v1h-1zM27,52h1v1h-1zM27,761h1v1h-1zM786,52h1v1h-1zM786,761h1v1h-1zM26,53h1v1h-1zM26,760h1v1h-1zM787,53h1v1h-1zM787,760h1v1h-1zM25,54h1v1h-1zM25,759h1v1h-1zM788,54h1v1h-1zM788,759h1v1h-1zM24,55h1v1h-1zM24,758h1v1h-1zM789,55h1v1h-1zM789,758h1v1h-1zM23,56h1v1h-1zM23,757h1v1h-1zM790,56h1v1h-1zM790,757h1v1h-1zM22,57h1v1h-1zM22,756h1v1h-1zM791,57h1v1h-1zM791,756h1v1h-1zM21,58h1v1h-1zM21,755h1v1h-1zM792,58h1v1h-1zM792,755h1v1h-1zM20,59h1v1h-1zM20,754h1v1h-1zM793,59h1v1h-1zM793,754h1v1h-1zM19,60h1v2h-1zM19,752h1v2h-1zM794,60h1v2h-1zM794,752h1v2h-1zM18,62h1v1h-1zM18,751h1v1h-1zM795,62h1v1h-1zM795,751h1v1h-1zM17,63h1v1h-1zM17,750h1v1h-1zM796,63h1v1h-1zM796,750h1v1h-1zM16,64h1v1h-1zM16,749h1v1h-1zM797,64h1v1h-1zM797,749h1v1h-1zM15,65h1v1h-1zM15,748h1v1h-1zM798,65h1v1h-1zM798,748h1v1h-1zM14,66h1v1h-1zM14,747h1v1h-1zM799,66h1v1h-1zM799,747h1v1h-1zM13,67h1v1h-1zM13,746h1v1h-1zM800,67h1v1h-1zM800,746h1v1h-1zM12,68h1v2h-1zM12,744h1v2h-1zM801,68h1v2h-1zM801,744h1v2h-1zM11,70h1v1h-1zM11,743h1v1h-1zM802,70h1v1h-1zM802,743h1v1h-1zM10,71h1v1h-1zM10,742h1v1h-1zM803,71h1v1h-1zM803,742h1v1h-1zM9,72h1v1h-1zM9,741h1v1h-1zM804,72h1v1h-1zM804,741h1v1h-1zM8,73h1v1h-1zM8,740h1v1h-1zM805,73h1v1h-1zM805,740h1v1h-1zM7,74h1v2h-1zM7,738h1v2h-1zM6,76h1v1h-1zM6,737h1v1h-1z"/>
</g>
<text x="395.0" y="11.1" font-size="10" fill="#f8f4a0" textLength="21" lengthAdjust="spacingAndGlyphs">313</text>
<text x="395.2" y="131.1" font-size="10" fill="#f8f4a0" textLength="20.5" lengthAdjust="spacingAndGlyphs">219</text>
<text x="395.2" y="251.1" font-size="10" fill="#f8f4a0" textLength="20.5" lengthAdjust="spacingAndGlyphs">125</text>
<text x="399.5" y="371.1" font-size="10" fill="#f8f4a0" textLength="13" lengthAdjust="spacingAndGlyphs">31</text>
<path fill="#f00000" d="M379,378h1v1h-1zM434,378h1v1h-1zM379,435h1v1h-1zM434,435h1v1h-1zM380,377h1v1h-1zM433,377h1v1h-1zM380,436h1v1h-1zM433,436h1v1h-1zM381,376h2v1h-2zM431,376h2v1h-2zM381,437h2v1h-2zM431,437h2v1h-2zM383,375h1v1h-1zM430,375h1v1h-1zM383,438h1v1h-1zM430,438h1v1h-1zM384,374h1v1h-1zM429,374h1v1h-1zM384,439h1v1h-1zM429,439h1v1h-1zM385,373h2v1h-2zM427,373h2v1h-2zM385,440h2v1h-2zM427,440h2v1h-2zM387,372h2v1h-2zM425,372h2v1h-2zM387,441h2v1h-2zM425,441h2v1h-2zM389,371h2v1h-2zM423,371h2v1h-2zM389,442h2v1h-2zM423,442h2v1h-2zM391,370h2v1h-2zM421,370h2v1h-2zM391,443h2v1h-2zM421,443h2v1h-2zM393,369h3v1h-3zM418,369h3v1h-3zM393,444h3v1h-3zM418,444h3v1h-3zM396,368h5v1h-5zM413,368h5v1h-5zM396,445h5v1h-5zM413,445h5v1h-5zM401,367h12v1h-12zM401,446h12v1h-12zM378,379h1v1h-1zM378,434h1v1h-1zM435,379h1v1h-1zM435,434h1v1h-1zM377,380h1v1h-1zM377,433h1v1h-1zM436,380h1v1h-1zM436,433h1v1h-1zM376,381h1v2h-1zM376,431h1v2h-1zM437,381h1v2h-1zM437,431h1v2h-1zM375,383h1v1h-1zM375,430h1v1h-1zM438,383h1v1h-1zM438,430h1v1h-1zM374,384h1v1h-1zM374,429h1v1h-1zM439,384h1v1h-1zM439,429h1v1h-1zM373,385h1v2h-1zM373,427h1v2h-1zM440,385h1v2h-1zM440,427h1v2h-1zM372,387h1v2h-1zM372,425h1v2h-1zM441,387h1v2h-1zM441,425h1v2h-1zM371,389h1v2h-1zM371,423h1v2h-1zM442,389h1v2h-1zM442,423h1v2h-1zM370,391h1v2h-1zM370,421h1v2h-1zM443,391h1v2h-1zM443,421h1v2h-1zM369,393h1v3h-1zM369,418h1v3h-1zM444,393h1v3h-1zM444,418h1v3h-1zM368,396h1v5h-1zM368,413h1v5h-1zM445,396h1v5h-1zM445,413h1v5h-1zM367,401h1v12h-1zM446,401h1v12h-1z"/>
<g fill="none" shape-rendering="auto"><circle cx="763.5" cy="314.5" r="5.2" stroke="#3a3450" stroke-width="1" opacity="0.5"/><circle cx="763.5" cy="314.5" r="4.1" stroke="#f0f000" stroke-width="1.5"/><path stroke="#f0f000" stroke-width="1.5" d="M760.8,314.5H766.2M763.5,311.8V317.2"/></g>
<g fill="none" shape-rendering="auto"><circle cx="767.5" cy="344.5" r="5.2" stroke="#3a3450" stroke-width="1" opacity="0.5"/><circle cx="767.5" cy="344.5" r="4.1" stroke="#f0f000" stroke-width="1.5"/><path stroke="#f0f000" stroke-width="1.5" d="M764.8,344.5H770.2"/></g>
<g fill="none" shape-rendering="auto"><circle cx="799.5" cy="232.5" r="5.2" stroke="#3a3450" stroke-width="1" opacity="0.5"/><circle cx="799.5" cy="232.5" r="4.1" stroke="#e87818" stroke-width="1.5"/><path stroke="#e87818" stroke-width="1.5" d="M796.8,232.5H802.2M799.5,229.8V235.2"/></g>
<g fill="none" shape-rendering="auto"><circle cx="557.5" cy="577.5" r="5.2" stroke="#3a3450" stroke-width="1" opacity="0.5"/><circle cx="557.5" cy="577.5" r="4.1" stroke="#f0a000" stroke-width="1.5"/><path stroke="#f0a000" stroke-width="1.5" d="M554.8,577.5H560.2M557.5,574.8V580.2"/></g>
<g fill="none" shape-rendering="auto"><circle cx="686.5" cy="567.5" r="5.2" stroke="#3a3450" stroke-width="1" opacity="0.5"/><circle cx="686.5" cy="567.5" r="4.1" stroke="#f0f000" stroke-width="1.5"/><path stroke="#f0f000" stroke-width="1.5" d="M683.8,567.5H689.2M686.5,564.8V570.2"/></g>
<g fill="none" shape-rendering="auto"><circle cx="677.5" cy="577.5" r="5.2" stroke="#3a3450" stroke-width="1" opacity="0.5"/><circle cx="677.5" cy="577.5" r="4.1" stroke="#f0f000" stroke-width="1.5"/><path stroke="#f0f000" stroke-width="1.5" d="M674.8,577.5H680.2M677.5,574.8V580.2"/></g>
<g fill="none" shape-rendering="auto"><circle cx="682.5" cy="577.5" r="5.2" stroke="#3a3450" stroke-width="1" opacity="0.5"/><circle cx="682.5" cy="577.5" r="4.1" stroke="#f0f000" stroke-width="1.5"/><path stroke="#f0f000" stroke-width="1.5" d="M679.8,577.5H685.2M682.5,574.8V580.2"/></g>
<g fill="none" shape-rendering="auto"><circle cx="745.5" cy="588.5" r="5.2" stroke="#3a3450" stroke-width="1" opacity="0.5"/><circle cx="745.5" cy="588.5" r="4.1" stroke="#f0a000" stroke-width="1.5"/><path stroke="#f0a000" stroke-width="1.5" d="M742.8,588.5H748.2"/></g>
<g fill="none" shape-rendering="auto"><circle cx="712.5" cy="597.5" r="5.2" stroke="#3a3450" stroke-width="1" opacity="0.5"/><circle cx="712.5" cy="597.5" r="4.1" stroke="#f0f000" stroke-width="1.5"/><path stroke="#f0f000" stroke-width="1.5" d="M709.8,597.5H715.2M712.5,594.8V600.2"/></g>
<g fill="none" shape-rendering="auto"><circle cx="609.5" cy="604.5" r="5.2" stroke="#3a3450" stroke-width="1" opacity="0.5"/><circle cx="609.5" cy="604.5" r="4.1" stroke="#f0f000" stroke-width="1.5"/><path stroke="#f0f000" stroke-width="1.5" d="M606.8,604.5H612.2M609.5,601.8V607.2"/></g>
<g fill="none" shape-rendering="auto"><circle cx="729.5" cy="611.5" r="5.2" stroke="#3a3450" stroke-width="1" opacity="0.5"/><circle cx="729.5" cy="611.5" r="4.1" stroke="#00e0e0" stroke-width="1.5"/><path stroke="#00e0e0" stroke-width="1.5" d="M726.8,611.5H732.2M729.5,608.8V614.2"/></g>
<g fill="none" shape-rendering="auto"><circle cx="634.5" cy="630.5" r="5.2" stroke="#3a3450" stroke-width="1" opacity="0.5"/><circle cx="634.5" cy="630.5" r="4.1" stroke="#f0a000" stroke-width="1.5"/><path stroke="#f0a000" stroke-width="1.5" d="M631.8,630.5H637.2"/></g>
<g fill="none" shape-rendering="auto"><circle cx="621.5" cy="637.5" r="5.2" stroke="#3a3450" stroke-width="1" opacity="0.5"/><circle cx="621.5" cy="637.5" r="4.1" stroke="#f0f000" stroke-width="1.5"/><path stroke="#f0f000" stroke-width="1.5" d="M618.8,637.5H624.2M621.5,634.8V640.2"/></g>
<g fill="none" shape-rendering="auto"><circle cx="612.5" cy="666.5" r="5.2" stroke="#3a3450" stroke-width="1" opacity="0.5"/><circle cx="612.5" cy="666.5" r="4.1" stroke="#f0f000" stroke-width="1.5"/><path stroke="#f0f000" stroke-width="1.5" d="M609.8,666.5H615.2M612.5,663.8V669.2"/></g>
<g fill="none" shape-rendering="auto"><circle cx="673.5" cy="659.5" r="5.2" stroke="#3a3450" stroke-width="1" opacity="0.5"/><circle cx="673.5" cy="659.5" r="4.1" stroke="#f0a000" stroke-width="1.5"/><path stroke="#f0a000" stroke-width="1.5" d="M670.8,659.5H676.2M673.5,656.8V662.2"/></g>
<g fill="none" shape-rendering="auto"><circle cx="638.5" cy="676.5" r="5.2" stroke="#3a3450" stroke-width="1" opacity="0.5"/><circle cx="638.5" cy="676.5" r="4.1" stroke="#f0f000" stroke-width="1.5"/><path stroke="#f0f000" stroke-width="1.5" d="M635.8,676.5H641.2M638.5,673.8V679.2"/></g>
<g fill="none" shape-rendering="auto"><circle cx="658.5" cy="685.5" r="5.2" stroke="#3a3450" stroke-width="1" opacity="0.5"/><circle cx="658.5" cy="685.5" r="4.1" stroke="#f0f000" stroke-width="1.5"/><path stroke="#f0f000" stroke-width="1.5" d="M655.8,685.5H661.2M658.5,682.8V688.2"/></g>
<g fill="none" shape-rendering="auto"><circle cx="667.5" cy="685.5" r="5.2" stroke="#3a3450" stroke-width="1" opacity="0.5"/><circle cx="667.5" cy="685.5" r="4.1" stroke="#f0f000" stroke-width="1.5"/><path stroke="#f0f000" stroke-width="1.5" d="M664.8,685.5H670.2"/></g>
<g fill="none" shape-rendering="auto"><circle cx="693.5" cy="688.5" r="5.2" stroke="#3a3450" stroke-width="1" opacity="0.5"/><circle cx="693.5" cy="688.5" r="4.1" stroke="#f0a000" stroke-width="1.5"/><path stroke="#f0a000" stroke-width="1.5" d="M690.8,688.5H696.2"/></g>
<g fill="none" shape-rendering="auto"><circle cx="716.5" cy="680.5" r="5.2" stroke="#3a3450" stroke-width="1" opacity="0.5"/><circle cx="716.5" cy="680.5" r="4.1" stroke="#f0a000" stroke-width="1.5"/><path stroke="#f0a000" stroke-width="1.5" d="M713.8,680.5H719.2M716.5,677.8V683.2"/></g>
<g fill="none" shape-rendering="auto"><circle cx="781.5" cy="686.5" r="5.2" stroke="#3a3450" stroke-width="1" opacity="0.5"/><circle cx="781.5" cy="686.5" r="4.1" stroke="#e87818" stroke-width="1.5"/><path stroke="#e87818" stroke-width="1.5" d="M778.8,686.5H784.2M781.5,683.8V689.2"/></g>
<g fill="none" shape-rendering="auto"><path stroke="#f0a000" stroke-width="1.1" d="M755.0,692.5H762.0M758.5,689.0V696.0"/></g>
<g fill="none" shape-rendering="auto"><circle cx="740.5" cy="702.5" r="5.2" stroke="#3a3450" stroke-width="1" opacity="0.5"/><circle cx="740.5" cy="702.5" r="4.1" stroke="#f0a000" stroke-width="1.5"/><path stroke="#f0a000" stroke-width="1.5" d="M737.8,702.5H743.2"/></g>
<g fill="none" shape-rendering="auto"><circle cx="676.5" cy="764.5" r="5.2" stroke="#3a3450" stroke-width="1" opacity="0.5"/><circle cx="676.5" cy="764.5" r="4.1" stroke="#f0f000" stroke-width="1.5"/><path stroke="#f0f000" stroke-width="1.5" d="M673.8,764.5H679.2M676.5,761.8V767.2"/></g>
<g fill="none" shape-rendering="auto"><path stroke="#e87818" stroke-width="1.1" d="M633.0,784.5H640.0"/></g>
<g fill="none" shape-rendering="auto"><circle cx="491.5" cy="706.5" r="5.2" stroke="#3a3450" stroke-width="1" opacity="0.5"/><circle cx="491.5" cy="706.5" r="4.1" stroke="#f0f000" stroke-width="1.5"/><path stroke="#f0f000" stroke-width="1.5" d="M488.8,706.5H494.2M491.5,703.8V709.2"/></g>
<g fill="none" shape-rendering="auto"><circle cx="542.5" cy="771.5" r="5.2" stroke="#3a3450" stroke-width="1" opacity="0.5"/><circle cx="542.5" cy="771.5" r="4.1" stroke="#f0f000" stroke-width="1.5"/><path stroke="#f0f000" stroke-width="1.5" d="M539.8,771.5H545.2M542.5,768.8V774.2"/></g>
<g fill="none" shape-rendering="auto"><circle cx="572.5" cy="704.5" r="5.2" stroke="#3a3450" stroke-width="1" opacity="0.5"/><circle cx="572.5" cy="704.5" r="4.1" stroke="#f0a000" stroke-width="1.5"/><path stroke="#f0a000" stroke-width="1.5" d="M569.8,704.5H575.2"/></g>
<g fill="none" shape-rendering="auto"><circle cx="673.5" cy="806.5" r="5.2" stroke="#3a3450" stroke-width="1" opacity="0.5"/><circle cx="673.5" cy="806.5" r="4.1" stroke="#f0a000" stroke-width="1.5"/><path stroke="#f0a000" stroke-width="1.5" d="M670.8,806.5H676.2M673.5,803.8V809.2"/></g>
<path d="M667,650 L686.6,630.5 L706,648 L686.6,670Z" fill="none" stroke="#20e020" stroke-width="1.2" stroke-dasharray="4,4"/>
<path d="M628,591 L673,636" stroke="#d0d0d0" stroke-width="1" fill="none"/>
<text x="616.5" y="588" font-size="10" fill="#f0f0f0" textLength="40" lengthAdjust="spacingAndGlyphs">X-4410</text>
<path d="M658,584.5H665M661.5,581V588" stroke="#ff1010" stroke-width="1" shape-rendering="crispEdges"/>
<text x="665" y="588" font-size="10" fill="#f0f0f0" textLength="5.5" lengthAdjust="spacingAndGlyphs">1</text>
<path d="M671,584.5H677" stroke="#f0f000" stroke-width="1.2"/>
<rect x="8.5" y="759.5" width="243.5" height="43" fill="#000" stroke="#a8a8a8" stroke-width="1"/>
<text x="13.2" y="771" font-size="10" fill="#e0e0e0" textLength="36.099999999999994" lengthAdjust="spacingAndGlyphs">Symbols</text>
<text x="52.3" y="771" font-size="10" fill="#e0e0e0" textLength="18.299999999999997" lengthAdjust="spacingAndGlyphs">-CG</text>
<text x="77.3" y="771" font-size="10" fill="#e0e0e0" textLength="15.299999999999997" lengthAdjust="spacingAndGlyphs">-IC</text>
<text x="98.2" y="771" font-size="10" fill="#e0e0e0" textLength="21.39999999999999" lengthAdjust="spacingAndGlyphs">+CG</text>
<text x="123.5" y="771" font-size="10" fill="#e0e0e0" textLength="18.099999999999994" lengthAdjust="spacingAndGlyphs">+IC</text>
<text x="152.7" y="771" font-size="10" fill="#e0e0e0" textLength="91.10000000000002" lengthAdjust="spacingAndGlyphs">Strike age color codes</text>
<text x="13.2" y="784.1" font-size="10" fill="#e0e0e0" textLength="28.400000000000002" lengthAdjust="spacingAndGlyphs">Recent</text>
<text x="13.2" y="797.1" font-size="10" fill="#e0e0e0" textLength="15.3" lengthAdjust="spacingAndGlyphs">Old</text>
<g fill="none" shape-rendering="auto"><circle cx="60.5" cy="780.5" r="5.2" stroke="#3a3450" stroke-width="1" opacity="0.5"/><circle cx="60.5" cy="780.5" r="4.1" stroke="#00e0e0" stroke-width="1.5"/><path stroke="#00e0e0" stroke-width="1.5" d="M57.8,780.5H63.2"/></g>
<g fill="none" shape-rendering="auto"><path stroke="#00e0e0" stroke-width="1.1" d="M82.0,780.5H89.0"/></g>
<g fill="none" shape-rendering="auto"><circle cx="110.5" cy="780.5" r="5.2" stroke="#3a3450" stroke-width="1" opacity="0.5"/><circle cx="110.5" cy="780.5" r="4.1" stroke="#00e0e0" stroke-width="1.5"/><path stroke="#00e0e0" stroke-width="1.5" d="M107.8,780.5H113.2M110.5,777.8V783.2"/></g>
<g fill="none" shape-rendering="auto"><path stroke="#00e0e0" stroke-width="1.1" d="M132.0,780.5H139.0M135.5,777.0V784.0"/></g>
<g fill="none" shape-rendering="auto"><circle cx="60.5" cy="793.5" r="5.2" stroke="#3a3450" stroke-width="1" opacity="0.5"/><circle cx="60.5" cy="793.5" r="4.1" stroke="#f0f000" stroke-width="1.5"/><path stroke="#f0f000" stroke-width="1.5" d="M57.8,793.5H63.2"/></g>
<g fill="none" shape-rendering="auto"><path stroke="#f0f000" stroke-width="1.1" d="M82.0,793.5H89.0"/></g>
<g fill="none" shape-rendering="auto"><circle cx="110.5" cy="793.5" r="5.2" stroke="#3a3450" stroke-width="1" opacity="0.5"/><circle cx="110.5" cy="793.5" r="4.1" stroke="#f0f000" stroke-width="1.5"/><path stroke="#f0f000" stroke-width="1.5" d="M107.8,793.5H113.2M110.5,790.8V796.2"/></g>
<g fill="none" shape-rendering="auto"><path stroke="#f0f000" stroke-width="1.1" d="M132.0,793.5H139.0M135.5,790.0V797.0"/></g>
<text x="152.7" y="784.1" font-size="10" fill="#f0f000" textLength="17.5" lengthAdjust="spacingAndGlyphs">15+</text>
<text x="187.8" y="784.1" font-size="10" fill="#f0b800" textLength="17.5" lengthAdjust="spacingAndGlyphs">30+</text>
<text x="221.9" y="784.1" font-size="10" fill="#f09800" textLength="17.900000000000006" lengthAdjust="spacingAndGlyphs">45+</text>
<text x="152.7" y="797.1" font-size="10" fill="#e88000" textLength="17.5" lengthAdjust="spacingAndGlyphs">60+</text>
<text x="187.8" y="797.1" font-size="10" fill="#f06000" textLength="17.5" lengthAdjust="spacingAndGlyphs">75+</text>
<text x="221.9" y="797.1" font-size="10" fill="#f03800" textLength="17.900000000000006" lengthAdjust="spacingAndGlyphs">90+</text>
<rect x="686" y="792" width="121" height="14" fill="#000"/>
<text x="689" y="802.4" font-size="10" fill="#e8e8e8" textLength="113.5" lengthAdjust="spacingAndGlyphs">©2005 Astrogenic Systems</text>
</g>
<rect x="812.5" y="8.5" width="319" height="319" rx="5" fill="#000" stroke="#c8c8c8" stroke-width="1"/>
<rect x="812.5" y="333.5" width="319" height="114" rx="5" fill="#000" stroke="#c8c8c8" stroke-width="1"/>
<rect x="812.5" y="453.5" width="319" height="349" rx="5" fill="#000" stroke="#c8c8c8" stroke-width="1"/>
<rect x="819" y="16" width="58" height="18" fill="#600000"/>
<path d="M819.5,33.5V16.5H876.5" fill="none" stroke="#f4f4f4" stroke-width="1"/>
<path d="M819.5,33.5H876.5V16.5" fill="none" stroke="#a8a8a8" stroke-width="1"/>
<rect x="883" y="16" width="58" height="18" fill="#383838"/>
<path d="M883.5,33.5V16.5H940.5" fill="none" stroke="#f4f4f4" stroke-width="1"/>
<path d="M883.5,33.5H940.5V16.5" fill="none" stroke="#a8a8a8" stroke-width="1"/>
<rect x="994" y="16" width="128" height="18" fill="#383838"/>
<path d="M994.5,33.5V16.5H1121.5" fill="none" stroke="#f4f4f4" stroke-width="1"/>
<path d="M994.5,33.5H1121.5V16.5" fill="none" stroke="#a8a8a8" stroke-width="1"/>
<rect x="821" y="64" width="82" height="16" fill="#606060"/>
<path d="M821.5,79.5V64.5H902.5" fill="none" stroke="#f4f4f4" stroke-width="1"/>
<path d="M821.5,79.5H902.5V64.5" fill="none" stroke="#a8a8a8" stroke-width="1"/>
<rect x="931" y="64" width="82" height="16" fill="#606060"/>
<path d="M931.5,79.5V64.5H1012.5" fill="none" stroke="#f4f4f4" stroke-width="1"/>
<path d="M931.5,79.5H1012.5V64.5" fill="none" stroke="#a8a8a8" stroke-width="1"/>
<rect x="1041" y="64" width="82" height="16" fill="#606060"/>
<path d="M1041.5,79.5V64.5H1122.5" fill="none" stroke="#f4f4f4" stroke-width="1"/>
<path d="M1041.5,79.5H1122.5V64.5" fill="none" stroke="#a8a8a8" stroke-width="1"/>
<rect x="821" y="217" width="303" height="1" fill="#909090"/>
<rect x="925.5" y="227.5" width="50" height="10" rx="2" fill="#000" stroke="#909090" stroke-width="1"/>
<rect x="926" y="228" width="30" height="9" fill="#ff0000"/>
<rect x="1028.5" y="227.5" width="50" height="10" rx="2" fill="#000" stroke="#909090" stroke-width="1"/>
<rect x="1029" y="228" width="16" height="9" fill="#90c8ff"/>
<rect x="925.5" y="281.5" width="50" height="10" rx="2" fill="#000" stroke="#909090" stroke-width="1"/>
<rect x="926" y="282" width="3" height="9" fill="#e060a0"/>
<rect x="1028.5" y="281.5" width="50" height="10" rx="2" fill="#000" stroke="#909090" stroke-width="1"/>
<rect x="1029" y="282" width="2" height="9" fill="#20d020"/>
<rect x="1016" y="231" width="7" height="2" fill="#e0e0e0"/>
<rect x="1016" y="285" width="7" height="2" fill="#e0e0e0"/>
<rect x="821" y="358" width="302" height="1" fill="#a0a0a0"/>
<text x="824.30" y="29.8" font-size="12.5" font-weight="bold" fill="#e8e8e8" textLength="47.64" lengthAdjust="spacingAndGlyphs">STRIKE</text>
<text x="889.27" y="29.8" font-size="12.5" font-weight="bold" fill="#d8d8d8" textLength="43.92" lengthAdjust="spacingAndGlyphs">NOISE</text>
<text x="997.59" y="29.9" font-size="12.5" font-weight="bold" fill="#f8f8f8" textLength="62.29" lengthAdjust="spacingAndGlyphs">Bng 122°</text>
<text x="1075.80" y="29.9" font-size="12.5" font-weight="bold" fill="#00f000" textLength="42.54" lengthAdjust="spacingAndGlyphs">299mi</text>
<text x="829.20" y="75.9" font-size="11.5" font-weight="normal" fill="#f0f0f0" textLength="65.56" lengthAdjust="spacingAndGlyphs">Strikes/min</text>
<text x="943.10" y="75.9" font-size="11.5" font-weight="normal" fill="#f0f0f0" textLength="57.96" lengthAdjust="spacingAndGlyphs">Close/min</text>
<text x="1048.78" y="75.9" font-size="11.5" font-weight="normal" fill="#f0f0f0" textLength="64.00" lengthAdjust="spacingAndGlyphs">Noises/min</text>
<text x="883.53" y="112.3" font-size="29.5" font-weight="bold" fill="#ffffff" textLength="19.27" lengthAdjust="spacingAndGlyphs">2</text>
<text x="992.37" y="112.3" font-size="29.5" font-weight="bold" fill="#ffffff" textLength="20.25" lengthAdjust="spacingAndGlyphs">0</text>
<text x="1102.37" y="112.3" font-size="29.5" font-weight="bold" fill="#c0c0c0" textLength="20.25" lengthAdjust="spacingAndGlyphs">0</text>
<text x="826.40" y="142.7" font-size="13" font-weight="normal" fill="#f0f0f0" textLength="75.70" lengthAdjust="spacingAndGlyphs">Total Strikes</text>
<text x="944.00" y="142.7" font-size="13" font-weight="normal" fill="#f0f0f0" textLength="68.53" lengthAdjust="spacingAndGlyphs">Total Close</text>
<text x="1047.00" y="142.7" font-size="13" font-weight="normal" fill="#d8d8d8" textLength="75.00" lengthAdjust="spacingAndGlyphs">Total Noises</text>
<text x="887.70" y="161.2" font-size="12.5" font-weight="normal" fill="#f0f0f0" textLength="14.50" lengthAdjust="spacingAndGlyphs">54</text>
<text x="1005.20" y="161.2" font-size="12.5" font-weight="normal" fill="#f0f0f0" textLength="6.95" lengthAdjust="spacingAndGlyphs">0</text>
<text x="1106.87" y="161.2" font-size="12.5" font-weight="normal" fill="#f0f0f0" textLength="14.72" lengthAdjust="spacingAndGlyphs">11</text>
<text x="819.97" y="215" font-size="13" font-weight="normal" fill="#c4c4c4" textLength="166.62" lengthAdjust="spacingAndGlyphs">Lightning type distribution</text>
<text x="821.10" y="236.5" font-size="12.5" font-weight="bold" fill="#ffffff" textLength="84.94" lengthAdjust="spacingAndGlyphs">Cloud-ground</text>
<text x="913.00" y="236.5" font-size="13" font-weight="normal" fill="#e0e0e0" textLength="8.57" lengthAdjust="spacingAndGlyphs">+</text>
<text x="979.10" y="236.5" font-size="12.5" font-weight="bold" fill="#ffffff" textLength="29.84" lengthAdjust="spacingAndGlyphs">61%</text>
<text x="1082.30" y="236.5" font-size="12.5" font-weight="bold" fill="#ffffff" textLength="29.54" lengthAdjust="spacingAndGlyphs">33%</text>
<text x="821.10" y="261" font-size="12.5" font-weight="bold" fill="#c8c8c8" textLength="37.71" lengthAdjust="spacingAndGlyphs">Count</text>
<text x="925.10" y="261" font-size="12.5" font-weight="bold" fill="#ffffff" textLength="15.40" lengthAdjust="spacingAndGlyphs">33</text>
<text x="1028.90" y="261" font-size="12.5" font-weight="bold" fill="#ffffff" textLength="14.80" lengthAdjust="spacingAndGlyphs">18</text>
<text x="820.03" y="290.5" font-size="12.5" font-weight="bold" fill="#ffffff" textLength="64.72" lengthAdjust="spacingAndGlyphs">Intracloud</text>
<text x="913.00" y="290.5" font-size="13" font-weight="normal" fill="#e0e0e0" textLength="8.57" lengthAdjust="spacingAndGlyphs">+</text>
<text x="979.10" y="290.5" font-size="12.5" font-weight="bold" fill="#ffffff" textLength="21.49" lengthAdjust="spacingAndGlyphs">4%</text>
<text x="1082.30" y="290.5" font-size="12.5" font-weight="bold" fill="#ffffff" textLength="21.19" lengthAdjust="spacingAndGlyphs">2%</text>
<text x="821.10" y="314.6" font-size="12.5" font-weight="bold" fill="#c8c8c8" textLength="37.71" lengthAdjust="spacingAndGlyphs">Count</text>
<text x="925.70" y="314.6" font-size="12.5" font-weight="bold" fill="#ffffff" textLength="6.95" lengthAdjust="spacingAndGlyphs">2</text>
<text x="1028.90" y="314.6" font-size="12.5" font-weight="bold" fill="#ffffff" textLength="5.86" lengthAdjust="spacingAndGlyphs">1</text>
<text x="821.00" y="352.4" font-size="16.5" font-weight="bold" fill="#00f000" textLength="191.20" lengthAdjust="spacingAndGlyphs">3/1/2026 1:45:19 AM</text>
<text x="820.56" y="388.1" font-size="13" font-weight="normal" fill="#f0f0f0" textLength="48.82" lengthAdjust="spacingAndGlyphs">Squelch</text>
<text x="909.60" y="388.1" font-size="13" font-weight="normal" fill="#f0f0f0" textLength="7.03" lengthAdjust="spacingAndGlyphs">0</text>
<text x="980.32" y="388.1" font-size="13" font-weight="normal" fill="#f0f0f0" textLength="44.60" lengthAdjust="spacingAndGlyphs">Upload</text>
<text x="1060.11" y="388.1" font-size="13" font-weight="normal" fill="#c8c8c8" textLength="55.14" lengthAdjust="spacingAndGlyphs">Disabled</text>
<text x="820.53" y="407.8" font-size="13" font-weight="normal" fill="#f0f0f0" textLength="72.69" lengthAdjust="spacingAndGlyphs">Persistence</text>
<text x="909.60" y="407.8" font-size="13" font-weight="normal" fill="#f0f0f0" textLength="40.83" lengthAdjust="spacingAndGlyphs">90 min</text>
<text x="981.40" y="407.8" font-size="13" font-weight="normal" fill="#f0f0f0" textLength="50.27" lengthAdjust="spacingAndGlyphs">Capture</text>
<text x="1061.20" y="407.8" font-size="13" font-weight="normal" fill="#00e000" textLength="36.42" lengthAdjust="spacingAndGlyphs">Active</text>
<text x="820.55" y="427.5" font-size="13" font-weight="normal" fill="#f0f0f0" textLength="40.18" lengthAdjust="spacingAndGlyphs">Range</text>
<text x="909.60" y="427.5" font-size="13" font-weight="normal" fill="#f0f0f0" textLength="40.83" lengthAdjust="spacingAndGlyphs">313 mi</text>
<text x="980.37" y="427.5" font-size="13" font-weight="normal" fill="#f0f0f0" textLength="52.81" lengthAdjust="spacingAndGlyphs">Receiver</text>
<text x="1060.11" y="427.5" font-size="13" font-weight="normal" fill="#00e000" textLength="51.97" lengthAdjust="spacingAndGlyphs">Enabled</text>
<text x="820.53" y="474.7" font-size="13" font-weight="normal" fill="#d0d0d0" textLength="44.07" lengthAdjust="spacingAndGlyphs">Uptime</text>
<text x="909.06" y="474.7" font-size="13" font-weight="normal" fill="#ffffff" textLength="52.37" lengthAdjust="spacingAndGlyphs">1141:30</text>
<text x="980.33" y="474.7" font-size="13" font-weight="normal" fill="#d0d0d0" textLength="61.87" lengthAdjust="spacingAndGlyphs">Peak time</text>
<text x="1060.11" y="474.7" font-size="13" font-weight="normal" fill="#d0d0d0" textLength="24.34" lengthAdjust="spacingAndGlyphs">Plot</text>
<text x="820.51" y="497.8" font-size="13" font-weight="normal" fill="#d0d0d0" textLength="60.61" lengthAdjust="spacingAndGlyphs">Peak rate</text>
<text x="909.60" y="497.8" font-size="13" font-weight="normal" fill="#ffffff" textLength="35.28" lengthAdjust="spacingAndGlyphs">4/min</text>
<text x="980.82" y="497.8" font-size="13" font-weight="normal" fill="#ffffff" textLength="51.64" lengthAdjust="spacingAndGlyphs">1:44 AM</text>
<text x="1060.10" y="497.8" font-size="13" font-weight="normal" fill="#ffffff" textLength="36.56" lengthAdjust="spacingAndGlyphs">Strike</text>
<text x="822.20" y="527.7" font-size="13" font-weight="normal" fill="#d0d0d0" textLength="76.57" lengthAdjust="spacingAndGlyphs">Trend graph</text>
<text x="908.80" y="527.7" font-size="13" font-weight="normal" fill="#ffffff" textLength="40.83" lengthAdjust="spacingAndGlyphs">60 min</text>
<path d="M1088.5,542 V777.4 M822,777.4 H1088.5" stroke="#d0d0d0" stroke-width="1" fill="none"/>
<path d="M1084.5,738.2H1088.5" stroke="#d0d0d0" stroke-width="1"/>
<path d="M1084.5,698.9H1088.5" stroke="#d0d0d0" stroke-width="1"/>
<text x="1092" y="703.4" font-size="11.5" fill="#d0d0d0">10</text>
<path d="M1084.5,659.7H1088.5" stroke="#d0d0d0" stroke-width="1"/>
<path d="M1084.5,620.5H1088.5" stroke="#d0d0d0" stroke-width="1"/>
<text x="1092" y="625.0" font-size="11.5" fill="#d0d0d0">20</text>
<path d="M1084.5,581.2H1088.5" stroke="#d0d0d0" stroke-width="1"/>
<path d="M1084.5,542.0H1088.5" stroke="#d0d0d0" stroke-width="1"/>
<text x="1092" y="546.5" font-size="11.5" fill="#d0d0d0">30</text>
<text x="820.0" y="793" font-size="11.5" fill="#d0d0d0">60</text>
<text x="864.4" y="793" font-size="11.5" fill="#d0d0d0">50</text>
<text x="908.8" y="793" font-size="11.5" fill="#d0d0d0">40</text>
<text x="953.2" y="793" font-size="11.5" fill="#d0d0d0">30</text>
<text x="997.7" y="793" font-size="11.5" fill="#d0d0d0">20</text>
<text x="1042.1" y="793" font-size="11.5" fill="#d0d0d0">10</text>
<text x="1087.5" y="793" font-size="11.5" fill="#d0d0d0">0</text>
<text x="1100.8" y="793" font-size="11.5" fill="#d0d0d0">min</text>
<path d="M822.0,777.4L822.3,769.6H823.0L824.9,777.4 M827.8,777.4L829.7,769.6H832.1L834.0,777.4 M835.1,777.4L837.0,769.6H840.0L841.9,777.4 M848.7,777.4L850.6,769.6H853.7L855.6,777.4 M856.7,777.4L858.6,769.6H865.4L867.3,777.4 M874.5,777.4L877.0,761.7H880.7L883.2,777.4 M881.0,777.4L883.5,761.7H884.5L887.0,777.4 M891.8,777.4L893.7,769.6H897.3L899.2,777.4 M909.6,777.4L911.5,769.6H914.6L916.5,777.4 M926.1,777.4L928.0,769.6H931.0L932.9,777.4 M937.9,777.4L939.8,769.6H942.9L944.8,777.4 M947.8,777.4L950.3,761.7H950.8L953.3,777.4 M950.7,777.4L953.2,761.7H953.7L956.2,777.4 M960.1,777.4L962.0,769.6H969.4L971.3,777.4 M972.2,777.4L975.3,753.9H977.3L980.4,777.4 M982.6,777.4L984.5,769.6H992.5L994.4,777.4 M997.4,777.4L999.3,769.6H1002.0L1003.9,777.4 M1016.0,777.4L1018.5,761.7H1019.5L1022.0,777.4 M1021.1,777.4L1023.0,769.6H1028.0L1029.9,777.4 M1029.9,777.4L1033.0,753.9H1034.0L1037.1,777.4 M1037.5,777.4L1040.0,761.7H1042.0L1044.5,777.4 M1039.5,777.4L1043.2,746.0H1045.8L1049.5,777.4 M1047.9,777.4L1049.8,769.6H1054.4L1056.3,777.4 M1061.8,777.4L1064.3,761.7H1069.5L1072.0,777.4 M1071.6,777.4L1073.5,769.6H1076.8L1078.7,777.4 M1082.3,777.4L1085.4,753.9H1088.0L1088.5,777.4" fill="none" stroke="#ffffff" stroke-width="1" shape-rendering="crispEdges"/>
<path d="M879,776.9V761.7" stroke="#ff0000" stroke-width="1.2"/>
<path d="M881,776.9V761.7" stroke="#20d020" stroke-width="1.2"/>
<path d="M878,776.9V769.6" stroke="#90c8ff" stroke-width="1.2"/>
<path d="M953,776.9V769.6" stroke="#ff0000" stroke-width="1.2"/>
<path d="M951,776.9V769.6" stroke="#90c8ff" stroke-width="1.2"/>
<path d="M976.5,776.9V761.7" stroke="#ff0000" stroke-width="1.2"/>
<path d="M975,776.9V769.6" stroke="#90c8ff" stroke-width="1.2"/>
<path d="M988,776.9V769.6" stroke="#ff0000" stroke-width="1.2"/>
<path d="M989,776.9V769.6" stroke="#90c8ff" stroke-width="1.2"/>
<path d="M1019,776.9V769.6" stroke="#e060a0" stroke-width="1.2"/>
<path d="M1020,776.9V769.6" stroke="#ff0000" stroke-width="1.2"/>
<path d="M1033.5,776.9V761.7" stroke="#90c8ff" stroke-width="1.2"/>
<path d="M1036,776.9V769.6" stroke="#ff0000" stroke-width="1.2"/>
<path d="M1041,776.9V761.7" stroke="#ff0000" stroke-width="1.2"/>
<path d="M1044.5,776.9V753.9" stroke="#ff0000" stroke-width="1.2"/>
<path d="M1046,776.9V769.6" stroke="#90c8ff" stroke-width="1.2"/>
<path d="M1066,776.9V761.7" stroke="#ff0000" stroke-width="1.2"/>
<path d="M1065,776.9V769.6" stroke="#90c8ff" stroke-width="1.2"/>
<path d="M1087,776.9V761.7" stroke="#ff0000" stroke-width="1.2"/>
<path d="M1086,776.9V769.6" stroke="#90c8ff" stroke-width="1.2"/>
</svg></body></html>
